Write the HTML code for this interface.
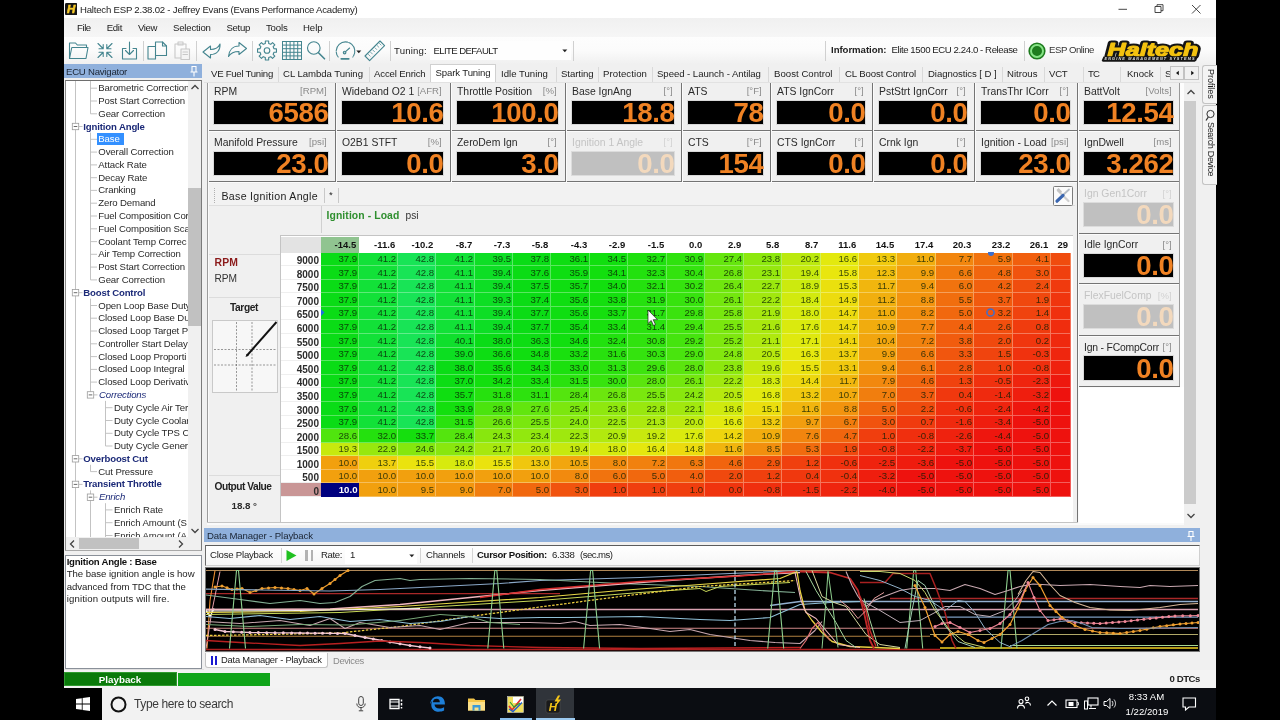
<!DOCTYPE html>
<html><head><meta charset="utf-8"><title>Haltech ESP 2.38.02 - Jeffrey Evans (Evans Performance Academy)</title>
<style>
html,body{margin:0;padding:0;background:#000;}
body{width:1280px;height:720px;overflow:hidden;position:relative;font-family:"Liberation Sans",sans-serif;}
#root{position:absolute;left:0;top:0;width:1280px;height:720px;overflow:hidden;will-change:transform;}
#win{position:absolute;left:64px;top:0;width:1152px;height:688px;background:#f0f0f0;}
.t{position:absolute;white-space:nowrap;overflow:visible;}
.r{position:absolute;box-sizing:border-box;}
.c{position:absolute;box-sizing:border-box;text-align:right;padding-right:2.5px;line-height:14.1px;white-space:nowrap;overflow:hidden;}
</style></head>
<body>
<div id="root">
<div id="win"></div>
<div class="r" style="left:64.0px;top:0.0px;width:1152.0px;height:18.0px;background:#ffffff;"></div>
<svg class="r" style="left:65.0px;top:3.0px;" width="12.4" height="12.2" viewBox="0 0 12.4 12.2"><rect x="0" y="0" width="12.400" height="12.200" rx="1.5" fill="#161616"/><text x="6.100" y="10.300" font-family="Liberation Sans, sans-serif" font-weight="bold" font-style="italic" font-size="11.500" text-anchor="middle" fill="#f5c92a" stroke="#f5c92a" stroke-width="0.600">H</text></svg>
<div class="t " style="top:2.5px;height:14px;line-height:14px;font-size:9.60px;color:#222;left:80.0px;letter-spacing:-0.21px;">Haltech ESP 2.38.02 - Jeffrey Evans (Evans Performance Academy)</div>
<svg class="r" style="left:1110.0px;top:0.0px;" width="100" height="19" viewBox="0 0 100 19"><path d="M8.5 9.3h8.5" stroke="#333" stroke-width="0.9" fill="none"/><path d="M45 6.5h6v6h-6z M47 6.5v-1.8h6v6h-2" stroke="#333" stroke-width="0.9" fill="none"/><path d="M82 5l8.5 8.5M90.5 5l-8.5 8.5" stroke="#333" stroke-width="0.9" fill="none"/></svg>
<div class="r" style="left:64.0px;top:18.0px;width:1152.0px;height:19.0px;background:linear-gradient(#f0f0f0,#f6f6f6);"></div>
<div class="t " style="top:20.8px;height:14px;line-height:14px;font-size:9.60px;color:#1a1a1a;left:77.0px;letter-spacing:-0.42px;">File</div>
<div class="t " style="top:20.8px;height:14px;line-height:14px;font-size:9.60px;color:#1a1a1a;left:106.8px;letter-spacing:-0.34px;">Edit</div>
<div class="t " style="top:20.8px;height:14px;line-height:14px;font-size:9.60px;color:#1a1a1a;left:138.0px;letter-spacing:-0.41px;">View</div>
<div class="t " style="top:20.8px;height:14px;line-height:14px;font-size:9.60px;color:#1a1a1a;left:173.0px;letter-spacing:-0.19px;">Selection</div>
<div class="t " style="top:20.8px;height:14px;line-height:14px;font-size:9.60px;color:#1a1a1a;left:226.5px;letter-spacing:-0.32px;">Setup</div>
<div class="t " style="top:20.8px;height:14px;line-height:14px;font-size:9.60px;color:#1a1a1a;left:266.0px;letter-spacing:-0.18px;">Tools</div>
<div class="t " style="top:20.8px;height:14px;line-height:14px;font-size:9.60px;color:#1a1a1a;left:303.0px;letter-spacing:-0.06px;">Help</div>
<div class="r" style="left:64.0px;top:37.0px;width:1152.0px;height:27.0px;background:linear-gradient(#fdfdfd 0%,#fbfbfb 50%,#f0f0f0 100%);"></div>
<svg class="r" style="left:66.0px;top:38.0px;" width="26" height="24" viewBox="0 0 26 24"><g fill="none" stroke="#44858f" stroke-width="1.1" stroke-linejoin="round" stroke-linecap="round"><path d="M3.5 20.5v-15.5h6l1.8 2h9.2v2.5"/><path d="M3.5 20.5l2.3-11h16.2l-2 11z"/></g></svg>
<svg class="r" style="left:95.0px;top:38.0px;" width="20" height="24" viewBox="0 0 20 24"><g fill="none" stroke="#44858f" stroke-width="1.1" stroke-linejoin="round" stroke-linecap="round"><path d="M3 5.5l5 5M8.2 6.5v4.2h-4.2M17 5.5l-5 5M11.8 6.5v4.2h4.2M3 19.5l5-5M8.2 18.5v-4.2h-4.2M17 19.5l-5-5M11.8 18.5v-4.2h4.2"/></g></svg>
<svg class="r" style="left:119.0px;top:38.0px;" width="22" height="24" viewBox="0 0 22 24"><g fill="none" stroke="#44858f" stroke-width="1.1" stroke-linejoin="round" stroke-linecap="round"><path d="M7 10.5h-3.5v10.5h14v-10.5h-3.5"/><path d="M10.5 4v12M6.5 12.5l4 4 4-4"/></g></svg>
<div class="r" style="left:143.0px;top:41.0px;width:1.0px;height:20.0px;background:#d0d0d0;"></div>
<svg class="r" style="left:146.0px;top:38.0px;" width="24" height="24" viewBox="0 0 24 24"><g fill="none" stroke="#44858f" stroke-width="1.1" stroke-linejoin="round" stroke-linecap="round"><path d="M2 8.5h7.5v12.5h-7.5z"/><path d="M9.5 8.5v-4.5h7l4 4v9.5h-11"/><path d="M16.5 4v4h4"/></g></svg>
<svg class="r" style="left:172.0px;top:38.0px;" width="22" height="24" viewBox="0 0 22 24"><g fill="none" stroke="#c8c8c8" stroke-width="1.1" stroke-linejoin="round" stroke-linecap="round"><path d="M3 6h11v14h-11z"/><path d="M6 4h5v3h-5z"/><path d="M9 11h8.5v10.5h-8.5z" fill="#f4f4f4"/><path d="M11 14h4.5M11 16.5h4.5"/></g></svg>
<div class="r" style="left:196.0px;top:41.0px;width:1.0px;height:20.0px;background:#d0d0d0;"></div>
<svg class="r" style="left:200.0px;top:38.0px;" width="24" height="24" viewBox="0 0 24 24"><g fill="none" stroke="#44858f" stroke-width="1.1" stroke-linejoin="round" stroke-linecap="round"><path d="M3 14l7.5-6v3.5c5 0 8-2 9.5-5.5c0.5 6-3 10.5-9.5 10.5v3.5z"/></g></svg>
<svg class="r" style="left:225.0px;top:38.0px;" width="24" height="24" viewBox="0 0 24 24"><g fill="none" stroke="#44858f" stroke-width="1.1" stroke-linejoin="round" stroke-linecap="round"><path d="M21.5 10.5l-7.5-6v3.5c-6 0-10 4-10.5 10.5c2.5-4 5.5-5 10.5-5v3z"/></g></svg>
<div class="r" style="left:252.0px;top:41.0px;width:1.0px;height:20.0px;background:#d0d0d0;"></div>
<svg class="r" style="left:256.0px;top:38.0px;" width="22" height="24" viewBox="0 0 22 24"><g fill="none" stroke="#44858f" stroke-width="1.1" stroke-linejoin="round" stroke-linecap="round"><path d="M20.46 10.85L20.46 14.15L18.00 14.18L17.14 16.26L18.85 18.02L16.52 20.35L14.76 18.64L12.68 19.50L12.65 21.96L9.35 21.96L9.32 19.50L7.24 18.64L5.48 20.35L3.15 18.02L4.86 16.26L4.00 14.18L1.54 14.15L1.54 10.85L4.00 10.82L4.86 8.74L3.15 6.98L5.48 4.65L7.24 6.36L9.32 5.50L9.35 3.04L12.65 3.04L12.68 5.50L14.76 6.36L16.52 4.65L18.85 6.98L17.14 8.74L18.00 10.82z"/><circle cx="11" cy="12.5" r="2.8"/></g></svg>
<svg class="r" style="left:281.0px;top:38.0px;" width="22" height="24" viewBox="0 0 22 24"><g fill="none" stroke="#44858f" stroke-width="1" stroke-linejoin="round" stroke-linecap="round"><path d="M1.5 3.5v18"/><path d="M5.3 3.5v18"/><path d="M9.1 3.5v18"/><path d="M12.9 3.5v18"/><path d="M16.7 3.5v18"/><path d="M20.5 3.5v18"/><path d="M1.5 3.5h19"/><path d="M1.5 7.1h19"/><path d="M1.5 10.7h19"/><path d="M1.5 14.3h19"/><path d="M1.5 17.9h19"/><path d="M1.5 21.5h19"/></g></svg>
<svg class="r" style="left:305.0px;top:38.0px;" width="22" height="24" viewBox="0 0 22 24"><g fill="none" stroke="#44858f" stroke-width="1.1" stroke-linejoin="round" stroke-linecap="round"><circle cx="8.8" cy="10" r="6.3"/><path d="M13.5 14.8l6 6" stroke-width="1.6"/></g></svg>
<div class="r" style="left:329.0px;top:41.0px;width:1.0px;height:20.0px;background:#d0d0d0;"></div>
<svg class="r" style="left:333.0px;top:38.0px;" width="24" height="24" viewBox="0 0 24 24"><g fill="none" stroke="#44858f" stroke-width="1.1" stroke-linejoin="round" stroke-linecap="round"><path d="M5.2 19a9.3 9.3 0 1 1 14.6 0" stroke-dasharray="5.5 1.2 16 1.2 16 1.2 20"/><path d="M12 14.2l4.6-4.2"/><circle cx="11.6" cy="14.6" r="1.3"/><path d="M8.3 20.8h7.4" stroke-width="1.8"/></g></svg>
<svg class="r" style="left:356.0px;top:50.0px;" width="6" height="4" viewBox="0 0 6 4"><path d="M0.3 0.5h5l-2.5 2.8z" fill="#222"/></svg>
<svg class="r" style="left:363.0px;top:38.0px;" width="24" height="24" viewBox="0 0 24 24"><g fill="none" stroke="#44858f" stroke-width="1.1" stroke-linejoin="round" stroke-linecap="round"><path d="M2 18l15-15 4.6 4.6-15 15z"/><path d="M5.5 16.5l1.6 1.6M7.7 14.3l1.6 1.6M9.9 12.100l1.600 1.600M12.1 9.900l1.600 1.600M14.300 7.700l1.600 1.600M16.500 5.500l1.600 1.600" stroke-width="0.7"/></g></svg>
<div class="r" style="left:390.0px;top:41.0px;width:1.0px;height:20.0px;background:#d0d0d0;"></div>
<div class="t " style="top:43.8px;height:14px;line-height:14px;font-size:9.60px;color:#222;left:394.0px;letter-spacing:0.19px;">Tuning:</div>
<div class="r" style="left:430.0px;top:41.0px;width:141.0px;height:19.0px;background:#fefefe;"></div>
<div class="t " style="top:43.8px;height:14px;line-height:14px;font-size:9.60px;color:#222;left:433.5px;letter-spacing:-0.60px;">ELITE DEFAULT</div>
<svg class="r" style="left:561.5px;top:49.0px;" width="6" height="4" viewBox="0 0 6 4"><path d="M0.3 0.5h5l-2.5 2.8z" fill="#222"/></svg>
<div class="r" style="left:573.0px;top:41.0px;width:1.0px;height:20.0px;background:#d0d0d0;"></div>
<div class="r" style="left:825.0px;top:41.0px;width:1.0px;height:20.0px;background:#d0d0d0;"></div>
<div class="t " style="top:43.3px;height:14px;line-height:14px;font-size:9.60px;color:#222;left:831.0px;font-weight:bold;letter-spacing:-0.04px;">Information:</div>
<div class="t " style="top:43.3px;height:14px;line-height:14px;font-size:9.60px;color:#222;left:891.5px;letter-spacing:-0.41px;">Elite 1500 ECU 2.24.0 - Release</div>
<div class="r" style="left:1023.5px;top:41.0px;width:1.0px;height:20.0px;background:#d0d0d0;"></div>
<svg class="r" style="left:1027.0px;top:40.5px;" width="20" height="20" viewBox="0 0 20 20"><circle cx="10" cy="10" r="8.6" fill="#1d7a1d"/><circle cx="10" cy="10" r="6" fill="none" stroke="#86e486" stroke-width="2"/><circle cx="10" cy="10" r="4" fill="#1e7d1e"/></svg>
<div class="t " style="top:43.3px;height:14px;line-height:14px;font-size:9.60px;color:#333;left:1049.0px;letter-spacing:-0.45px;">ESP Online</div>
<svg class="r" style="left:1100.0px;top:39.0px;" width="106" height="24" viewBox="0 0 106 24"><g transform="translate(7.5,17.4) scale(1.34,1)" font-family="Liberation Sans, sans-serif" font-weight="bold" font-style="italic" font-size="18.800"><text x="0" y="0" fill="#141414" stroke="#141414" stroke-width="5.2" stroke-linejoin="round">Haltech</text><text x="0" y="0" fill="#f4c20f" stroke="#f4c20f" stroke-width="1.1" stroke-linejoin="round">Haltech</text></g><path d="M3.5 17.5h94.500l-1.800 4.200-1.500 1h-92l-1-1.200z" fill="#141414"/><text x="4.500" y="21.400" font-family="Liberation Sans, sans-serif" font-weight="bold" font-style="italic" font-size="3.800" fill="#e4e4e4" textLength="90" lengthAdjust="spacing">ENGINE MANAGEMENT SYSTEMS</text></svg>
<div class="r" style="left:64.0px;top:64.0px;width:138.0px;height:14.0px;background:#8fb0dc;"></div>
<div class="t " style="top:64.8px;height:14px;line-height:14px;font-size:9.60px;color:#1a2433;left:66.0px;letter-spacing:-0.23px;">ECU Navigator</div>
<svg class="r" style="left:189.0px;top:65.0px;" width="10" height="13" viewBox="0 0 10 13"><path d="M3 1.500h4v5.500h-4z M1.500 7h7 M5 7v4.500" fill="none" stroke="#fff" stroke-width="1.1"/></svg>
<div class="r" style="left:65.0px;top:79.5px;width:137.0px;height:471.0px;background:#ffffff;border:1px solid #a8a8a8;border-top-color:#6e6e6e;border-right-color:#7a7a7a;border-left-color:#8a8a8a;"></div>
<div class="r" style="left:187.5px;top:80.5px;width:13.5px;height:456.0px;background:#f0f0f0;"></div>
<div class="r" style="left:187.5px;top:188.0px;width:13.5px;height:138.0px;background:#c1c1c1;"></div>
<svg class="r" style="left:189.5px;top:83.0px;" width="10" height="8" viewBox="0 0 10 8"><path d="M1.500 6l3.500-3.500 3.500 3.500" fill="none" stroke="#444" stroke-width="1.3"/></svg>
<svg class="r" style="left:189.5px;top:526.5px;" width="10" height="8" viewBox="0 0 10 8"><path d="M1.500 2l3.500 3.500 3.500-3.500" fill="none" stroke="#444" stroke-width="1.3"/></svg>
<div class="r" style="left:66.0px;top:536.5px;width:121.5px;height:13.0px;background:#f0f0f0;"></div>
<div class="r" style="left:187.5px;top:536.5px;width:13.5px;height:13.0px;background:#f0f0f0;"></div>
<div class="r" style="left:79.4px;top:538.0px;width:59.4px;height:10.8px;background:#c1c1c1;"></div>
<svg class="r" style="left:68.0px;top:538.5px;" width="8" height="10" viewBox="0 0 8 10"><path d="M6 1.500l-3.500 3.500 3.500 3.500" fill="none" stroke="#444" stroke-width="1.300"/></svg>
<svg class="r" style="left:177.0px;top:538.5px;" width="8" height="10" viewBox="0 0 8 10"><path d="M2 1.500l3.500 3.500-3.500 3.500" fill="none" stroke="#444" stroke-width="1.300"/></svg>
<div class="r" style="left:66px;top:80.5px;width:121.5px;height:456px;overflow:hidden;">
<div class="t " style="top:0.7px;height:14px;line-height:14px;font-size:9.60px;color:#2a2a2a;left:32.3px;letter-spacing:-0.11px;">Barometric Correction</div>
<div class="t " style="top:13.5px;height:14px;line-height:14px;font-size:9.60px;color:#2a2a2a;left:32.3px;letter-spacing:-0.11px;">Post Start Correction</div>
<div class="t " style="top:26.3px;height:14px;line-height:14px;font-size:9.60px;color:#2a2a2a;left:32.3px;letter-spacing:-0.11px;">Gear Correction</div>
<div class="t " style="top:39.0px;height:14px;line-height:14px;font-size:9.60px;color:#1c2a78;left:17.3px;font-weight:bold;letter-spacing:-0.15px;">Ignition Angle</div>
<div class="r" style="left:30.7px;top:52.0px;width:27.0px;height:12.5px;background:#3390ff;"></div>
<div class="t " style="top:51.8px;height:14px;line-height:14px;font-size:9.60px;color:#ffffff;left:32.3px;letter-spacing:-0.14px;">Base</div>
<div class="t " style="top:64.6px;height:14px;line-height:14px;font-size:9.60px;color:#2a2a2a;left:32.3px;letter-spacing:-0.11px;">Overall Correction</div>
<div class="t " style="top:77.4px;height:14px;line-height:14px;font-size:9.60px;color:#2a2a2a;left:32.3px;letter-spacing:-0.11px;">Attack Rate</div>
<div class="t " style="top:90.2px;height:14px;line-height:14px;font-size:9.60px;color:#2a2a2a;left:32.3px;letter-spacing:-0.13px;">Decay Rate</div>
<div class="t " style="top:102.9px;height:14px;line-height:14px;font-size:9.60px;color:#2a2a2a;left:32.3px;letter-spacing:-0.12px;">Cranking</div>
<div class="t " style="top:115.7px;height:14px;line-height:14px;font-size:9.60px;color:#2a2a2a;left:32.3px;letter-spacing:-0.13px;">Zero Demand</div>
<div class="t " style="top:128.5px;height:14px;line-height:14px;font-size:9.60px;color:#2a2a2a;left:32.3px;letter-spacing:-0.12px;">Fuel Composition Cor</div>
<div class="t " style="top:141.3px;height:14px;line-height:14px;font-size:9.60px;color:#2a2a2a;left:32.3px;letter-spacing:-0.12px;">Fuel Composition Sca</div>
<div class="t " style="top:154.1px;height:14px;line-height:14px;font-size:9.60px;color:#2a2a2a;left:32.3px;letter-spacing:-0.12px;">Coolant Temp Correc</div>
<div class="t " style="top:166.8px;height:14px;line-height:14px;font-size:9.60px;color:#2a2a2a;left:32.3px;letter-spacing:-0.11px;">Air Temp Correction</div>
<div class="t " style="top:179.6px;height:14px;line-height:14px;font-size:9.60px;color:#2a2a2a;left:32.3px;letter-spacing:-0.11px;">Post Start Correction</div>
<div class="t " style="top:192.4px;height:14px;line-height:14px;font-size:9.60px;color:#2a2a2a;left:32.3px;letter-spacing:-0.11px;">Gear Correction</div>
<div class="t " style="top:205.2px;height:14px;line-height:14px;font-size:9.60px;color:#1c2a78;left:17.3px;font-weight:bold;letter-spacing:-0.16px;">Boost Control</div>
<div class="t " style="top:218.0px;height:14px;line-height:14px;font-size:9.60px;color:#2a2a2a;left:32.3px;letter-spacing:-0.12px;">Open Loop Base Duty</div>
<div class="t " style="top:230.7px;height:14px;line-height:14px;font-size:9.60px;color:#2a2a2a;left:32.3px;letter-spacing:-0.12px;">Closed Loop Base Du</div>
<div class="t " style="top:243.5px;height:14px;line-height:14px;font-size:9.60px;color:#2a2a2a;left:32.3px;letter-spacing:-0.12px;">Closed Loop Target P</div>
<div class="t " style="top:256.3px;height:14px;line-height:14px;font-size:9.60px;color:#2a2a2a;left:32.3px;letter-spacing:-0.10px;">Controller Start Delay</div>
<div class="t " style="top:269.1px;height:14px;line-height:14px;font-size:9.60px;color:#2a2a2a;left:32.3px;letter-spacing:-0.11px;">Closed Loop Proporti</div>
<div class="t " style="top:281.9px;height:14px;line-height:14px;font-size:9.60px;color:#2a2a2a;left:32.3px;letter-spacing:-0.11px;">Closed Loop Integral</div>
<div class="t " style="top:294.6px;height:14px;line-height:14px;font-size:9.60px;color:#2a2a2a;left:32.3px;letter-spacing:-0.11px;">Closed Loop Derivativ</div>
<div class="t " style="top:307.4px;height:14px;line-height:14px;font-size:9.60px;color:#1c2a78;left:33.0px;font-style:italic;letter-spacing:-0.18px;">Corrections</div>
<div class="t " style="top:320.2px;height:14px;line-height:14px;font-size:9.60px;color:#2a2a2a;left:48.0px;letter-spacing:-0.11px;">Duty Cycle Air Ter</div>
<div class="t " style="top:333.0px;height:14px;line-height:14px;font-size:9.60px;color:#2a2a2a;left:48.0px;letter-spacing:-0.11px;">Duty Cycle Coolar</div>
<div class="t " style="top:345.8px;height:14px;line-height:14px;font-size:9.60px;color:#2a2a2a;left:48.0px;letter-spacing:-0.12px;">Duty Cycle TPS Co</div>
<div class="t " style="top:358.5px;height:14px;line-height:14px;font-size:9.60px;color:#2a2a2a;left:48.0px;letter-spacing:-0.11px;">Duty Cycle Generi</div>
<div class="t " style="top:371.3px;height:14px;line-height:14px;font-size:9.60px;color:#1c2a78;left:17.3px;font-weight:bold;letter-spacing:-0.16px;">Overboost Cut</div>
<div class="t " style="top:384.1px;height:14px;line-height:14px;font-size:9.60px;color:#2a2a2a;left:32.3px;letter-spacing:-0.12px;">Cut Pressure</div>
<div class="t " style="top:396.9px;height:14px;line-height:14px;font-size:9.60px;color:#1c2a78;left:17.3px;font-weight:bold;letter-spacing:-0.14px;">Transient Throttle</div>
<div class="t " style="top:409.7px;height:14px;line-height:14px;font-size:9.60px;color:#1c2a78;left:33.0px;font-style:italic;letter-spacing:-0.18px;">Enrich</div>
<div class="t " style="top:422.4px;height:14px;line-height:14px;font-size:9.60px;color:#2a2a2a;left:48.0px;letter-spacing:-0.11px;">Enrich Rate</div>
<div class="t " style="top:435.2px;height:14px;line-height:14px;font-size:9.60px;color:#2a2a2a;left:48.0px;letter-spacing:-0.12px;">Enrich Amount (S</div>
<div class="t " style="top:448.0px;height:14px;line-height:14px;font-size:9.60px;color:#2a2a2a;left:48.0px;letter-spacing:-0.12px;">Enrich Amount (A</div>
<svg class="r" style="left:-66px;top:-80.5px" width="260" height="640" viewBox="0 0 260 640"><g stroke="#bcbcbc" stroke-width="0.9" fill="none"><path d="M90.5 88.2L97.0 88.2"/><path d="M90.5 101.0L97.0 101.0"/><path d="M90.5 113.8L97.0 113.8"/><path d="M79.0 126.5L82.5 126.5"/><path d="M90.5 139.3L97.0 139.3"/><path d="M90.5 152.1L97.0 152.1"/><path d="M90.5 164.9L97.0 164.9"/><path d="M90.5 177.7L97.0 177.7"/><path d="M90.5 190.4L97.0 190.4"/><path d="M90.5 203.2L97.0 203.2"/><path d="M90.5 216.0L97.0 216.0"/><path d="M90.5 228.8L97.0 228.8"/><path d="M90.5 241.6L97.0 241.6"/><path d="M90.5 254.3L97.0 254.3"/><path d="M90.5 267.1L97.0 267.1"/><path d="M90.5 279.9L97.0 279.9"/><path d="M79.0 292.7L82.5 292.7"/><path d="M90.5 305.5L97.0 305.5"/><path d="M90.5 318.2L97.0 318.2"/><path d="M90.5 331.0L97.0 331.0"/><path d="M90.5 343.8L97.0 343.8"/><path d="M90.5 356.6L97.0 356.6"/><path d="M90.5 369.4L97.0 369.4"/><path d="M90.5 382.1L97.0 382.1"/><path d="M94.0 394.9L97.5 394.9"/><path d="M105.5 407.7L112.5 407.7"/><path d="M105.5 420.5L112.5 420.5"/><path d="M105.5 433.3L112.5 433.3"/><path d="M105.5 446.0L112.5 446.0"/><path d="M79.0 458.8L82.5 458.8"/><path d="M90.5 471.6L97.0 471.6"/><path d="M79.0 484.4L82.5 484.4"/><path d="M94.0 497.2L97.5 497.2"/><path d="M105.5 509.9L112.5 509.9"/><path d="M105.5 522.7L112.5 522.7"/><path d="M105.5 535.5L112.5 535.5"/><path d="M75.5 80.0L75.5 545.0"/><path d="M90.5 80.0L90.5 113.8"/><path d="M90.5 132.5L90.5 279.9"/><path d="M90.5 298.7L90.5 394.9"/><path d="M105.5 400.9L105.5 446.0"/><path d="M90.5 464.8L90.5 471.6"/><path d="M90.5 490.4L90.5 545.0"/><path d="M105.5 503.2L105.5 545.0"/></g><rect x="72.3" y="123.3" width="6.400" height="6.400" fill="#fff" stroke="#9c9c9c" stroke-width="0.8"/><path d="M73.7 126.5h3.600" stroke="#444" stroke-width="0.8"/><rect x="72.3" y="289.5" width="6.400" height="6.400" fill="#fff" stroke="#9c9c9c" stroke-width="0.8"/><path d="M73.7 292.7h3.600" stroke="#444" stroke-width="0.8"/><rect x="87.3" y="391.7" width="6.400" height="6.400" fill="#fff" stroke="#9c9c9c" stroke-width="0.8"/><path d="M88.7 394.9h3.600" stroke="#444" stroke-width="0.8"/><rect x="72.3" y="455.6" width="6.400" height="6.400" fill="#fff" stroke="#9c9c9c" stroke-width="0.8"/><path d="M73.7 458.8h3.600" stroke="#444" stroke-width="0.8"/><rect x="72.3" y="481.2" width="6.400" height="6.400" fill="#fff" stroke="#9c9c9c" stroke-width="0.8"/><path d="M73.7 484.4h3.600" stroke="#444" stroke-width="0.8"/><rect x="87.3" y="494.0" width="6.400" height="6.400" fill="#fff" stroke="#9c9c9c" stroke-width="0.8"/><path d="M88.7 497.2h3.600" stroke="#444" stroke-width="0.8"/></svg>
</div>
<div class="r" style="left:65.0px;top:555.0px;width:137.0px;height:113.5px;background:#ffffff;border:1px solid #8a9099;"></div>
<div class="t " style="top:555.3px;height:14px;line-height:14px;font-size:9.60px;color:#111;left:66.7px;font-weight:bold;letter-spacing:-0.24px;">Ignition Angle : Base</div>
<div class="t " style="top:567.3px;height:14px;line-height:14px;font-size:9.60px;color:#222;left:66.7px;letter-spacing:-0.04px;">The base ignition angle is how</div>
<div class="t " style="top:579.7px;height:14px;line-height:14px;font-size:9.60px;color:#222;left:66.7px;letter-spacing:-0.05px;">advanced from TDC that the</div>
<div class="t " style="top:591.5px;height:14px;line-height:14px;font-size:9.60px;color:#222;left:66.7px;letter-spacing:0.14px;">ignition outputs will fire.</div>
<div class="r" style="left:64.0px;top:669.0px;width:1152.0px;height:19.0px;background:#f3f3f3;border-top:1px solid #e0e0e0;"></div>
<div class="r" style="left:64.0px;top:672.0px;width:112.5px;height:14.0px;background:#0a7a0a;border:1px solid #2f9a2f;"></div>
<div class="t " style="top:671.8px;height:15px;line-height:15px;font-size:9.80px;color:#ffffff;left:20.0px;width:200px;text-align:center;font-weight:bold;">Playback</div>
<div class="r" style="left:178.0px;top:672.5px;width:92.0px;height:13.5px;background:#10a51a;"></div>
<div class="t " style="top:672.1px;height:14px;line-height:14px;font-size:9.60px;color:#222;right:80.0px;font-weight:bold;letter-spacing:-0.43px;">0 DTCs</div>
<div class="r" style="left:204.0px;top:64.0px;width:996.0px;height:18.0px;background:#f0f0f0;"></div>
<div class="r" style="left:278.0px;top:66.5px;width:1.0px;height:15.5px;background:#d9d9d9;"></div>
<div class="r" style="left:368.5px;top:66.5px;width:1.0px;height:15.5px;background:#d9d9d9;"></div>
<div class="r" style="left:430.0px;top:66.5px;width:1.0px;height:15.5px;background:#d9d9d9;"></div>
<div class="r" style="left:495.0px;top:66.5px;width:1.0px;height:15.5px;background:#d9d9d9;"></div>
<div class="r" style="left:555.5px;top:66.5px;width:1.0px;height:15.5px;background:#d9d9d9;"></div>
<div class="r" style="left:598.0px;top:66.5px;width:1.0px;height:15.5px;background:#d9d9d9;"></div>
<div class="r" style="left:652.0px;top:66.5px;width:1.0px;height:15.5px;background:#d9d9d9;"></div>
<div class="r" style="left:767.5px;top:66.5px;width:1.0px;height:15.5px;background:#d9d9d9;"></div>
<div class="r" style="left:838.5px;top:66.5px;width:1.0px;height:15.5px;background:#d9d9d9;"></div>
<div class="r" style="left:922.0px;top:66.5px;width:1.0px;height:15.5px;background:#d9d9d9;"></div>
<div class="r" style="left:1001.5px;top:66.5px;width:1.0px;height:15.5px;background:#d9d9d9;"></div>
<div class="r" style="left:1043.5px;top:66.5px;width:1.0px;height:15.5px;background:#d9d9d9;"></div>
<div class="r" style="left:1082.5px;top:66.5px;width:1.0px;height:15.5px;background:#d9d9d9;"></div>
<div class="r" style="left:1120.0px;top:66.5px;width:1.0px;height:15.5px;background:#d9d9d9;"></div>
<div class="r" style="left:1159.5px;top:66.5px;width:1.0px;height:15.5px;background:#d9d9d9;"></div>
<div class="r" style="left:430.0px;top:64.0px;width:65.5px;height:19.0px;background:#ffffff;border:1px solid #d0d0d0;border-bottom:none;"></div>
<div class="t " style="top:67.2px;height:14px;line-height:14px;font-size:9.60px;color:#222;left:211.0px;letter-spacing:-0.26px;">VE Fuel Tuning</div>
<div class="t " style="top:67.2px;height:14px;line-height:14px;font-size:9.60px;color:#222;left:283.0px;letter-spacing:-0.05px;">CL Lambda Tuning</div>
<div class="t " style="top:67.2px;height:14px;line-height:14px;font-size:9.60px;color:#222;left:374.0px;letter-spacing:-0.15px;">Accel Enrich</div>
<div class="t " style="top:65.7px;height:14px;line-height:14px;font-size:9.60px;color:#222;left:435.5px;letter-spacing:-0.13px;">Spark Tuning</div>
<div class="t " style="top:67.2px;height:14px;line-height:14px;font-size:9.60px;color:#222;left:501.0px;">Idle Tuning</div>
<div class="t " style="top:67.2px;height:14px;line-height:14px;font-size:9.60px;color:#222;left:561.0px;letter-spacing:-0.07px;">Starting</div>
<div class="t " style="top:67.2px;height:14px;line-height:14px;font-size:9.60px;color:#222;left:603.0px;letter-spacing:0.08px;">Protection</div>
<div class="t " style="top:67.2px;height:14px;line-height:14px;font-size:9.60px;color:#222;left:657.0px;letter-spacing:-0.05px;">Speed - Launch - Antilag</div>
<div class="t " style="top:67.2px;height:14px;line-height:14px;font-size:9.60px;color:#222;left:774.0px;letter-spacing:0.03px;">Boost Control</div>
<div class="t " style="top:67.2px;height:14px;line-height:14px;font-size:9.60px;color:#222;left:845.0px;letter-spacing:-0.11px;">CL Boost Control</div>
<div class="t " style="top:67.2px;height:14px;line-height:14px;font-size:9.60px;color:#222;left:928.0px;letter-spacing:-0.08px;">Diagnostics [ D ]</div>
<div class="t " style="top:67.2px;height:14px;line-height:14px;font-size:9.60px;color:#222;left:1007.0px;letter-spacing:0.01px;">Nitrous</div>
<div class="t " style="top:67.2px;height:14px;line-height:14px;font-size:9.60px;color:#222;left:1049.0px;letter-spacing:-0.23px;">VCT</div>
<div class="t " style="top:67.2px;height:14px;line-height:14px;font-size:9.60px;color:#222;left:1088.0px;letter-spacing:-0.90px;">TC</div>
<div class="t " style="top:67.2px;height:14px;line-height:14px;font-size:9.60px;color:#222;left:1127.0px;letter-spacing:-0.04px;">Knock</div>
<div class="t " style="top:67.2px;height:14px;line-height:14px;font-size:9.60px;color:#222;left:1165.0px;">S</div>
<div class="r" style="left:1170.0px;top:65.8px;width:14.4px;height:13.8px;background:#f0f0f0;border:1px solid #c2c2c2;"></div>
<div class="r" style="left:1184.4px;top:65.8px;width:14.4px;height:13.8px;background:#f0f0f0;border:1px solid #c2c2c2;"></div>
<svg class="r" style="left:1175.0px;top:70.0px;" width="5" height="6" viewBox="0 0 5 6"><path d="M3.800 0.800v4.400l-2.800-2.200z" fill="#111"/></svg>
<svg class="r" style="left:1189.5px;top:70.0px;" width="5" height="6" viewBox="0 0 5 6"><path d="M1.200 0.800v4.400l2.800-2.200z" fill="#111"/></svg>
<div class="r" style="left:204.0px;top:82.0px;width:996.0px;height:444.0px;background:#f0f0f0;border-top:1px solid #e2e2e2;"></div>
<div class="r" style="left:1184.0px;top:83.0px;width:13.5px;height:441.0px;background:#f0f0f0;"></div>
<div class="r" style="left:1184.3px;top:101.2px;width:11.6px;height:403.0px;background:#cbcbcb;"></div>
<svg class="r" style="left:1185.5px;top:88.0px;" width="10" height="8" viewBox="0 0 10 8"><path d="M1.500 6l3.500-3.500 3.500 3.500" fill="none" stroke="#444" stroke-width="1.3"/></svg>
<svg class="r" style="left:1185.5px;top:512.0px;" width="10" height="8" viewBox="0 0 10 8"><path d="M1.500 2l3.500 3.500 3.500-3.500" fill="none" stroke="#444" stroke-width="1.3"/></svg>
<div class="r" style="left:1200.0px;top:64.0px;width:16.0px;height:606.0px;background:#f0f0f0;"></div>
<div class="r" style="left:1201.5px;top:64.5px;width:15.0px;height:39.5px;background:#f4f4f4;border:1px solid #c4c4c4;border-right:none;border-radius:3px 0 0 3px;"></div>
<div class="r" style="left:1201.5px;top:105.2px;width:15.0px;height:79.5px;background:#f4f4f4;border:1px solid #c4c4c4;border-right:none;border-radius:3px 0 0 3px;"></div>
<div class="t" style="left:1204.500px;top:69.2px;font-size:9px;color:#222;writing-mode:vertical-rl;line-height:12px;letter-spacing:-0.03px;">Profiles</div>
<div class="t" style="left:1204.500px;top:122px;font-size:9px;color:#222;writing-mode:vertical-rl;line-height:12px;letter-spacing:-0.33px;">Search Device</div>
<svg class="r" style="left:1204.0px;top:108.5px;" width="12" height="13" viewBox="0 0 12 13"><circle cx="6.500" cy="5" r="3.600" fill="none" stroke="#333" stroke-width="1"/><path d="M4.300 8l-2.300 3.500" stroke="#333" stroke-width="1.300"/></svg>
<div class="r" style="left:208.0px;top:83.4px;width:126.0px;height:46.8px;background:#f0f0f0;"></div>
<div class="t " style="top:83.7px;height:16px;line-height:16px;font-size:10.40px;color:#2a2a2a;left:214.0px;">RPM</div>
<div class="t " style="top:84.4px;height:14px;line-height:14px;font-size:9.60px;color:#8a8a8a;right:953.3px;">[RPM]</div>
<div class="r" style="left:214.0px;top:100.6px;width:114.0px;height:23.5px;background:#000000;box-shadow:0 0 0 1px #d8d8d8;"></div>
<div class="t " style="top:93.9px;height:38px;line-height:38px;font-size:27.60px;color:#f08223;right:951.5px;font-weight:bold;letter-spacing:-0.35px;">6586</div>
<div class="r" style="left:336.0px;top:83.4px;width:113.0px;height:46.8px;background:#f0f0f0;"></div>
<div class="t " style="top:83.7px;height:16px;line-height:16px;font-size:10.40px;color:#2a2a2a;left:342.0px;">Wideband O2 1</div>
<div class="t " style="top:84.4px;height:14px;line-height:14px;font-size:9.60px;color:#8a8a8a;right:838.3px;">[AFR]</div>
<div class="r" style="left:342.0px;top:100.6px;width:101.0px;height:23.5px;background:#000000;box-shadow:0 0 0 1px #d8d8d8;"></div>
<div class="t " style="top:93.9px;height:38px;line-height:38px;font-size:27.60px;color:#f08223;right:836.5px;font-weight:bold;letter-spacing:-0.35px;">10.6</div>
<div class="r" style="left:451.0px;top:83.4px;width:113.0px;height:46.8px;background:#f0f0f0;"></div>
<div class="t " style="top:83.7px;height:16px;line-height:16px;font-size:10.40px;color:#2a2a2a;left:457.0px;">Throttle Position</div>
<div class="t " style="top:84.4px;height:14px;line-height:14px;font-size:9.60px;color:#8a8a8a;right:723.3px;">[%]</div>
<div class="r" style="left:457.0px;top:100.6px;width:101.0px;height:23.5px;background:#000000;box-shadow:0 0 0 1px #d8d8d8;"></div>
<div class="t " style="top:93.9px;height:38px;line-height:38px;font-size:27.60px;color:#f08223;right:721.5px;font-weight:bold;letter-spacing:-0.35px;">100.0</div>
<div class="r" style="left:566.0px;top:83.4px;width:114.0px;height:46.8px;background:#f0f0f0;"></div>
<div class="t " style="top:83.7px;height:16px;line-height:16px;font-size:10.40px;color:#2a2a2a;left:572.0px;">Base IgnAng</div>
<div class="t " style="top:84.4px;height:14px;line-height:14px;font-size:9.60px;color:#8a8a8a;right:607.3px;">[°]</div>
<div class="r" style="left:572.0px;top:100.6px;width:102.0px;height:23.5px;background:#000000;box-shadow:0 0 0 1px #d8d8d8;"></div>
<div class="t " style="top:93.9px;height:38px;line-height:38px;font-size:27.60px;color:#f08223;right:605.5px;font-weight:bold;letter-spacing:-0.35px;">18.8</div>
<div class="r" style="left:682.0px;top:83.4px;width:87.0px;height:46.8px;background:#f0f0f0;"></div>
<div class="t " style="top:83.7px;height:16px;line-height:16px;font-size:10.40px;color:#2a2a2a;left:688.0px;">ATS</div>
<div class="t " style="top:84.4px;height:14px;line-height:14px;font-size:9.60px;color:#8a8a8a;right:518.3px;">[°F]</div>
<div class="r" style="left:688.0px;top:100.6px;width:75.0px;height:23.5px;background:#000000;box-shadow:0 0 0 1px #d8d8d8;"></div>
<div class="t " style="top:93.9px;height:38px;line-height:38px;font-size:27.60px;color:#f08223;right:516.5px;font-weight:bold;letter-spacing:-0.35px;">78</div>
<div class="r" style="left:771.0px;top:83.4px;width:100.0px;height:46.8px;background:#f0f0f0;"></div>
<div class="t " style="top:83.7px;height:16px;line-height:16px;font-size:10.40px;color:#2a2a2a;left:777.0px;">ATS IgnCorr</div>
<div class="t " style="top:84.4px;height:14px;line-height:14px;font-size:9.60px;color:#8a8a8a;right:416.3px;">[°]</div>
<div class="r" style="left:777.0px;top:100.6px;width:88.0px;height:23.5px;background:#000000;box-shadow:0 0 0 1px #d8d8d8;"></div>
<div class="t " style="top:93.9px;height:38px;line-height:38px;font-size:27.60px;color:#f08223;right:414.5px;font-weight:bold;letter-spacing:-0.35px;">0.0</div>
<div class="r" style="left:873.0px;top:83.4px;width:100.0px;height:46.8px;background:#f0f0f0;"></div>
<div class="t " style="top:83.7px;height:16px;line-height:16px;font-size:10.40px;color:#2a2a2a;left:879.0px;">PstStrt IgnCorr</div>
<div class="t " style="top:84.4px;height:14px;line-height:14px;font-size:9.60px;color:#8a8a8a;right:314.3px;">[°]</div>
<div class="r" style="left:879.0px;top:100.6px;width:88.0px;height:23.5px;background:#000000;box-shadow:0 0 0 1px #d8d8d8;"></div>
<div class="t " style="top:93.9px;height:38px;line-height:38px;font-size:27.60px;color:#f08223;right:312.5px;font-weight:bold;letter-spacing:-0.35px;">0.0</div>
<div class="r" style="left:975.0px;top:83.4px;width:101.0px;height:46.8px;background:#f0f0f0;"></div>
<div class="t " style="top:83.7px;height:16px;line-height:16px;font-size:10.40px;color:#2a2a2a;left:981.0px;">TransThr ICorr</div>
<div class="t " style="top:84.4px;height:14px;line-height:14px;font-size:9.60px;color:#8a8a8a;right:211.3px;">[°]</div>
<div class="r" style="left:981.0px;top:100.6px;width:89.0px;height:23.5px;background:#000000;box-shadow:0 0 0 1px #d8d8d8;"></div>
<div class="t " style="top:93.9px;height:38px;line-height:38px;font-size:27.60px;color:#f08223;right:209.5px;font-weight:bold;letter-spacing:-0.35px;">0.0</div>
<div class="r" style="left:1078.0px;top:83.4px;width:101.0px;height:46.8px;background:#f0f0f0;"></div>
<div class="t " style="top:83.7px;height:16px;line-height:16px;font-size:10.40px;color:#2a2a2a;left:1084.0px;">BattVolt</div>
<div class="t " style="top:84.4px;height:14px;line-height:14px;font-size:9.60px;color:#8a8a8a;right:108.3px;">[Volts]</div>
<div class="r" style="left:1084.0px;top:100.6px;width:89.0px;height:23.5px;background:#000000;box-shadow:0 0 0 1px #d8d8d8;"></div>
<div class="t " style="top:93.9px;height:38px;line-height:38px;font-size:27.60px;color:#f08223;right:106.5px;font-weight:bold;letter-spacing:-0.35px;">12.54</div>
<div class="r" style="left:208.0px;top:131.2px;width:126.0px;height:49.8px;background:#f0f0f0;"></div>
<div class="t " style="top:134.7px;height:16px;line-height:16px;font-size:10.40px;color:#2a2a2a;left:214.0px;">Manifold Pressure</div>
<div class="t " style="top:135.4px;height:14px;line-height:14px;font-size:9.60px;color:#8a8a8a;right:953.3px;">[psi]</div>
<div class="r" style="left:214.0px;top:151.6px;width:114.0px;height:23.3px;background:#000000;box-shadow:0 0 0 1px #d8d8d8;"></div>
<div class="t " style="top:144.7px;height:38px;line-height:38px;font-size:27.60px;color:#f08223;right:951.5px;font-weight:bold;letter-spacing:-0.35px;">23.0</div>
<div class="r" style="left:336.0px;top:131.2px;width:113.0px;height:49.8px;background:#f0f0f0;"></div>
<div class="t " style="top:134.7px;height:16px;line-height:16px;font-size:10.40px;color:#2a2a2a;left:342.0px;">O2B1 STFT</div>
<div class="t " style="top:135.4px;height:14px;line-height:14px;font-size:9.60px;color:#8a8a8a;right:838.3px;">[%]</div>
<div class="r" style="left:342.0px;top:151.6px;width:101.0px;height:23.3px;background:#000000;box-shadow:0 0 0 1px #d8d8d8;"></div>
<div class="t " style="top:144.7px;height:38px;line-height:38px;font-size:27.60px;color:#f08223;right:836.5px;font-weight:bold;letter-spacing:-0.35px;">0.0</div>
<div class="r" style="left:451.0px;top:131.2px;width:113.0px;height:49.8px;background:#f0f0f0;"></div>
<div class="t " style="top:134.7px;height:16px;line-height:16px;font-size:10.40px;color:#2a2a2a;left:457.0px;">ZeroDem Ign</div>
<div class="t " style="top:135.4px;height:14px;line-height:14px;font-size:9.60px;color:#8a8a8a;right:723.3px;">[°]</div>
<div class="r" style="left:457.0px;top:151.6px;width:101.0px;height:23.3px;background:#000000;box-shadow:0 0 0 1px #d8d8d8;"></div>
<div class="t " style="top:144.7px;height:38px;line-height:38px;font-size:27.60px;color:#f08223;right:721.5px;font-weight:bold;letter-spacing:-0.35px;">3.0</div>
<div class="r" style="left:566.0px;top:131.2px;width:114.0px;height:49.8px;background:#f0f0f0;"></div>
<div class="t " style="top:134.7px;height:16px;line-height:16px;font-size:10.40px;color:#c4c4c4;left:572.0px;">Ignition 1 Angle</div>
<div class="t " style="top:135.4px;height:14px;line-height:14px;font-size:9.60px;color:#d2d2d2;right:607.3px;">[°]</div>
<div class="r" style="left:572.0px;top:151.6px;width:102.0px;height:23.3px;background:#c0c0c0;box-shadow:0 0 0 1px #dcdcdc;"></div>
<div class="t " style="top:144.7px;height:38px;line-height:38px;font-size:27.60px;color:#f3d9bd;right:605.5px;font-weight:bold;letter-spacing:-0.35px;">0.0</div>
<div class="r" style="left:682.0px;top:131.2px;width:87.0px;height:49.8px;background:#f0f0f0;"></div>
<div class="t " style="top:134.7px;height:16px;line-height:16px;font-size:10.40px;color:#2a2a2a;left:688.0px;">CTS</div>
<div class="t " style="top:135.4px;height:14px;line-height:14px;font-size:9.60px;color:#8a8a8a;right:518.3px;">[°F]</div>
<div class="r" style="left:688.0px;top:151.6px;width:75.0px;height:23.3px;background:#000000;box-shadow:0 0 0 1px #d8d8d8;"></div>
<div class="t " style="top:144.7px;height:38px;line-height:38px;font-size:27.60px;color:#f08223;right:516.5px;font-weight:bold;letter-spacing:-0.35px;">154</div>
<div class="r" style="left:771.0px;top:131.2px;width:100.0px;height:49.8px;background:#f0f0f0;"></div>
<div class="t " style="top:134.7px;height:16px;line-height:16px;font-size:10.40px;color:#2a2a2a;left:777.0px;">CTS IgnCorr</div>
<div class="t " style="top:135.4px;height:14px;line-height:14px;font-size:9.60px;color:#8a8a8a;right:416.3px;">[°]</div>
<div class="r" style="left:777.0px;top:151.6px;width:88.0px;height:23.3px;background:#000000;box-shadow:0 0 0 1px #d8d8d8;"></div>
<div class="t " style="top:144.7px;height:38px;line-height:38px;font-size:27.60px;color:#f08223;right:414.5px;font-weight:bold;letter-spacing:-0.35px;">0.0</div>
<div class="r" style="left:873.0px;top:131.2px;width:100.0px;height:49.8px;background:#f0f0f0;"></div>
<div class="t " style="top:134.7px;height:16px;line-height:16px;font-size:10.40px;color:#2a2a2a;left:879.0px;">Crnk Ign</div>
<div class="t " style="top:135.4px;height:14px;line-height:14px;font-size:9.60px;color:#8a8a8a;right:314.3px;">[°]</div>
<div class="r" style="left:879.0px;top:151.6px;width:88.0px;height:23.3px;background:#000000;box-shadow:0 0 0 1px #d8d8d8;"></div>
<div class="t " style="top:144.7px;height:38px;line-height:38px;font-size:27.60px;color:#f08223;right:312.5px;font-weight:bold;letter-spacing:-0.35px;">0.0</div>
<div class="r" style="left:975.0px;top:131.2px;width:101.0px;height:49.8px;background:#f0f0f0;"></div>
<div class="t " style="top:134.7px;height:16px;line-height:16px;font-size:10.40px;color:#2a2a2a;left:981.0px;">Ignition - Load</div>
<div class="t " style="top:135.4px;height:14px;line-height:14px;font-size:9.60px;color:#8a8a8a;right:211.3px;">[psi]</div>
<div class="r" style="left:981.0px;top:151.6px;width:89.0px;height:23.3px;background:#000000;box-shadow:0 0 0 1px #d8d8d8;"></div>
<div class="t " style="top:144.7px;height:38px;line-height:38px;font-size:27.60px;color:#f08223;right:209.5px;font-weight:bold;letter-spacing:-0.35px;">23.0</div>
<div class="r" style="left:1078.0px;top:131.2px;width:101.0px;height:49.8px;background:#f0f0f0;"></div>
<div class="t " style="top:134.7px;height:16px;line-height:16px;font-size:10.40px;color:#2a2a2a;left:1084.0px;">IgnDwell</div>
<div class="t " style="top:135.4px;height:14px;line-height:14px;font-size:9.60px;color:#8a8a8a;right:108.3px;">[ms]</div>
<div class="r" style="left:1084.0px;top:151.6px;width:89.0px;height:23.3px;background:#000000;box-shadow:0 0 0 1px #d8d8d8;"></div>
<div class="t " style="top:144.7px;height:38px;line-height:38px;font-size:27.60px;color:#f08223;right:106.5px;font-weight:bold;letter-spacing:-0.35px;">3.262</div>
<div class="r" style="left:1078.0px;top:182.8px;width:101.0px;height:49.4px;background:#f0f0f0;"></div>
<div class="t " style="top:186.3px;height:16px;line-height:16px;font-size:10.40px;color:#c4c4c4;left:1084.0px;">Ign Gen1Corr</div>
<div class="t " style="top:187.0px;height:14px;line-height:14px;font-size:9.60px;color:#d2d2d2;right:108.3px;">[°]</div>
<div class="r" style="left:1084.0px;top:203.2px;width:89.0px;height:22.9px;background:#c0c0c0;box-shadow:0 0 0 1px #dcdcdc;"></div>
<div class="t " style="top:196.1px;height:38px;line-height:38px;font-size:27.60px;color:#f3d9bd;right:106.5px;font-weight:bold;letter-spacing:-0.35px;">0.0</div>
<div class="r" style="left:1078.0px;top:233.8px;width:101.0px;height:49.0px;background:#f0f0f0;"></div>
<div class="t " style="top:237.3px;height:16px;line-height:16px;font-size:10.40px;color:#2a2a2a;left:1084.0px;">Idle IgnCorr</div>
<div class="t " style="top:238.0px;height:14px;line-height:14px;font-size:9.60px;color:#8a8a8a;right:108.3px;">[°]</div>
<div class="r" style="left:1084.0px;top:254.2px;width:89.0px;height:22.5px;background:#000000;box-shadow:0 0 0 1px #d8d8d8;"></div>
<div class="t " style="top:246.9px;height:38px;line-height:38px;font-size:27.60px;color:#f08223;right:106.5px;font-weight:bold;letter-spacing:-0.35px;">0.0</div>
<div class="r" style="left:1078.0px;top:284.4px;width:101.0px;height:50.0px;background:#f0f0f0;"></div>
<div class="t " style="top:287.9px;height:16px;line-height:16px;font-size:10.40px;color:#c4c4c4;left:1084.0px;">FlexFuelComp</div>
<div class="t " style="top:288.6px;height:14px;line-height:14px;font-size:9.60px;color:#d2d2d2;right:108.3px;">[%]</div>
<div class="r" style="left:1084.0px;top:304.8px;width:89.0px;height:23.5px;background:#c0c0c0;box-shadow:0 0 0 1px #dcdcdc;"></div>
<div class="t " style="top:298.0px;height:38px;line-height:38px;font-size:27.60px;color:#f3d9bd;right:106.5px;font-weight:bold;letter-spacing:-0.35px;">0.0</div>
<div class="r" style="left:1078.0px;top:336.0px;width:101.0px;height:50.0px;background:#f0f0f0;"></div>
<div class="t " style="top:339.5px;height:16px;line-height:16px;font-size:10.40px;color:#2a2a2a;left:1084.0px;letter-spacing:-0.20px;">Ign - FCompCorr</div>
<div class="t " style="top:340.2px;height:14px;line-height:14px;font-size:9.60px;color:#8a8a8a;right:108.3px;">[°]</div>
<div class="r" style="left:1084.0px;top:356.4px;width:89.0px;height:23.5px;background:#000000;box-shadow:0 0 0 1px #d8d8d8;"></div>
<div class="t " style="top:349.6px;height:38px;line-height:38px;font-size:27.60px;color:#f08223;right:106.5px;font-weight:bold;letter-spacing:-0.35px;">0.0</div>
<div class="r" style="left:1078.0px;top:387.0px;width:106.0px;height:137.0px;background:#ffffff;"></div>
<div class="r" style="left:208.0px;top:129.8px;width:972.0px;height:1.0px;background:#747474;"></div>
<div class="r" style="left:208.0px;top:130.8px;width:972.0px;height:1.0px;background:#fbfbfb;"></div>
<div class="r" style="left:208.0px;top:181.0px;width:972.0px;height:1.0px;background:#747474;"></div>
<div class="r" style="left:208.0px;top:182.0px;width:972.0px;height:1.0px;background:#fbfbfb;"></div>
<div class="r" style="left:1077.5px;top:232.5px;width:102.5px;height:1.0px;background:#747474;"></div>
<div class="r" style="left:1077.5px;top:233.5px;width:102.5px;height:1.0px;background:#fbfbfb;"></div>
<div class="r" style="left:1077.5px;top:283.2px;width:102.5px;height:1.0px;background:#747474;"></div>
<div class="r" style="left:1077.5px;top:284.2px;width:102.5px;height:1.0px;background:#fbfbfb;"></div>
<div class="r" style="left:1077.5px;top:334.7px;width:102.5px;height:1.0px;background:#747474;"></div>
<div class="r" style="left:1077.5px;top:335.7px;width:102.5px;height:1.0px;background:#fbfbfb;"></div>
<div class="r" style="left:1077.5px;top:385.7px;width:102.5px;height:1.0px;background:#747474;"></div>
<div class="r" style="left:1077.5px;top:386.7px;width:102.5px;height:1.0px;background:#fbfbfb;"></div>
<div class="r" style="left:334.5px;top:83.0px;width:1.0px;height:98.5px;background:#747474;"></div>
<div class="r" style="left:335.5px;top:83.0px;width:1.0px;height:98.5px;background:#fbfbfb;"></div>
<div class="r" style="left:449.5px;top:83.0px;width:1.0px;height:98.5px;background:#747474;"></div>
<div class="r" style="left:450.5px;top:83.0px;width:1.0px;height:98.5px;background:#fbfbfb;"></div>
<div class="r" style="left:564.5px;top:83.0px;width:1.0px;height:98.5px;background:#747474;"></div>
<div class="r" style="left:565.5px;top:83.0px;width:1.0px;height:98.5px;background:#fbfbfb;"></div>
<div class="r" style="left:680.5px;top:83.0px;width:1.0px;height:98.5px;background:#747474;"></div>
<div class="r" style="left:681.5px;top:83.0px;width:1.0px;height:98.5px;background:#fbfbfb;"></div>
<div class="r" style="left:769.5px;top:83.0px;width:1.0px;height:98.5px;background:#747474;"></div>
<div class="r" style="left:770.5px;top:83.0px;width:1.0px;height:98.5px;background:#fbfbfb;"></div>
<div class="r" style="left:871.5px;top:83.0px;width:1.0px;height:98.5px;background:#747474;"></div>
<div class="r" style="left:872.5px;top:83.0px;width:1.0px;height:98.5px;background:#fbfbfb;"></div>
<div class="r" style="left:973.5px;top:83.0px;width:1.0px;height:98.5px;background:#747474;"></div>
<div class="r" style="left:974.5px;top:83.0px;width:1.0px;height:98.5px;background:#fbfbfb;"></div>
<div class="r" style="left:1077.0px;top:83.0px;width:1.0px;height:439.5px;background:#747474;"></div>
<div class="r" style="left:1078.0px;top:83.0px;width:1.0px;height:439.5px;background:#fbfbfb;"></div>
<div class="r" style="left:1179.2px;top:83.0px;width:1.0px;height:303.2px;background:#9a9a9a;"></div>
<div class="r" style="left:1180.2px;top:83.0px;width:1.0px;height:303.2px;background:#fbfbfb;"></div>
<div class="r" style="left:1180.3px;top:83.0px;width:4.0px;height:304.0px;background:#fdfdfd;"></div>
<div class="r" style="left:207.2px;top:82.5px;width:1.0px;height:440.0px;background:#9c9c9c;"></div>
<div class="r" style="left:208.2px;top:82.5px;width:1.0px;height:440.0px;background:#fafafa;"></div>
<div class="r" style="left:207.2px;top:522.0px;width:871.0px;height:1.0px;background:#c4c4c4;"></div>
<div class="r" style="left:207.2px;top:523.0px;width:977.0px;height:2.0px;background:#fafafa;"></div>
<div class="r" style="left:209.0px;top:183.0px;width:868.0px;height:339.0px;background:#f0f0f0;"></div>
<div class="r" style="left:209.0px;top:184.0px;width:866.0px;height:21.5px;background:#f2f2f2;border-bottom:1px solid #dedede;"></div>
<svg class="r" style="left:213.0px;top:187.0px;" width="4" height="17" viewBox="0 0 4 17"><rect x="1" y="1" width="1" height="1" fill="#b0b0b0"/><rect x="1" y="3" width="1" height="1" fill="#b0b0b0"/><rect x="1" y="5" width="1" height="1" fill="#b0b0b0"/><rect x="1" y="7" width="1" height="1" fill="#b0b0b0"/><rect x="1" y="9" width="1" height="1" fill="#b0b0b0"/><rect x="1" y="11" width="1" height="1" fill="#b0b0b0"/><rect x="1" y="13" width="1" height="1" fill="#b0b0b0"/><rect x="1" y="15" width="1" height="1" fill="#b0b0b0"/></svg>
<div class="t " style="top:188.0px;height:16px;line-height:16px;font-size:10.60px;color:#222;left:221.5px;letter-spacing:0.30px;">Base Ignition Angle</div>
<div class="r" style="left:324.0px;top:188.0px;width:1.0px;height:15.0px;background:#c8c8c8;"></div>
<div class="r" style="left:338.0px;top:188.0px;width:1.0px;height:15.0px;background:#c8c8c8;"></div>
<div class="t " style="top:188.0px;height:14px;line-height:14px;font-size:9.60px;color:#222;left:329.0px;">*</div>
<div class="r" style="left:1053.2px;top:186.2px;width:19.7px;height:19.6px;background:#fbfbfb;border:1px solid #7c7c7c;border-radius:1.5px;"></div>
<svg class="r" style="left:1053.2px;top:186.2px;" width="20" height="20" viewBox="0 0 20 20"><path d="M5 4.500l10.500 10.500" stroke="#cfcfcf" stroke-width="2.200" stroke-linecap="round"/><path d="M4.500 3l3.500 3.500" stroke="#c4c4c4" stroke-width="3" stroke-linecap="butt"/><path d="M10 9l6-5.500" stroke="#b4bcc4" stroke-width="1.800" stroke-linecap="round"/><path d="M4 15.200l6-5.800" stroke="#3a66b0" stroke-width="3.200" stroke-linecap="round"/></svg>
<div class="r" style="left:321.0px;top:206.0px;width:1.0px;height:27.0px;background:#d0d0d0;"></div>
<div class="t " style="top:207.8px;height:16px;line-height:16px;font-size:10.40px;color:#2f8f2f;left:326.5px;font-weight:bold;letter-spacing:0.09px;">Ignition - Load</div>
<div class="t " style="top:208.3px;height:15px;line-height:15px;font-size:10.20px;color:#333;left:405.5px;letter-spacing:-0.01px;">psi</div>
<div class="r" style="left:209.0px;top:253.5px;width:71.0px;height:1.0px;background:#dcdcdc;"></div>
<div class="r" style="left:209.0px;top:297.0px;width:71.0px;height:1.0px;background:#dcdcdc;"></div>
<div class="r" style="left:209.0px;top:474.5px;width:71.0px;height:1.0px;background:#dcdcdc;"></div>
<div class="t " style="top:254.5px;height:16px;line-height:16px;font-size:10.40px;color:#8b1a1a;left:214.5px;font-weight:bold;letter-spacing:0.13px;">RPM</div>
<div class="t " style="top:270.5px;height:15px;line-height:15px;font-size:10.20px;color:#333;left:214.5px;letter-spacing:-0.06px;">RPM</div>
<div class="t " style="top:300.0px;height:15px;line-height:15px;font-size:10.20px;color:#222;left:144.0px;width:200px;text-align:center;font-weight:bold;letter-spacing:-0.40px;">Target</div>
<div class="r" style="left:212.0px;top:320.0px;width:65.5px;height:72.5px;background:#f7f7f7;border:1px solid #c9c9c9;"></div>
<svg class="r" style="left:212.0px;top:320.0px;" width="66" height="73" viewBox="0 0 66 73"><g stroke="#555" stroke-width="0.6" stroke-dasharray="2 1.5" fill="none"><path d="M24.500 2v69M40 2v69M2 29.500h62M2 45h62"/></g><path d="M35 35.500l29.500-33.500" stroke="#111" stroke-width="1.900"/><path d="M33.500 37l3.200-1.200-2-2z" fill="#111"/></svg>
<div class="t " style="top:479.3px;height:15px;line-height:15px;font-size:10.20px;color:#222;left:214.5px;font-weight:bold;letter-spacing:-0.49px;">Output Value</div>
<div class="t " style="top:498.0px;height:15px;line-height:15px;font-size:9.80px;color:#2a2a2a;left:231.5px;font-weight:bold;letter-spacing:-0.04px;">18.8 °</div>
<div class="r" style="left:280.4px;top:235.4px;width:792.5px;height:286.3px;background:#ffffff;border-left:1px solid #c4c4c4;border-top:1px solid #c4c4c4;"></div>
<div class="r" style="left:281px;top:237px;width:790px;height:260px;overflow:hidden;font-size:10.5px;"><div class="c" style="left:0px;top:0px;width:40px;height:16px;background:#e3e3e3;color:#222;"></div><div class="c" style="left:40px;top:0px;width:38px;height:16px;background:#90c490;color:#111;font-weight:bold;font-size:9.5px;padding-right:2.8px;line-height:15.6px;">-14.5</div><div class="c" style="left:78px;top:0px;width:39px;height:16px;background:#ffffff;color:#111;font-weight:bold;font-size:9.5px;padding-right:2.8px;line-height:15.6px;">-11.6</div><div class="c" style="left:117px;top:0px;width:38px;height:16px;background:#ffffff;color:#111;font-weight:bold;font-size:9.5px;padding-right:2.8px;line-height:15.6px;">-10.2</div><div class="c" style="left:155px;top:0px;width:39px;height:16px;background:#ffffff;color:#111;font-weight:bold;font-size:9.5px;padding-right:2.8px;line-height:15.6px;">-8.7</div><div class="c" style="left:194px;top:0px;width:38px;height:16px;background:#ffffff;color:#111;font-weight:bold;font-size:9.5px;padding-right:2.8px;line-height:15.6px;">-7.3</div><div class="c" style="left:232px;top:0px;width:38px;height:16px;background:#ffffff;color:#111;font-weight:bold;font-size:9.5px;padding-right:2.8px;line-height:15.6px;">-5.8</div><div class="c" style="left:270px;top:0px;width:39px;height:16px;background:#ffffff;color:#111;font-weight:bold;font-size:9.5px;padding-right:2.8px;line-height:15.6px;">-4.3</div><div class="c" style="left:309px;top:0px;width:38px;height:16px;background:#ffffff;color:#111;font-weight:bold;font-size:9.5px;padding-right:2.8px;line-height:15.6px;">-2.9</div><div class="c" style="left:347px;top:0px;width:39px;height:16px;background:#ffffff;color:#111;font-weight:bold;font-size:9.5px;padding-right:2.8px;line-height:15.6px;">-1.5</div><div class="c" style="left:386px;top:0px;width:38px;height:16px;background:#ffffff;color:#111;font-weight:bold;font-size:9.5px;padding-right:2.8px;line-height:15.6px;">0.0</div><div class="c" style="left:424px;top:0px;width:39px;height:16px;background:#ffffff;color:#111;font-weight:bold;font-size:9.5px;padding-right:2.8px;line-height:15.6px;">2.9</div><div class="c" style="left:463px;top:0px;width:38px;height:16px;background:#ffffff;color:#111;font-weight:bold;font-size:9.5px;padding-right:2.8px;line-height:15.6px;">5.8</div><div class="c" style="left:501px;top:0px;width:39px;height:16px;background:#ffffff;color:#111;font-weight:bold;font-size:9.5px;padding-right:2.8px;line-height:15.6px;">8.7</div><div class="c" style="left:540px;top:0px;width:38px;height:16px;background:#ffffff;color:#111;font-weight:bold;font-size:9.5px;padding-right:2.8px;line-height:15.6px;">11.6</div><div class="c" style="left:578px;top:0px;width:38px;height:16px;background:#ffffff;color:#111;font-weight:bold;font-size:9.5px;padding-right:2.8px;line-height:15.6px;">14.5</div><div class="c" style="left:616px;top:0px;width:39px;height:16px;background:#ffffff;color:#111;font-weight:bold;font-size:9.5px;padding-right:2.8px;line-height:15.6px;">17.4</div><div class="c" style="left:655px;top:0px;width:38px;height:16px;background:#ffffff;color:#111;font-weight:bold;font-size:9.5px;padding-right:2.8px;line-height:15.6px;">20.3</div><div class="c" style="left:693px;top:0px;width:39px;height:16px;background:#ffffff;color:#111;font-weight:bold;font-size:9.5px;padding-right:2.8px;line-height:15.6px;">23.2</div><div class="c" style="left:732px;top:0px;width:38px;height:16px;background:#ffffff;color:#111;font-weight:bold;font-size:9.5px;padding-right:2.8px;line-height:15.6px;">26.1</div><div class="c" style="left:770px;top:0px;width:20px;height:16px;background:#ffffff;color:#111;font-weight:bold;font-size:9.5px;padding-right:2.8px;line-height:15.6px;padding-right:3px;">29</div><div class="c" style="left:0px;top:16px;width:40px;height:13px;background:#ffffff;color:#2c2c2c;font-weight:bold;font-size:10px;padding-right:2px;line-height:16.0px;box-shadow:inset 0 -1px 0 #efefef;">9000</div><div class="c" style="left:40px;top:16px;width:38px;height:13px;background:rgb(10,220,22);color:rgba(10,30,5,0.8);font-size:9.65px;padding-right:1.8px;box-shadow:inset -1px -1px 0 rgba(255,255,255,0.32);line-height:12.5px;">37.9</div><div class="c" style="left:78px;top:16px;width:39px;height:13px;background:rgb(18,225,56);color:rgba(10,30,5,0.8);font-size:9.65px;padding-right:1.8px;box-shadow:inset -1px -1px 0 rgba(255,255,255,0.32);line-height:12.5px;">41.2</div><div class="c" style="left:117px;top:16px;width:38px;height:13px;background:rgb(24,228,86);color:rgba(10,30,5,0.8);font-size:9.65px;padding-right:1.8px;box-shadow:inset -1px -1px 0 rgba(255,255,255,0.32);line-height:12.5px;">42.8</div><div class="c" style="left:155px;top:16px;width:39px;height:13px;background:rgb(18,225,56);color:rgba(10,30,5,0.8);font-size:9.65px;padding-right:1.8px;box-shadow:inset -1px -1px 0 rgba(255,255,255,0.32);line-height:12.5px;">41.2</div><div class="c" style="left:194px;top:16px;width:38px;height:13px;background:rgb(14,222,38);color:rgba(10,30,5,0.8);font-size:9.65px;padding-right:1.8px;box-shadow:inset -1px -1px 0 rgba(255,255,255,0.32);line-height:12.5px;">39.5</div><div class="c" style="left:232px;top:16px;width:38px;height:13px;background:rgb(10,220,22);color:rgba(10,30,5,0.8);font-size:9.65px;padding-right:1.8px;box-shadow:inset -1px -1px 0 rgba(255,255,255,0.32);line-height:12.5px;">37.8</div><div class="c" style="left:270px;top:16px;width:39px;height:13px;background:rgb(14,221,18);color:rgba(10,30,5,0.8);font-size:9.65px;padding-right:1.8px;box-shadow:inset -1px -1px 0 rgba(255,255,255,0.32);line-height:12.5px;">36.1</div><div class="c" style="left:309px;top:16px;width:38px;height:13px;background:rgb(17,223,15);color:rgba(10,30,5,0.8);font-size:9.65px;padding-right:1.8px;box-shadow:inset -1px -1px 0 rgba(255,255,255,0.32);line-height:12.5px;">34.5</div><div class="c" style="left:347px;top:16px;width:39px;height:13px;background:rgb(30,224,14);color:rgba(10,30,5,0.8);font-size:9.65px;padding-right:1.8px;box-shadow:inset -1px -1px 0 rgba(255,255,255,0.32);line-height:12.5px;">32.7</div><div class="c" style="left:386px;top:16px;width:38px;height:13px;background:rgb(47,226,14);color:rgba(10,30,5,0.8);font-size:9.65px;padding-right:1.8px;box-shadow:inset -1px -1px 0 rgba(255,255,255,0.32);line-height:12.5px;">30.9</div><div class="c" style="left:424px;top:16px;width:39px;height:13px;background:rgb(101,230,14);color:rgba(10,30,5,0.8);font-size:9.65px;padding-right:1.8px;box-shadow:inset -1px -1px 0 rgba(255,255,255,0.32);line-height:12.5px;">27.4</div><div class="c" style="left:463px;top:16px;width:38px;height:13px;background:rgb(141,232,14);color:rgba(10,30,5,0.8);font-size:9.65px;padding-right:1.8px;box-shadow:inset -1px -1px 0 rgba(255,255,255,0.32);line-height:12.5px;">23.8</div><div class="c" style="left:501px;top:16px;width:39px;height:13px;background:rgb(187,233,14);color:rgba(10,30,5,0.8);font-size:9.65px;padding-right:1.8px;box-shadow:inset -1px -1px 0 rgba(255,255,255,0.32);line-height:12.5px;">20.2</div><div class="c" style="left:540px;top:16px;width:38px;height:13px;background:rgb(227,233,14);color:rgba(10,30,5,0.8);font-size:9.65px;padding-right:1.8px;box-shadow:inset -1px -1px 0 rgba(255,255,255,0.32);line-height:12.5px;">16.6</div><div class="c" style="left:578px;top:16px;width:38px;height:13px;background:rgb(240,202,14);color:rgba(10,30,5,0.8);font-size:9.65px;padding-right:1.8px;box-shadow:inset -1px -1px 0 rgba(255,255,255,0.32);line-height:12.5px;">13.3</div><div class="c" style="left:616px;top:16px;width:39px;height:13px;background:rgb(241,173,14);color:rgba(10,30,5,0.8);font-size:9.65px;padding-right:1.8px;box-shadow:inset -1px -1px 0 rgba(255,255,255,0.32);line-height:12.5px;">11.0</div><div class="c" style="left:655px;top:16px;width:38px;height:13px;background:rgb(242,134,14);color:rgba(10,30,5,0.8);font-size:9.65px;padding-right:1.8px;box-shadow:inset -1px -1px 0 rgba(255,255,255,0.32);line-height:12.5px;">7.7</div><div class="c" style="left:693px;top:16px;width:39px;height:13px;background:rgb(241,114,14);color:rgba(10,30,5,0.8);font-size:9.65px;padding-right:1.8px;box-shadow:inset -1px -1px 0 rgba(255,255,255,0.32);line-height:12.5px;">5.9</div><div class="c" style="left:732px;top:16px;width:38px;height:13px;background:rgb(241,95,14);color:rgba(10,30,5,0.8);font-size:9.65px;padding-right:1.8px;box-shadow:inset -1px -1px 0 rgba(255,255,255,0.32);line-height:12.5px;">4.1</div><div class="c" style="left:770px;top:16px;width:20px;height:13px;background:rgb(240,76,14);color:rgba(10,30,5,0.8);font-size:9.65px;padding-right:1.8px;box-shadow:inset -1px -1px 0 rgba(255,255,255,0.32);line-height:12.5px;"></div><div class="c" style="left:0px;top:29px;width:40px;height:14px;background:#ffffff;color:#2c2c2c;font-weight:bold;font-size:10px;padding-right:2px;line-height:17.0px;box-shadow:inset 0 -1px 0 #efefef;">8000</div><div class="c" style="left:40px;top:29px;width:38px;height:14px;background:rgb(10,220,22);color:rgba(10,30,5,0.8);font-size:9.65px;padding-right:1.8px;box-shadow:inset -1px -1px 0 rgba(255,255,255,0.32);line-height:13.5px;">37.9</div><div class="c" style="left:78px;top:29px;width:39px;height:14px;background:rgb(18,225,56);color:rgba(10,30,5,0.8);font-size:9.65px;padding-right:1.8px;box-shadow:inset -1px -1px 0 rgba(255,255,255,0.32);line-height:13.5px;">41.2</div><div class="c" style="left:117px;top:29px;width:38px;height:14px;background:rgb(24,228,86);color:rgba(10,30,5,0.8);font-size:9.65px;padding-right:1.8px;box-shadow:inset -1px -1px 0 rgba(255,255,255,0.32);line-height:13.5px;">42.8</div><div class="c" style="left:155px;top:29px;width:39px;height:14px;background:rgb(18,225,55);color:rgba(10,30,5,0.8);font-size:9.65px;padding-right:1.8px;box-shadow:inset -1px -1px 0 rgba(255,255,255,0.32);line-height:13.5px;">41.1</div><div class="c" style="left:194px;top:29px;width:38px;height:14px;background:rgb(13,222,37);color:rgba(10,30,5,0.8);font-size:9.65px;padding-right:1.8px;box-shadow:inset -1px -1px 0 rgba(255,255,255,0.32);line-height:13.5px;">39.4</div><div class="c" style="left:232px;top:29px;width:38px;height:14px;background:rgb(11,220,21);color:rgba(10,30,5,0.8);font-size:9.65px;padding-right:1.8px;box-shadow:inset -1px -1px 0 rgba(255,255,255,0.32);line-height:13.5px;">37.6</div><div class="c" style="left:270px;top:29px;width:39px;height:14px;background:rgb(14,222,18);color:rgba(10,30,5,0.8);font-size:9.65px;padding-right:1.8px;box-shadow:inset -1px -1px 0 rgba(255,255,255,0.32);line-height:13.5px;">35.9</div><div class="c" style="left:309px;top:29px;width:38px;height:14px;background:rgb(18,223,14);color:rgba(10,30,5,0.8);font-size:9.65px;padding-right:1.8px;box-shadow:inset -1px -1px 0 rgba(255,255,255,0.32);line-height:13.5px;">34.1</div><div class="c" style="left:347px;top:29px;width:39px;height:14px;background:rgb(34,225,14);color:rgba(10,30,5,0.8);font-size:9.65px;padding-right:1.8px;box-shadow:inset -1px -1px 0 rgba(255,255,255,0.32);line-height:13.5px;">32.3</div><div class="c" style="left:386px;top:29px;width:38px;height:14px;background:rgb(51,227,14);color:rgba(10,30,5,0.8);font-size:9.65px;padding-right:1.8px;box-shadow:inset -1px -1px 0 rgba(255,255,255,0.32);line-height:13.5px;">30.4</div><div class="c" style="left:424px;top:29px;width:39px;height:14px;background:rgb(108,230,14);color:rgba(10,30,5,0.8);font-size:9.65px;padding-right:1.8px;box-shadow:inset -1px -1px 0 rgba(255,255,255,0.32);line-height:13.5px;">26.8</div><div class="c" style="left:463px;top:29px;width:38px;height:14px;background:rgb(149,232,14);color:rgba(10,30,5,0.8);font-size:9.65px;padding-right:1.8px;box-shadow:inset -1px -1px 0 rgba(255,255,255,0.32);line-height:13.5px;">23.1</div><div class="c" style="left:501px;top:29px;width:39px;height:14px;background:rgb(198,233,14);color:rgba(10,30,5,0.8);font-size:9.65px;padding-right:1.8px;box-shadow:inset -1px -1px 0 rgba(255,255,255,0.32);line-height:13.5px;">19.4</div><div class="c" style="left:540px;top:29px;width:38px;height:14px;background:rgb(233,230,14);color:rgba(10,30,5,0.8);font-size:9.65px;padding-right:1.8px;box-shadow:inset -1px -1px 0 rgba(255,255,255,0.32);line-height:13.5px;">15.8</div><div class="c" style="left:578px;top:29px;width:38px;height:14px;background:rgb(241,190,14);color:rgba(10,30,5,0.8);font-size:9.65px;padding-right:1.8px;box-shadow:inset -1px -1px 0 rgba(255,255,255,0.32);line-height:13.5px;">12.3</div><div class="c" style="left:616px;top:29px;width:39px;height:14px;background:rgb(242,159,14);color:rgba(10,30,5,0.8);font-size:9.65px;padding-right:1.8px;box-shadow:inset -1px -1px 0 rgba(255,255,255,0.32);line-height:13.5px;">9.9</div><div class="c" style="left:655px;top:29px;width:38px;height:14px;background:rgb(241,122,14);color:rgba(10,30,5,0.8);font-size:9.65px;padding-right:1.8px;box-shadow:inset -1px -1px 0 rgba(255,255,255,0.32);line-height:13.5px;">6.6</div><div class="c" style="left:693px;top:29px;width:39px;height:14px;background:rgb(241,102,14);color:rgba(10,30,5,0.8);font-size:9.65px;padding-right:1.8px;box-shadow:inset -1px -1px 0 rgba(255,255,255,0.32);line-height:13.5px;">4.8</div><div class="c" style="left:732px;top:29px;width:38px;height:14px;background:rgb(241,83,14);color:rgba(10,30,5,0.8);font-size:9.65px;padding-right:1.8px;box-shadow:inset -1px -1px 0 rgba(255,255,255,0.32);line-height:13.5px;">3.0</div><div class="c" style="left:770px;top:29px;width:20px;height:14px;background:rgb(240,64,14);color:rgba(10,30,5,0.8);font-size:9.65px;padding-right:1.8px;box-shadow:inset -1px -1px 0 rgba(255,255,255,0.32);line-height:13.5px;"></div><div class="c" style="left:0px;top:43px;width:40px;height:13px;background:#ffffff;color:#2c2c2c;font-weight:bold;font-size:10px;padding-right:2px;line-height:16.0px;box-shadow:inset 0 -1px 0 #efefef;">7500</div><div class="c" style="left:40px;top:43px;width:38px;height:13px;background:rgb(10,220,22);color:rgba(10,30,5,0.8);font-size:9.65px;padding-right:1.8px;box-shadow:inset -1px -1px 0 rgba(255,255,255,0.32);line-height:12.5px;">37.9</div><div class="c" style="left:78px;top:43px;width:39px;height:13px;background:rgb(18,225,56);color:rgba(10,30,5,0.8);font-size:9.65px;padding-right:1.8px;box-shadow:inset -1px -1px 0 rgba(255,255,255,0.32);line-height:12.5px;">41.2</div><div class="c" style="left:117px;top:43px;width:38px;height:13px;background:rgb(24,228,86);color:rgba(10,30,5,0.8);font-size:9.65px;padding-right:1.8px;box-shadow:inset -1px -1px 0 rgba(255,255,255,0.32);line-height:12.5px;">42.8</div><div class="c" style="left:155px;top:43px;width:39px;height:13px;background:rgb(18,225,55);color:rgba(10,30,5,0.8);font-size:9.65px;padding-right:1.8px;box-shadow:inset -1px -1px 0 rgba(255,255,255,0.32);line-height:12.5px;">41.1</div><div class="c" style="left:194px;top:43px;width:38px;height:13px;background:rgb(13,222,37);color:rgba(10,30,5,0.8);font-size:9.65px;padding-right:1.8px;box-shadow:inset -1px -1px 0 rgba(255,255,255,0.32);line-height:12.5px;">39.4</div><div class="c" style="left:232px;top:43px;width:38px;height:13px;background:rgb(11,220,21);color:rgba(10,30,5,0.8);font-size:9.65px;padding-right:1.8px;box-shadow:inset -1px -1px 0 rgba(255,255,255,0.32);line-height:12.5px;">37.5</div><div class="c" style="left:270px;top:43px;width:39px;height:13px;background:rgb(15,222,17);color:rgba(10,30,5,0.8);font-size:9.65px;padding-right:1.8px;box-shadow:inset -1px -1px 0 rgba(255,255,255,0.32);line-height:12.5px;">35.7</div><div class="c" style="left:309px;top:43px;width:38px;height:13px;background:rgb(18,223,14);color:rgba(10,30,5,0.8);font-size:9.65px;padding-right:1.8px;box-shadow:inset -1px -1px 0 rgba(255,255,255,0.32);line-height:12.5px;">34.0</div><div class="c" style="left:347px;top:43px;width:39px;height:13px;background:rgb(36,225,14);color:rgba(10,30,5,0.8);font-size:9.65px;padding-right:1.8px;box-shadow:inset -1px -1px 0 rgba(255,255,255,0.32);line-height:12.5px;">32.1</div><div class="c" style="left:386px;top:43px;width:38px;height:13px;background:rgb(53,227,14);color:rgba(10,30,5,0.8);font-size:9.65px;padding-right:1.8px;box-shadow:inset -1px -1px 0 rgba(255,255,255,0.32);line-height:12.5px;">30.2</div><div class="c" style="left:424px;top:43px;width:39px;height:13px;background:rgb(112,230,14);color:rgba(10,30,5,0.8);font-size:9.65px;padding-right:1.8px;box-shadow:inset -1px -1px 0 rgba(255,255,255,0.32);line-height:12.5px;">26.4</div><div class="c" style="left:463px;top:43px;width:38px;height:13px;background:rgb(154,232,14);color:rgba(10,30,5,0.8);font-size:9.65px;padding-right:1.8px;box-shadow:inset -1px -1px 0 rgba(255,255,255,0.32);line-height:12.5px;">22.7</div><div class="c" style="left:501px;top:43px;width:39px;height:13px;background:rgb(204,234,14);color:rgba(10,30,5,0.8);font-size:9.65px;padding-right:1.8px;box-shadow:inset -1px -1px 0 rgba(255,255,255,0.32);line-height:12.5px;">18.9</div><div class="c" style="left:540px;top:43px;width:38px;height:13px;background:rgb(234,224,14);color:rgba(10,30,5,0.8);font-size:9.65px;padding-right:1.8px;box-shadow:inset -1px -1px 0 rgba(255,255,255,0.32);line-height:12.5px;">15.3</div><div class="c" style="left:578px;top:43px;width:38px;height:13px;background:rgb(241,182,14);color:rgba(10,30,5,0.8);font-size:9.65px;padding-right:1.8px;box-shadow:inset -1px -1px 0 rgba(255,255,255,0.32);line-height:12.5px;">11.7</div><div class="c" style="left:616px;top:43px;width:39px;height:13px;background:rgb(242,153,14);color:rgba(10,30,5,0.8);font-size:9.65px;padding-right:1.8px;box-shadow:inset -1px -1px 0 rgba(255,255,255,0.32);line-height:12.5px;">9.4</div><div class="c" style="left:655px;top:43px;width:38px;height:13px;background:rgb(241,115,14);color:rgba(10,30,5,0.8);font-size:9.65px;padding-right:1.8px;box-shadow:inset -1px -1px 0 rgba(255,255,255,0.32);line-height:12.5px;">6.0</div><div class="c" style="left:693px;top:43px;width:39px;height:13px;background:rgb(241,96,14);color:rgba(10,30,5,0.8);font-size:9.65px;padding-right:1.8px;box-shadow:inset -1px -1px 0 rgba(255,255,255,0.32);line-height:12.5px;">4.2</div><div class="c" style="left:732px;top:43px;width:38px;height:13px;background:rgb(240,77,14);color:rgba(10,30,5,0.8);font-size:9.65px;padding-right:1.8px;box-shadow:inset -1px -1px 0 rgba(255,255,255,0.32);line-height:12.5px;">2.4</div><div class="c" style="left:770px;top:43px;width:20px;height:13px;background:rgb(240,58,14);color:rgba(10,30,5,0.8);font-size:9.65px;padding-right:1.8px;box-shadow:inset -1px -1px 0 rgba(255,255,255,0.32);line-height:12.5px;"></div><div class="c" style="left:0px;top:56px;width:40px;height:14px;background:#ffffff;color:#2c2c2c;font-weight:bold;font-size:10px;padding-right:2px;line-height:17.0px;box-shadow:inset 0 -1px 0 #efefef;">7000</div><div class="c" style="left:40px;top:56px;width:38px;height:14px;background:rgb(10,220,22);color:rgba(10,30,5,0.8);font-size:9.65px;padding-right:1.8px;box-shadow:inset -1px -1px 0 rgba(255,255,255,0.32);line-height:13.5px;">37.9</div><div class="c" style="left:78px;top:56px;width:39px;height:14px;background:rgb(18,225,56);color:rgba(10,30,5,0.8);font-size:9.65px;padding-right:1.8px;box-shadow:inset -1px -1px 0 rgba(255,255,255,0.32);line-height:13.5px;">41.2</div><div class="c" style="left:117px;top:56px;width:38px;height:14px;background:rgb(24,228,86);color:rgba(10,30,5,0.8);font-size:9.65px;padding-right:1.8px;box-shadow:inset -1px -1px 0 rgba(255,255,255,0.32);line-height:13.5px;">42.8</div><div class="c" style="left:155px;top:56px;width:39px;height:14px;background:rgb(18,225,55);color:rgba(10,30,5,0.8);font-size:9.65px;padding-right:1.8px;box-shadow:inset -1px -1px 0 rgba(255,255,255,0.32);line-height:13.5px;">41.1</div><div class="c" style="left:194px;top:56px;width:38px;height:14px;background:rgb(13,222,36);color:rgba(10,30,5,0.8);font-size:9.65px;padding-right:1.8px;box-shadow:inset -1px -1px 0 rgba(255,255,255,0.32);line-height:13.5px;">39.3</div><div class="c" style="left:232px;top:56px;width:38px;height:14px;background:rgb(11,220,21);color:rgba(10,30,5,0.8);font-size:9.65px;padding-right:1.8px;box-shadow:inset -1px -1px 0 rgba(255,255,255,0.32);line-height:13.5px;">37.4</div><div class="c" style="left:270px;top:56px;width:39px;height:14px;background:rgb(15,222,17);color:rgba(10,30,5,0.8);font-size:9.65px;padding-right:1.8px;box-shadow:inset -1px -1px 0 rgba(255,255,255,0.32);line-height:13.5px;">35.6</div><div class="c" style="left:309px;top:56px;width:38px;height:14px;background:rgb(20,223,14);color:rgba(10,30,5,0.8);font-size:9.65px;padding-right:1.8px;box-shadow:inset -1px -1px 0 rgba(255,255,255,0.32);line-height:13.5px;">33.8</div><div class="c" style="left:347px;top:56px;width:39px;height:14px;background:rgb(37,225,14);color:rgba(10,30,5,0.8);font-size:9.65px;padding-right:1.8px;box-shadow:inset -1px -1px 0 rgba(255,255,255,0.32);line-height:13.5px;">31.9</div><div class="c" style="left:386px;top:56px;width:38px;height:14px;background:rgb(55,227,14);color:rgba(10,30,5,0.8);font-size:9.65px;padding-right:1.8px;box-shadow:inset -1px -1px 0 rgba(255,255,255,0.32);line-height:13.5px;">30.0</div><div class="c" style="left:424px;top:56px;width:39px;height:14px;background:rgb(116,231,14);color:rgba(10,30,5,0.8);font-size:9.65px;padding-right:1.8px;box-shadow:inset -1px -1px 0 rgba(255,255,255,0.32);line-height:13.5px;">26.1</div><div class="c" style="left:463px;top:56px;width:38px;height:14px;background:rgb(161,232,14);color:rgba(10,30,5,0.8);font-size:9.65px;padding-right:1.8px;box-shadow:inset -1px -1px 0 rgba(255,255,255,0.32);line-height:13.5px;">22.2</div><div class="c" style="left:501px;top:56px;width:39px;height:14px;background:rgb(210,234,14);color:rgba(10,30,5,0.8);font-size:9.65px;padding-right:1.8px;box-shadow:inset -1px -1px 0 rgba(255,255,255,0.32);line-height:13.5px;">18.4</div><div class="c" style="left:540px;top:56px;width:38px;height:14px;background:rgb(236,220,14);color:rgba(10,30,5,0.8);font-size:9.65px;padding-right:1.8px;box-shadow:inset -1px -1px 0 rgba(255,255,255,0.32);line-height:13.5px;">14.9</div><div class="c" style="left:578px;top:56px;width:38px;height:14px;background:rgb(241,175,14);color:rgba(10,30,5,0.8);font-size:9.65px;padding-right:1.8px;box-shadow:inset -1px -1px 0 rgba(255,255,255,0.32);line-height:13.5px;">11.2</div><div class="c" style="left:616px;top:56px;width:39px;height:14px;background:rgb(242,147,14);color:rgba(10,30,5,0.8);font-size:9.65px;padding-right:1.8px;box-shadow:inset -1px -1px 0 rgba(255,255,255,0.32);line-height:13.5px;">8.8</div><div class="c" style="left:655px;top:56px;width:38px;height:14px;background:rgb(241,110,14);color:rgba(10,30,5,0.8);font-size:9.65px;padding-right:1.8px;box-shadow:inset -1px -1px 0 rgba(255,255,255,0.32);line-height:13.5px;">5.5</div><div class="c" style="left:693px;top:56px;width:39px;height:14px;background:rgb(241,90,14);color:rgba(10,30,5,0.8);font-size:9.65px;padding-right:1.8px;box-shadow:inset -1px -1px 0 rgba(255,255,255,0.32);line-height:13.5px;">3.7</div><div class="c" style="left:732px;top:56px;width:38px;height:14px;background:rgb(240,72,14);color:rgba(10,30,5,0.8);font-size:9.65px;padding-right:1.8px;box-shadow:inset -1px -1px 0 rgba(255,255,255,0.32);line-height:13.5px;">1.9</div><div class="c" style="left:770px;top:56px;width:20px;height:14px;background:rgb(240,53,14);color:rgba(10,30,5,0.8);font-size:9.65px;padding-right:1.8px;box-shadow:inset -1px -1px 0 rgba(255,255,255,0.32);line-height:13.5px;"></div><div class="c" style="left:0px;top:70px;width:40px;height:13px;background:#ffffff;color:#2c2c2c;font-weight:bold;font-size:10px;padding-right:2px;line-height:16.0px;box-shadow:inset 0 -1px 0 #efefef;">6500</div><div class="c" style="left:40px;top:70px;width:38px;height:13px;background:rgb(10,220,22);color:rgba(10,30,5,0.8);font-size:9.65px;padding-right:1.8px;box-shadow:inset -1px -1px 0 rgba(255,255,255,0.32);line-height:12.5px;">37.9</div><div class="c" style="left:78px;top:70px;width:39px;height:13px;background:rgb(18,225,56);color:rgba(10,30,5,0.8);font-size:9.65px;padding-right:1.8px;box-shadow:inset -1px -1px 0 rgba(255,255,255,0.32);line-height:12.5px;">41.2</div><div class="c" style="left:117px;top:70px;width:38px;height:13px;background:rgb(24,228,86);color:rgba(10,30,5,0.8);font-size:9.65px;padding-right:1.8px;box-shadow:inset -1px -1px 0 rgba(255,255,255,0.32);line-height:12.5px;">42.8</div><div class="c" style="left:155px;top:70px;width:39px;height:13px;background:rgb(18,225,55);color:rgba(10,30,5,0.8);font-size:9.65px;padding-right:1.8px;box-shadow:inset -1px -1px 0 rgba(255,255,255,0.32);line-height:12.5px;">41.1</div><div class="c" style="left:194px;top:70px;width:38px;height:13px;background:rgb(13,222,37);color:rgba(10,30,5,0.8);font-size:9.65px;padding-right:1.8px;box-shadow:inset -1px -1px 0 rgba(255,255,255,0.32);line-height:12.5px;">39.4</div><div class="c" style="left:232px;top:70px;width:38px;height:13px;background:rgb(11,220,21);color:rgba(10,30,5,0.8);font-size:9.65px;padding-right:1.8px;box-shadow:inset -1px -1px 0 rgba(255,255,255,0.32);line-height:12.5px;">37.7</div><div class="c" style="left:270px;top:70px;width:39px;height:13px;background:rgb(15,222,17);color:rgba(10,30,5,0.8);font-size:9.65px;padding-right:1.8px;box-shadow:inset -1px -1px 0 rgba(255,255,255,0.32);line-height:12.5px;">35.6</div><div class="c" style="left:309px;top:70px;width:38px;height:13px;background:rgb(21,223,14);color:rgba(10,30,5,0.8);font-size:9.65px;padding-right:1.8px;box-shadow:inset -1px -1px 0 rgba(255,255,255,0.32);line-height:12.5px;">33.7</div><div class="c" style="left:347px;top:70px;width:39px;height:13px;background:rgb(39,225,14);color:rgba(10,30,5,0.8);font-size:9.65px;padding-right:1.8px;box-shadow:inset -1px -1px 0 rgba(255,255,255,0.32);line-height:12.5px;">31.7</div><div class="c" style="left:386px;top:70px;width:38px;height:13px;background:rgb(59,227,14);color:rgba(10,30,5,0.8);font-size:9.65px;padding-right:1.8px;box-shadow:inset -1px -1px 0 rgba(255,255,255,0.32);line-height:12.5px;">29.8</div><div class="c" style="left:424px;top:70px;width:39px;height:13px;background:rgb(119,231,14);color:rgba(10,30,5,0.8);font-size:9.65px;padding-right:1.8px;box-shadow:inset -1px -1px 0 rgba(255,255,255,0.32);line-height:12.5px;">25.8</div><div class="c" style="left:463px;top:70px;width:38px;height:13px;background:rgb(165,232,14);color:rgba(10,30,5,0.8);font-size:9.65px;padding-right:1.8px;box-shadow:inset -1px -1px 0 rgba(255,255,255,0.32);line-height:12.5px;">21.9</div><div class="c" style="left:501px;top:70px;width:39px;height:13px;background:rgb(215,234,14);color:rgba(10,30,5,0.8);font-size:9.65px;padding-right:1.8px;box-shadow:inset -1px -1px 0 rgba(255,255,255,0.32);line-height:12.5px;">18.0</div><div class="c" style="left:540px;top:70px;width:38px;height:13px;background:rgb(236,218,14);color:rgba(10,30,5,0.8);font-size:9.65px;padding-right:1.8px;box-shadow:inset -1px -1px 0 rgba(255,255,255,0.32);line-height:12.5px;">14.7</div><div class="c" style="left:578px;top:70px;width:38px;height:13px;background:rgb(241,173,14);color:rgba(10,30,5,0.8);font-size:9.65px;padding-right:1.8px;box-shadow:inset -1px -1px 0 rgba(255,255,255,0.32);line-height:12.5px;">11.0</div><div class="c" style="left:616px;top:70px;width:39px;height:13px;background:rgb(242,140,14);color:rgba(10,30,5,0.8);font-size:9.65px;padding-right:1.8px;box-shadow:inset -1px -1px 0 rgba(255,255,255,0.32);line-height:12.5px;">8.2</div><div class="c" style="left:655px;top:70px;width:38px;height:13px;background:rgb(241,104,14);color:rgba(10,30,5,0.8);font-size:9.65px;padding-right:1.8px;box-shadow:inset -1px -1px 0 rgba(255,255,255,0.32);line-height:12.5px;">5.0</div><div class="c" style="left:693px;top:70px;width:39px;height:13px;background:rgb(241,85,14);color:rgba(10,30,5,0.8);font-size:9.65px;padding-right:1.8px;box-shadow:inset -1px -1px 0 rgba(255,255,255,0.32);line-height:12.5px;">3.2</div><div class="c" style="left:732px;top:70px;width:38px;height:13px;background:rgb(240,67,14);color:rgba(10,30,5,0.8);font-size:9.65px;padding-right:1.8px;box-shadow:inset -1px -1px 0 rgba(255,255,255,0.32);line-height:12.5px;">1.4</div><div class="c" style="left:770px;top:70px;width:20px;height:13px;background:rgb(240,49,14);color:rgba(10,30,5,0.8);font-size:9.65px;padding-right:1.8px;box-shadow:inset -1px -1px 0 rgba(255,255,255,0.32);line-height:12.5px;"></div><div class="c" style="left:0px;top:83px;width:40px;height:14px;background:#ffffff;color:#2c2c2c;font-weight:bold;font-size:10px;padding-right:2px;line-height:17.0px;box-shadow:inset 0 -1px 0 #efefef;">6000</div><div class="c" style="left:40px;top:83px;width:38px;height:14px;background:rgb(10,220,22);color:rgba(10,30,5,0.8);font-size:9.65px;padding-right:1.8px;box-shadow:inset -1px -1px 0 rgba(255,255,255,0.32);line-height:13.5px;">37.9</div><div class="c" style="left:78px;top:83px;width:39px;height:14px;background:rgb(18,225,56);color:rgba(10,30,5,0.8);font-size:9.65px;padding-right:1.8px;box-shadow:inset -1px -1px 0 rgba(255,255,255,0.32);line-height:13.5px;">41.2</div><div class="c" style="left:117px;top:83px;width:38px;height:14px;background:rgb(24,228,86);color:rgba(10,30,5,0.8);font-size:9.65px;padding-right:1.8px;box-shadow:inset -1px -1px 0 rgba(255,255,255,0.32);line-height:13.5px;">42.8</div><div class="c" style="left:155px;top:83px;width:39px;height:14px;background:rgb(18,225,55);color:rgba(10,30,5,0.8);font-size:9.65px;padding-right:1.8px;box-shadow:inset -1px -1px 0 rgba(255,255,255,0.32);line-height:13.5px;">41.1</div><div class="c" style="left:194px;top:83px;width:38px;height:14px;background:rgb(13,222,37);color:rgba(10,30,5,0.8);font-size:9.65px;padding-right:1.8px;box-shadow:inset -1px -1px 0 rgba(255,255,255,0.32);line-height:13.5px;">39.4</div><div class="c" style="left:232px;top:83px;width:38px;height:14px;background:rgb(11,220,21);color:rgba(10,30,5,0.8);font-size:9.65px;padding-right:1.8px;box-shadow:inset -1px -1px 0 rgba(255,255,255,0.32);line-height:13.5px;">37.7</div><div class="c" style="left:270px;top:83px;width:39px;height:14px;background:rgb(15,222,17);color:rgba(10,30,5,0.8);font-size:9.65px;padding-right:1.8px;box-shadow:inset -1px -1px 0 rgba(255,255,255,0.32);line-height:13.5px;">35.4</div><div class="c" style="left:309px;top:83px;width:38px;height:14px;background:rgb(24,224,14);color:rgba(10,30,5,0.8);font-size:9.65px;padding-right:1.8px;box-shadow:inset -1px -1px 0 rgba(255,255,255,0.32);line-height:13.5px;">33.4</div><div class="c" style="left:347px;top:83px;width:39px;height:14px;background:rgb(42,226,14);color:rgba(10,30,5,0.8);font-size:9.65px;padding-right:1.8px;box-shadow:inset -1px -1px 0 rgba(255,255,255,0.32);line-height:13.5px;">31.4</div><div class="c" style="left:386px;top:83px;width:38px;height:14px;background:rgb(66,228,14);color:rgba(10,30,5,0.8);font-size:9.65px;padding-right:1.8px;box-shadow:inset -1px -1px 0 rgba(255,255,255,0.32);line-height:13.5px;">29.4</div><div class="c" style="left:424px;top:83px;width:39px;height:14px;background:rgb(122,231,14);color:rgba(10,30,5,0.8);font-size:9.65px;padding-right:1.8px;box-shadow:inset -1px -1px 0 rgba(255,255,255,0.32);line-height:13.5px;">25.5</div><div class="c" style="left:463px;top:83px;width:38px;height:14px;background:rgb(169,232,14);color:rgba(10,30,5,0.8);font-size:9.65px;padding-right:1.8px;box-shadow:inset -1px -1px 0 rgba(255,255,255,0.32);line-height:13.5px;">21.6</div><div class="c" style="left:501px;top:83px;width:39px;height:14px;background:rgb(218,234,14);color:rgba(10,30,5,0.8);font-size:9.65px;padding-right:1.8px;box-shadow:inset -1px -1px 0 rgba(255,255,255,0.32);line-height:13.5px;">17.6</div><div class="c" style="left:540px;top:83px;width:38px;height:14px;background:rgb(236,218,14);color:rgba(10,30,5,0.8);font-size:9.65px;padding-right:1.8px;box-shadow:inset -1px -1px 0 rgba(255,255,255,0.32);line-height:13.5px;">14.7</div><div class="c" style="left:578px;top:83px;width:38px;height:14px;background:rgb(241,172,14);color:rgba(10,30,5,0.8);font-size:9.65px;padding-right:1.8px;box-shadow:inset -1px -1px 0 rgba(255,255,255,0.32);line-height:13.5px;">10.9</div><div class="c" style="left:616px;top:83px;width:39px;height:14px;background:rgb(242,134,14);color:rgba(10,30,5,0.8);font-size:9.65px;padding-right:1.8px;box-shadow:inset -1px -1px 0 rgba(255,255,255,0.32);line-height:13.5px;">7.7</div><div class="c" style="left:655px;top:83px;width:38px;height:14px;background:rgb(241,98,14);color:rgba(10,30,5,0.8);font-size:9.65px;padding-right:1.8px;box-shadow:inset -1px -1px 0 rgba(255,255,255,0.32);line-height:13.5px;">4.4</div><div class="c" style="left:693px;top:83px;width:39px;height:14px;background:rgb(241,79,14);color:rgba(10,30,5,0.8);font-size:9.65px;padding-right:1.8px;box-shadow:inset -1px -1px 0 rgba(255,255,255,0.32);line-height:13.5px;">2.6</div><div class="c" style="left:732px;top:83px;width:38px;height:14px;background:rgb(240,60,14);color:rgba(10,30,5,0.8);font-size:9.65px;padding-right:1.8px;box-shadow:inset -1px -1px 0 rgba(255,255,255,0.32);line-height:13.5px;">0.8</div><div class="c" style="left:770px;top:83px;width:20px;height:14px;background:rgb(240,45,14);color:rgba(10,30,5,0.8);font-size:9.65px;padding-right:1.8px;box-shadow:inset -1px -1px 0 rgba(255,255,255,0.32);line-height:13.5px;"></div><div class="c" style="left:0px;top:97px;width:40px;height:14px;background:#ffffff;color:#2c2c2c;font-weight:bold;font-size:10px;padding-right:2px;line-height:17.0px;box-shadow:inset 0 -1px 0 #efefef;">5500</div><div class="c" style="left:40px;top:97px;width:38px;height:14px;background:rgb(10,220,22);color:rgba(10,30,5,0.8);font-size:9.65px;padding-right:1.8px;box-shadow:inset -1px -1px 0 rgba(255,255,255,0.32);line-height:13.5px;">37.9</div><div class="c" style="left:78px;top:97px;width:39px;height:14px;background:rgb(18,225,56);color:rgba(10,30,5,0.8);font-size:9.65px;padding-right:1.8px;box-shadow:inset -1px -1px 0 rgba(255,255,255,0.32);line-height:13.5px;">41.2</div><div class="c" style="left:117px;top:97px;width:38px;height:14px;background:rgb(24,228,86);color:rgba(10,30,5,0.8);font-size:9.65px;padding-right:1.8px;box-shadow:inset -1px -1px 0 rgba(255,255,255,0.32);line-height:13.5px;">42.8</div><div class="c" style="left:155px;top:97px;width:39px;height:14px;background:rgb(15,223,44);color:rgba(10,30,5,0.8);font-size:9.65px;padding-right:1.8px;box-shadow:inset -1px -1px 0 rgba(255,255,255,0.32);line-height:13.5px;">40.1</div><div class="c" style="left:194px;top:97px;width:38px;height:14px;background:rgb(10,220,22);color:rgba(10,30,5,0.8);font-size:9.65px;padding-right:1.8px;box-shadow:inset -1px -1px 0 rgba(255,255,255,0.32);line-height:13.5px;">38.0</div><div class="c" style="left:232px;top:97px;width:38px;height:14px;background:rgb(13,221,19);color:rgba(10,30,5,0.8);font-size:9.65px;padding-right:1.8px;box-shadow:inset -1px -1px 0 rgba(255,255,255,0.32);line-height:13.5px;">36.3</div><div class="c" style="left:270px;top:97px;width:39px;height:14px;background:rgb(17,223,15);color:rgba(10,30,5,0.8);font-size:9.65px;padding-right:1.8px;box-shadow:inset -1px -1px 0 rgba(255,255,255,0.32);line-height:13.5px;">34.6</div><div class="c" style="left:309px;top:97px;width:38px;height:14px;background:rgb(33,225,14);color:rgba(10,30,5,0.8);font-size:9.65px;padding-right:1.8px;box-shadow:inset -1px -1px 0 rgba(255,255,255,0.32);line-height:13.5px;">32.4</div><div class="c" style="left:347px;top:97px;width:39px;height:14px;background:rgb(48,226,14);color:rgba(10,30,5,0.8);font-size:9.65px;padding-right:1.8px;box-shadow:inset -1px -1px 0 rgba(255,255,255,0.32);line-height:13.5px;">30.8</div><div class="c" style="left:386px;top:97px;width:38px;height:14px;background:rgb(69,228,14);color:rgba(10,30,5,0.8);font-size:9.65px;padding-right:1.8px;box-shadow:inset -1px -1px 0 rgba(255,255,255,0.32);line-height:13.5px;">29.2</div><div class="c" style="left:424px;top:97px;width:39px;height:14px;background:rgb(126,231,14);color:rgba(10,30,5,0.8);font-size:9.65px;padding-right:1.8px;box-shadow:inset -1px -1px 0 rgba(255,255,255,0.32);line-height:13.5px;">25.2</div><div class="c" style="left:463px;top:97px;width:38px;height:14px;background:rgb(175,233,14);color:rgba(10,30,5,0.8);font-size:9.65px;padding-right:1.8px;box-shadow:inset -1px -1px 0 rgba(255,255,255,0.32);line-height:13.5px;">21.1</div><div class="c" style="left:501px;top:97px;width:39px;height:14px;background:rgb(223,233,14);color:rgba(10,30,5,0.8);font-size:9.65px;padding-right:1.8px;box-shadow:inset -1px -1px 0 rgba(255,255,255,0.32);line-height:13.5px;">17.1</div><div class="c" style="left:540px;top:97px;width:38px;height:14px;background:rgb(238,211,14);color:rgba(10,30,5,0.8);font-size:9.65px;padding-right:1.8px;box-shadow:inset -1px -1px 0 rgba(255,255,255,0.32);line-height:13.5px;">14.1</div><div class="c" style="left:578px;top:97px;width:38px;height:14px;background:rgb(242,165,14);color:rgba(10,30,5,0.8);font-size:9.65px;padding-right:1.8px;box-shadow:inset -1px -1px 0 rgba(255,255,255,0.32);line-height:13.5px;">10.4</div><div class="c" style="left:616px;top:97px;width:39px;height:14px;background:rgb(241,129,14);color:rgba(10,30,5,0.8);font-size:9.65px;padding-right:1.8px;box-shadow:inset -1px -1px 0 rgba(255,255,255,0.32);line-height:13.5px;">7.2</div><div class="c" style="left:655px;top:97px;width:38px;height:14px;background:rgb(241,92,14);color:rgba(10,30,5,0.8);font-size:9.65px;padding-right:1.8px;box-shadow:inset -1px -1px 0 rgba(255,255,255,0.32);line-height:13.5px;">3.8</div><div class="c" style="left:693px;top:97px;width:39px;height:14px;background:rgb(240,73,14);color:rgba(10,30,5,0.8);font-size:9.65px;padding-right:1.8px;box-shadow:inset -1px -1px 0 rgba(255,255,255,0.32);line-height:13.5px;">2.0</div><div class="c" style="left:732px;top:97px;width:38px;height:14px;background:rgb(240,54,14);color:rgba(10,30,5,0.8);font-size:9.65px;padding-right:1.8px;box-shadow:inset -1px -1px 0 rgba(255,255,255,0.32);line-height:13.5px;">0.2</div><div class="c" style="left:770px;top:97px;width:20px;height:14px;background:rgb(239,41,14);color:rgba(10,30,5,0.8);font-size:9.65px;padding-right:1.8px;box-shadow:inset -1px -1px 0 rgba(255,255,255,0.32);line-height:13.5px;"></div><div class="c" style="left:0px;top:111px;width:40px;height:13px;background:#ffffff;color:#2c2c2c;font-weight:bold;font-size:10px;padding-right:2px;line-height:16.0px;box-shadow:inset 0 -1px 0 #efefef;">5000</div><div class="c" style="left:40px;top:111px;width:38px;height:13px;background:rgb(10,220,22);color:rgba(10,30,5,0.8);font-size:9.65px;padding-right:1.8px;box-shadow:inset -1px -1px 0 rgba(255,255,255,0.32);line-height:12.5px;">37.9</div><div class="c" style="left:78px;top:111px;width:39px;height:13px;background:rgb(18,225,56);color:rgba(10,30,5,0.8);font-size:9.65px;padding-right:1.8px;box-shadow:inset -1px -1px 0 rgba(255,255,255,0.32);line-height:12.5px;">41.2</div><div class="c" style="left:117px;top:111px;width:38px;height:13px;background:rgb(24,228,86);color:rgba(10,30,5,0.8);font-size:9.65px;padding-right:1.8px;box-shadow:inset -1px -1px 0 rgba(255,255,255,0.32);line-height:12.5px;">42.8</div><div class="c" style="left:155px;top:111px;width:39px;height:13px;background:rgb(12,222,33);color:rgba(10,30,5,0.8);font-size:9.65px;padding-right:1.8px;box-shadow:inset -1px -1px 0 rgba(255,255,255,0.32);line-height:12.5px;">39.0</div><div class="c" style="left:194px;top:111px;width:38px;height:13px;background:rgb(13,221,19);color:rgba(10,30,5,0.8);font-size:9.65px;padding-right:1.8px;box-shadow:inset -1px -1px 0 rgba(255,255,255,0.32);line-height:12.5px;">36.6</div><div class="c" style="left:232px;top:111px;width:38px;height:13px;background:rgb(16,222,16);color:rgba(10,30,5,0.8);font-size:9.65px;padding-right:1.8px;box-shadow:inset -1px -1px 0 rgba(255,255,255,0.32);line-height:12.5px;">34.8</div><div class="c" style="left:270px;top:111px;width:39px;height:13px;background:rgb(25,224,14);color:rgba(10,30,5,0.8);font-size:9.65px;padding-right:1.8px;box-shadow:inset -1px -1px 0 rgba(255,255,255,0.32);line-height:12.5px;">33.2</div><div class="c" style="left:309px;top:111px;width:38px;height:13px;background:rgb(40,225,14);color:rgba(10,30,5,0.8);font-size:9.65px;padding-right:1.8px;box-shadow:inset -1px -1px 0 rgba(255,255,255,0.32);line-height:12.5px;">31.6</div><div class="c" style="left:347px;top:111px;width:39px;height:13px;background:rgb(52,227,14);color:rgba(10,30,5,0.8);font-size:9.65px;padding-right:1.8px;box-shadow:inset -1px -1px 0 rgba(255,255,255,0.32);line-height:12.5px;">30.3</div><div class="c" style="left:386px;top:111px;width:38px;height:13px;background:rgb(73,228,14);color:rgba(10,30,5,0.8);font-size:9.65px;padding-right:1.8px;box-shadow:inset -1px -1px 0 rgba(255,255,255,0.32);line-height:12.5px;">29.0</div><div class="c" style="left:424px;top:111px;width:39px;height:13px;background:rgb(130,231,14);color:rgba(10,30,5,0.8);font-size:9.65px;padding-right:1.8px;box-shadow:inset -1px -1px 0 rgba(255,255,255,0.32);line-height:12.5px;">24.8</div><div class="c" style="left:463px;top:111px;width:38px;height:13px;background:rgb(183,233,14);color:rgba(10,30,5,0.8);font-size:9.65px;padding-right:1.8px;box-shadow:inset -1px -1px 0 rgba(255,255,255,0.32);line-height:12.5px;">20.5</div><div class="c" style="left:501px;top:111px;width:39px;height:13px;background:rgb(229,232,14);color:rgba(10,30,5,0.8);font-size:9.65px;padding-right:1.8px;box-shadow:inset -1px -1px 0 rgba(255,255,255,0.32);line-height:12.5px;">16.3</div><div class="c" style="left:540px;top:111px;width:38px;height:13px;background:rgb(239,207,14);color:rgba(10,30,5,0.8);font-size:9.65px;padding-right:1.8px;box-shadow:inset -1px -1px 0 rgba(255,255,255,0.32);line-height:12.5px;">13.7</div><div class="c" style="left:578px;top:111px;width:38px;height:13px;background:rgb(242,159,14);color:rgba(10,30,5,0.8);font-size:9.65px;padding-right:1.8px;box-shadow:inset -1px -1px 0 rgba(255,255,255,0.32);line-height:12.5px;">9.9</div><div class="c" style="left:616px;top:111px;width:39px;height:13px;background:rgb(241,122,14);color:rgba(10,30,5,0.8);font-size:9.65px;padding-right:1.8px;box-shadow:inset -1px -1px 0 rgba(255,255,255,0.32);line-height:12.5px;">6.6</div><div class="c" style="left:655px;top:111px;width:38px;height:13px;background:rgb(241,86,14);color:rgba(10,30,5,0.8);font-size:9.65px;padding-right:1.8px;box-shadow:inset -1px -1px 0 rgba(255,255,255,0.32);line-height:12.5px;">3.3</div><div class="c" style="left:693px;top:111px;width:39px;height:13px;background:rgb(240,68,14);color:rgba(10,30,5,0.8);font-size:9.65px;padding-right:1.8px;box-shadow:inset -1px -1px 0 rgba(255,255,255,0.32);line-height:12.5px;">1.5</div><div class="c" style="left:732px;top:111px;width:38px;height:13px;background:rgb(240,50,14);color:rgba(10,30,5,0.8);font-size:9.65px;padding-right:1.8px;box-shadow:inset -1px -1px 0 rgba(255,255,255,0.32);line-height:12.5px;">-0.3</div><div class="c" style="left:770px;top:111px;width:20px;height:13px;background:rgb(239,38,14);color:rgba(10,30,5,0.8);font-size:9.65px;padding-right:1.8px;box-shadow:inset -1px -1px 0 rgba(255,255,255,0.32);line-height:12.5px;"></div><div class="c" style="left:0px;top:124px;width:40px;height:14px;background:#ffffff;color:#2c2c2c;font-weight:bold;font-size:10px;padding-right:2px;line-height:17.0px;box-shadow:inset 0 -1px 0 #efefef;">4500</div><div class="c" style="left:40px;top:124px;width:38px;height:14px;background:rgb(10,220,22);color:rgba(10,30,5,0.8);font-size:9.65px;padding-right:1.8px;box-shadow:inset -1px -1px 0 rgba(255,255,255,0.32);line-height:13.5px;">37.9</div><div class="c" style="left:78px;top:124px;width:39px;height:14px;background:rgb(18,225,56);color:rgba(10,30,5,0.8);font-size:9.65px;padding-right:1.8px;box-shadow:inset -1px -1px 0 rgba(255,255,255,0.32);line-height:13.5px;">41.2</div><div class="c" style="left:117px;top:124px;width:38px;height:14px;background:rgb(24,228,86);color:rgba(10,30,5,0.8);font-size:9.65px;padding-right:1.8px;box-shadow:inset -1px -1px 0 rgba(255,255,255,0.32);line-height:13.5px;">42.8</div><div class="c" style="left:155px;top:124px;width:39px;height:14px;background:rgb(10,220,22);color:rgba(10,30,5,0.8);font-size:9.65px;padding-right:1.8px;box-shadow:inset -1px -1px 0 rgba(255,255,255,0.32);line-height:13.5px;">38.0</div><div class="c" style="left:194px;top:124px;width:38px;height:14px;background:rgb(15,222,17);color:rgba(10,30,5,0.8);font-size:9.65px;padding-right:1.8px;box-shadow:inset -1px -1px 0 rgba(255,255,255,0.32);line-height:13.5px;">35.6</div><div class="c" style="left:232px;top:124px;width:38px;height:14px;background:rgb(17,223,15);color:rgba(10,30,5,0.8);font-size:9.65px;padding-right:1.8px;box-shadow:inset -1px -1px 0 rgba(255,255,255,0.32);line-height:13.5px;">34.3</div><div class="c" style="left:270px;top:124px;width:39px;height:14px;background:rgb(27,224,14);color:rgba(10,30,5,0.8);font-size:9.65px;padding-right:1.8px;box-shadow:inset -1px -1px 0 rgba(255,255,255,0.32);line-height:13.5px;">33.0</div><div class="c" style="left:309px;top:124px;width:38px;height:14px;background:rgb(43,226,14);color:rgba(10,30,5,0.8);font-size:9.65px;padding-right:1.8px;box-shadow:inset -1px -1px 0 rgba(255,255,255,0.32);line-height:13.5px;">31.3</div><div class="c" style="left:347px;top:124px;width:39px;height:14px;background:rgb(62,227,14);color:rgba(10,30,5,0.8);font-size:9.65px;padding-right:1.8px;box-shadow:inset -1px -1px 0 rgba(255,255,255,0.32);line-height:13.5px;">29.6</div><div class="c" style="left:386px;top:124px;width:38px;height:14px;background:rgb(91,229,14);color:rgba(10,30,5,0.8);font-size:9.65px;padding-right:1.8px;box-shadow:inset -1px -1px 0 rgba(255,255,255,0.32);line-height:13.5px;">28.0</div><div class="c" style="left:424px;top:124px;width:39px;height:14px;background:rgb(141,232,14);color:rgba(10,30,5,0.8);font-size:9.65px;padding-right:1.8px;box-shadow:inset -1px -1px 0 rgba(255,255,255,0.32);line-height:13.5px;">23.8</div><div class="c" style="left:463px;top:124px;width:38px;height:14px;background:rgb(195,233,14);color:rgba(10,30,5,0.8);font-size:9.65px;padding-right:1.8px;box-shadow:inset -1px -1px 0 rgba(255,255,255,0.32);line-height:13.5px;">19.6</div><div class="c" style="left:501px;top:124px;width:39px;height:14px;background:rgb(234,227,14);color:rgba(10,30,5,0.8);font-size:9.65px;padding-right:1.8px;box-shadow:inset -1px -1px 0 rgba(255,255,255,0.32);line-height:13.5px;">15.5</div><div class="c" style="left:540px;top:124px;width:38px;height:14px;background:rgb(240,200,14);color:rgba(10,30,5,0.8);font-size:9.65px;padding-right:1.8px;box-shadow:inset -1px -1px 0 rgba(255,255,255,0.32);line-height:13.5px;">13.1</div><div class="c" style="left:578px;top:124px;width:38px;height:14px;background:rgb(242,153,14);color:rgba(10,30,5,0.8);font-size:9.65px;padding-right:1.8px;box-shadow:inset -1px -1px 0 rgba(255,255,255,0.32);line-height:13.5px;">9.4</div><div class="c" style="left:616px;top:124px;width:39px;height:14px;background:rgb(241,116,14);color:rgba(10,30,5,0.8);font-size:9.65px;padding-right:1.8px;box-shadow:inset -1px -1px 0 rgba(255,255,255,0.32);line-height:13.5px;">6.1</div><div class="c" style="left:655px;top:124px;width:38px;height:14px;background:rgb(241,81,14);color:rgba(10,30,5,0.8);font-size:9.65px;padding-right:1.8px;box-shadow:inset -1px -1px 0 rgba(255,255,255,0.32);line-height:13.5px;">2.8</div><div class="c" style="left:693px;top:124px;width:39px;height:14px;background:rgb(240,62,14);color:rgba(10,30,5,0.8);font-size:9.65px;padding-right:1.8px;box-shadow:inset -1px -1px 0 rgba(255,255,255,0.32);line-height:13.5px;">1.0</div><div class="c" style="left:732px;top:124px;width:38px;height:14px;background:rgb(240,47,14);color:rgba(10,30,5,0.8);font-size:9.65px;padding-right:1.8px;box-shadow:inset -1px -1px 0 rgba(255,255,255,0.32);line-height:13.5px;">-0.8</div><div class="c" style="left:770px;top:124px;width:20px;height:14px;background:rgb(239,34,14);color:rgba(10,30,5,0.8);font-size:9.65px;padding-right:1.8px;box-shadow:inset -1px -1px 0 rgba(255,255,255,0.32);line-height:13.5px;"></div><div class="c" style="left:0px;top:138px;width:40px;height:13px;background:#ffffff;color:#2c2c2c;font-weight:bold;font-size:10px;padding-right:2px;line-height:16.0px;box-shadow:inset 0 -1px 0 #efefef;">4000</div><div class="c" style="left:40px;top:138px;width:38px;height:13px;background:rgb(10,220,22);color:rgba(10,30,5,0.8);font-size:9.65px;padding-right:1.8px;box-shadow:inset -1px -1px 0 rgba(255,255,255,0.32);line-height:12.5px;">37.9</div><div class="c" style="left:78px;top:138px;width:39px;height:13px;background:rgb(18,225,56);color:rgba(10,30,5,0.8);font-size:9.65px;padding-right:1.8px;box-shadow:inset -1px -1px 0 rgba(255,255,255,0.32);line-height:12.5px;">41.2</div><div class="c" style="left:117px;top:138px;width:38px;height:13px;background:rgb(24,228,86);color:rgba(10,30,5,0.8);font-size:9.65px;padding-right:1.8px;box-shadow:inset -1px -1px 0 rgba(255,255,255,0.32);line-height:12.5px;">42.8</div><div class="c" style="left:155px;top:138px;width:39px;height:13px;background:rgb(12,221,20);color:rgba(10,30,5,0.8);font-size:9.65px;padding-right:1.8px;box-shadow:inset -1px -1px 0 rgba(255,255,255,0.32);line-height:12.5px;">37.0</div><div class="c" style="left:194px;top:138px;width:38px;height:13px;background:rgb(18,223,14);color:rgba(10,30,5,0.8);font-size:9.65px;padding-right:1.8px;box-shadow:inset -1px -1px 0 rgba(255,255,255,0.32);line-height:12.5px;">34.2</div><div class="c" style="left:232px;top:138px;width:38px;height:13px;background:rgb(24,224,14);color:rgba(10,30,5,0.8);font-size:9.65px;padding-right:1.8px;box-shadow:inset -1px -1px 0 rgba(255,255,255,0.32);line-height:12.5px;">33.4</div><div class="c" style="left:270px;top:138px;width:39px;height:13px;background:rgb(41,226,14);color:rgba(10,30,5,0.8);font-size:9.65px;padding-right:1.8px;box-shadow:inset -1px -1px 0 rgba(255,255,255,0.32);line-height:12.5px;">31.5</div><div class="c" style="left:309px;top:138px;width:38px;height:13px;background:rgb(55,227,14);color:rgba(10,30,5,0.8);font-size:9.65px;padding-right:1.8px;box-shadow:inset -1px -1px 0 rgba(255,255,255,0.32);line-height:12.5px;">30.0</div><div class="c" style="left:347px;top:138px;width:39px;height:13px;background:rgb(91,229,14);color:rgba(10,30,5,0.8);font-size:9.65px;padding-right:1.8px;box-shadow:inset -1px -1px 0 rgba(255,255,255,0.32);line-height:12.5px;">28.0</div><div class="c" style="left:386px;top:138px;width:38px;height:13px;background:rgb(116,231,14);color:rgba(10,30,5,0.8);font-size:9.65px;padding-right:1.8px;box-shadow:inset -1px -1px 0 rgba(255,255,255,0.32);line-height:12.5px;">26.1</div><div class="c" style="left:424px;top:138px;width:39px;height:13px;background:rgb(161,232,14);color:rgba(10,30,5,0.8);font-size:9.65px;padding-right:1.8px;box-shadow:inset -1px -1px 0 rgba(255,255,255,0.32);line-height:12.5px;">22.2</div><div class="c" style="left:463px;top:138px;width:38px;height:13px;background:rgb(211,234,14);color:rgba(10,30,5,0.8);font-size:9.65px;padding-right:1.8px;box-shadow:inset -1px -1px 0 rgba(255,255,255,0.32);line-height:12.5px;">18.3</div><div class="c" style="left:501px;top:138px;width:39px;height:13px;background:rgb(237,215,14);color:rgba(10,30,5,0.8);font-size:9.65px;padding-right:1.8px;box-shadow:inset -1px -1px 0 rgba(255,255,255,0.32);line-height:12.5px;">14.4</div><div class="c" style="left:540px;top:138px;width:38px;height:13px;background:rgb(241,182,14);color:rgba(10,30,5,0.8);font-size:9.65px;padding-right:1.8px;box-shadow:inset -1px -1px 0 rgba(255,255,255,0.32);line-height:12.5px;">11.7</div><div class="c" style="left:578px;top:138px;width:38px;height:13px;background:rgb(242,136,14);color:rgba(10,30,5,0.8);font-size:9.65px;padding-right:1.8px;box-shadow:inset -1px -1px 0 rgba(255,255,255,0.32);line-height:12.5px;">7.9</div><div class="c" style="left:616px;top:138px;width:39px;height:13px;background:rgb(241,100,14);color:rgba(10,30,5,0.8);font-size:9.65px;padding-right:1.8px;box-shadow:inset -1px -1px 0 rgba(255,255,255,0.32);line-height:12.5px;">4.6</div><div class="c" style="left:655px;top:138px;width:38px;height:13px;background:rgb(240,66,14);color:rgba(10,30,5,0.8);font-size:9.65px;padding-right:1.8px;box-shadow:inset -1px -1px 0 rgba(255,255,255,0.32);line-height:12.5px;">1.3</div><div class="c" style="left:693px;top:138px;width:39px;height:13px;background:rgb(240,49,14);color:rgba(10,30,5,0.8);font-size:9.65px;padding-right:1.8px;box-shadow:inset -1px -1px 0 rgba(255,255,255,0.32);line-height:12.5px;">-0.5</div><div class="c" style="left:732px;top:138px;width:38px;height:13px;background:rgb(239,36,14);color:rgba(10,30,5,0.8);font-size:9.65px;padding-right:1.8px;box-shadow:inset -1px -1px 0 rgba(255,255,255,0.32);line-height:12.5px;">-2.3</div><div class="c" style="left:770px;top:138px;width:20px;height:13px;background:rgb(238,24,14);color:rgba(10,30,5,0.8);font-size:9.65px;padding-right:1.8px;box-shadow:inset -1px -1px 0 rgba(255,255,255,0.32);line-height:12.5px;"></div><div class="c" style="left:0px;top:151px;width:40px;height:14px;background:#ffffff;color:#2c2c2c;font-weight:bold;font-size:10px;padding-right:2px;line-height:17.0px;box-shadow:inset 0 -1px 0 #efefef;">3500</div><div class="c" style="left:40px;top:151px;width:38px;height:14px;background:rgb(10,220,22);color:rgba(10,30,5,0.8);font-size:9.65px;padding-right:1.8px;box-shadow:inset -1px -1px 0 rgba(255,255,255,0.32);line-height:13.5px;">37.9</div><div class="c" style="left:78px;top:151px;width:39px;height:14px;background:rgb(18,225,56);color:rgba(10,30,5,0.8);font-size:9.65px;padding-right:1.8px;box-shadow:inset -1px -1px 0 rgba(255,255,255,0.32);line-height:13.5px;">41.2</div><div class="c" style="left:117px;top:151px;width:38px;height:14px;background:rgb(24,228,86);color:rgba(10,30,5,0.8);font-size:9.65px;padding-right:1.8px;box-shadow:inset -1px -1px 0 rgba(255,255,255,0.32);line-height:13.5px;">42.8</div><div class="c" style="left:155px;top:151px;width:39px;height:14px;background:rgb(15,222,17);color:rgba(10,30,5,0.8);font-size:9.65px;padding-right:1.8px;box-shadow:inset -1px -1px 0 rgba(255,255,255,0.32);line-height:13.5px;">35.7</div><div class="c" style="left:194px;top:151px;width:38px;height:14px;background:rgb(38,225,14);color:rgba(10,30,5,0.8);font-size:9.65px;padding-right:1.8px;box-shadow:inset -1px -1px 0 rgba(255,255,255,0.32);line-height:13.5px;">31.8</div><div class="c" style="left:232px;top:151px;width:38px;height:14px;background:rgb(45,226,14);color:rgba(10,30,5,0.8);font-size:9.65px;padding-right:1.8px;box-shadow:inset -1px -1px 0 rgba(255,255,255,0.32);line-height:13.5px;">31.1</div><div class="c" style="left:270px;top:151px;width:39px;height:14px;background:rgb(84,229,14);color:rgba(10,30,5,0.8);font-size:9.65px;padding-right:1.8px;box-shadow:inset -1px -1px 0 rgba(255,255,255,0.32);line-height:13.5px;">28.4</div><div class="c" style="left:309px;top:151px;width:38px;height:14px;background:rgb(108,230,14);color:rgba(10,30,5,0.8);font-size:9.65px;padding-right:1.8px;box-shadow:inset -1px -1px 0 rgba(255,255,255,0.32);line-height:13.5px;">26.8</div><div class="c" style="left:347px;top:151px;width:39px;height:14px;background:rgb(122,231,14);color:rgba(10,30,5,0.8);font-size:9.65px;padding-right:1.8px;box-shadow:inset -1px -1px 0 rgba(255,255,255,0.32);line-height:13.5px;">25.5</div><div class="c" style="left:386px;top:151px;width:38px;height:14px;background:rgb(137,231,14);color:rgba(10,30,5,0.8);font-size:9.65px;padding-right:1.8px;box-shadow:inset -1px -1px 0 rgba(255,255,255,0.32);line-height:13.5px;">24.2</div><div class="c" style="left:424px;top:151px;width:39px;height:14px;background:rgb(183,233,14);color:rgba(10,30,5,0.8);font-size:9.65px;padding-right:1.8px;box-shadow:inset -1px -1px 0 rgba(255,255,255,0.32);line-height:13.5px;">20.5</div><div class="c" style="left:463px;top:151px;width:38px;height:14px;background:rgb(225,233,14);color:rgba(10,30,5,0.8);font-size:9.65px;padding-right:1.8px;box-shadow:inset -1px -1px 0 rgba(255,255,255,0.32);line-height:13.5px;">16.8</div><div class="c" style="left:501px;top:151px;width:39px;height:14px;background:rgb(240,201,14);color:rgba(10,30,5,0.8);font-size:9.65px;padding-right:1.8px;box-shadow:inset -1px -1px 0 rgba(255,255,255,0.32);line-height:13.5px;">13.2</div><div class="c" style="left:540px;top:151px;width:38px;height:14px;background:rgb(242,169,14);color:rgba(10,30,5,0.8);font-size:9.65px;padding-right:1.8px;box-shadow:inset -1px -1px 0 rgba(255,255,255,0.32);line-height:13.5px;">10.7</div><div class="c" style="left:578px;top:151px;width:38px;height:14px;background:rgb(241,126,14);color:rgba(10,30,5,0.8);font-size:9.65px;padding-right:1.8px;box-shadow:inset -1px -1px 0 rgba(255,255,255,0.32);line-height:13.5px;">7.0</div><div class="c" style="left:616px;top:151px;width:39px;height:14px;background:rgb(241,90,14);color:rgba(10,30,5,0.8);font-size:9.65px;padding-right:1.8px;box-shadow:inset -1px -1px 0 rgba(255,255,255,0.32);line-height:13.5px;">3.7</div><div class="c" style="left:655px;top:151px;width:38px;height:14px;background:rgb(240,56,14);color:rgba(10,30,5,0.8);font-size:9.65px;padding-right:1.8px;box-shadow:inset -1px -1px 0 rgba(255,255,255,0.32);line-height:13.5px;">0.4</div><div class="c" style="left:693px;top:151px;width:39px;height:14px;background:rgb(239,42,14);color:rgba(10,30,5,0.8);font-size:9.65px;padding-right:1.8px;box-shadow:inset -1px -1px 0 rgba(255,255,255,0.32);line-height:13.5px;">-1.4</div><div class="c" style="left:732px;top:151px;width:38px;height:14px;background:rgb(239,30,14);color:rgba(10,30,5,0.8);font-size:9.65px;padding-right:1.8px;box-shadow:inset -1px -1px 0 rgba(255,255,255,0.32);line-height:13.5px;">-3.2</div><div class="c" style="left:770px;top:151px;width:20px;height:14px;background:rgb(238,18,14);color:rgba(10,30,5,0.8);font-size:9.65px;padding-right:1.8px;box-shadow:inset -1px -1px 0 rgba(255,255,255,0.32);line-height:13.5px;"></div><div class="c" style="left:0px;top:165px;width:40px;height:14px;background:#ffffff;color:#2c2c2c;font-weight:bold;font-size:10px;padding-right:2px;line-height:17.0px;box-shadow:inset 0 -1px 0 #efefef;">3000</div><div class="c" style="left:40px;top:165px;width:38px;height:14px;background:rgb(10,220,22);color:rgba(10,30,5,0.8);font-size:9.65px;padding-right:1.8px;box-shadow:inset -1px -1px 0 rgba(255,255,255,0.32);line-height:13.5px;">37.9</div><div class="c" style="left:78px;top:165px;width:39px;height:14px;background:rgb(18,225,56);color:rgba(10,30,5,0.8);font-size:9.65px;padding-right:1.8px;box-shadow:inset -1px -1px 0 rgba(255,255,255,0.32);line-height:13.5px;">41.2</div><div class="c" style="left:117px;top:165px;width:38px;height:14px;background:rgb(24,228,86);color:rgba(10,30,5,0.8);font-size:9.65px;padding-right:1.8px;box-shadow:inset -1px -1px 0 rgba(255,255,255,0.32);line-height:13.5px;">42.8</div><div class="c" style="left:155px;top:165px;width:39px;height:14px;background:rgb(19,223,14);color:rgba(10,30,5,0.8);font-size:9.65px;padding-right:1.8px;box-shadow:inset -1px -1px 0 rgba(255,255,255,0.32);line-height:13.5px;">33.9</div><div class="c" style="left:194px;top:165px;width:38px;height:14px;background:rgb(75,228,14);color:rgba(10,30,5,0.8);font-size:9.65px;padding-right:1.8px;box-shadow:inset -1px -1px 0 rgba(255,255,255,0.32);line-height:13.5px;">28.9</div><div class="c" style="left:232px;top:165px;width:38px;height:14px;background:rgb(98,230,14);color:rgba(10,30,5,0.8);font-size:9.65px;padding-right:1.8px;box-shadow:inset -1px -1px 0 rgba(255,255,255,0.32);line-height:13.5px;">27.6</div><div class="c" style="left:270px;top:165px;width:39px;height:14px;background:rgb(124,231,14);color:rgba(10,30,5,0.8);font-size:9.65px;padding-right:1.8px;box-shadow:inset -1px -1px 0 rgba(255,255,255,0.32);line-height:13.5px;">25.4</div><div class="c" style="left:309px;top:165px;width:38px;height:14px;background:rgb(143,232,14);color:rgba(10,30,5,0.8);font-size:9.65px;padding-right:1.8px;box-shadow:inset -1px -1px 0 rgba(255,255,255,0.32);line-height:13.5px;">23.6</div><div class="c" style="left:347px;top:165px;width:39px;height:14px;background:rgb(153,232,14);color:rgba(10,30,5,0.8);font-size:9.65px;padding-right:1.8px;box-shadow:inset -1px -1px 0 rgba(255,255,255,0.32);line-height:13.5px;">22.8</div><div class="c" style="left:386px;top:165px;width:38px;height:14px;background:rgb(162,232,14);color:rgba(10,30,5,0.8);font-size:9.65px;padding-right:1.8px;box-shadow:inset -1px -1px 0 rgba(255,255,255,0.32);line-height:13.5px;">22.1</div><div class="c" style="left:424px;top:165px;width:39px;height:14px;background:rgb(207,234,14);color:rgba(10,30,5,0.8);font-size:9.65px;padding-right:1.8px;box-shadow:inset -1px -1px 0 rgba(255,255,255,0.32);line-height:13.5px;">18.6</div><div class="c" style="left:463px;top:165px;width:38px;height:14px;background:rgb(235,222,14);color:rgba(10,30,5,0.8);font-size:9.65px;padding-right:1.8px;box-shadow:inset -1px -1px 0 rgba(255,255,255,0.32);line-height:13.5px;">15.1</div><div class="c" style="left:501px;top:165px;width:39px;height:14px;background:rgb(241,181,14);color:rgba(10,30,5,0.8);font-size:9.65px;padding-right:1.8px;box-shadow:inset -1px -1px 0 rgba(255,255,255,0.32);line-height:13.5px;">11.6</div><div class="c" style="left:540px;top:165px;width:38px;height:14px;background:rgb(242,147,14);color:rgba(10,30,5,0.8);font-size:9.65px;padding-right:1.8px;box-shadow:inset -1px -1px 0 rgba(255,255,255,0.32);line-height:13.5px;">8.8</div><div class="c" style="left:578px;top:165px;width:38px;height:14px;background:rgb(241,104,14);color:rgba(10,30,5,0.8);font-size:9.65px;padding-right:1.8px;box-shadow:inset -1px -1px 0 rgba(255,255,255,0.32);line-height:13.5px;">5.0</div><div class="c" style="left:616px;top:165px;width:39px;height:14px;background:rgb(240,75,14);color:rgba(10,30,5,0.8);font-size:9.65px;padding-right:1.8px;box-shadow:inset -1px -1px 0 rgba(255,255,255,0.32);line-height:13.5px;">2.2</div><div class="c" style="left:655px;top:165px;width:38px;height:14px;background:rgb(240,48,14);color:rgba(10,30,5,0.8);font-size:9.65px;padding-right:1.8px;box-shadow:inset -1px -1px 0 rgba(255,255,255,0.32);line-height:13.5px;">-0.6</div><div class="c" style="left:693px;top:165px;width:39px;height:14px;background:rgb(239,36,14);color:rgba(10,30,5,0.8);font-size:9.65px;padding-right:1.8px;box-shadow:inset -1px -1px 0 rgba(255,255,255,0.32);line-height:13.5px;">-2.4</div><div class="c" style="left:732px;top:165px;width:38px;height:14px;background:rgb(238,23,14);color:rgba(10,30,5,0.8);font-size:9.65px;padding-right:1.8px;box-shadow:inset -1px -1px 0 rgba(255,255,255,0.32);line-height:13.5px;">-4.2</div><div class="c" style="left:770px;top:165px;width:20px;height:14px;background:rgb(238,18,14);color:rgba(10,30,5,0.8);font-size:9.65px;padding-right:1.8px;box-shadow:inset -1px -1px 0 rgba(255,255,255,0.32);line-height:13.5px;"></div><div class="c" style="left:0px;top:179px;width:40px;height:13px;background:#ffffff;color:#2c2c2c;font-weight:bold;font-size:10px;padding-right:2px;line-height:16.0px;box-shadow:inset 0 -1px 0 #efefef;">2500</div><div class="c" style="left:40px;top:179px;width:38px;height:13px;background:rgb(10,220,22);color:rgba(10,30,5,0.8);font-size:9.65px;padding-right:1.8px;box-shadow:inset -1px -1px 0 rgba(255,255,255,0.32);line-height:12.5px;">37.9</div><div class="c" style="left:78px;top:179px;width:39px;height:13px;background:rgb(18,225,56);color:rgba(10,30,5,0.8);font-size:9.65px;padding-right:1.8px;box-shadow:inset -1px -1px 0 rgba(255,255,255,0.32);line-height:12.5px;">41.2</div><div class="c" style="left:117px;top:179px;width:38px;height:13px;background:rgb(24,228,86);color:rgba(10,30,5,0.8);font-size:9.65px;padding-right:1.8px;box-shadow:inset -1px -1px 0 rgba(255,255,255,0.32);line-height:12.5px;">42.8</div><div class="c" style="left:155px;top:179px;width:39px;height:13px;background:rgb(41,226,14);color:rgba(10,30,5,0.8);font-size:9.65px;padding-right:1.8px;box-shadow:inset -1px -1px 0 rgba(255,255,255,0.32);line-height:12.5px;">31.5</div><div class="c" style="left:194px;top:179px;width:38px;height:13px;background:rgb(110,230,14);color:rgba(10,30,5,0.8);font-size:9.65px;padding-right:1.8px;box-shadow:inset -1px -1px 0 rgba(255,255,255,0.32);line-height:12.5px;">26.6</div><div class="c" style="left:232px;top:179px;width:38px;height:13px;background:rgb(122,231,14);color:rgba(10,30,5,0.8);font-size:9.65px;padding-right:1.8px;box-shadow:inset -1px -1px 0 rgba(255,255,255,0.32);line-height:12.5px;">25.5</div><div class="c" style="left:270px;top:179px;width:39px;height:13px;background:rgb(139,232,14);color:rgba(10,30,5,0.8);font-size:9.65px;padding-right:1.8px;box-shadow:inset -1px -1px 0 rgba(255,255,255,0.32);line-height:12.5px;">24.0</div><div class="c" style="left:309px;top:179px;width:38px;height:13px;background:rgb(157,232,14);color:rgba(10,30,5,0.8);font-size:9.65px;padding-right:1.8px;box-shadow:inset -1px -1px 0 rgba(255,255,255,0.32);line-height:12.5px;">22.5</div><div class="c" style="left:347px;top:179px;width:39px;height:13px;background:rgb(173,233,14);color:rgba(10,30,5,0.8);font-size:9.65px;padding-right:1.8px;box-shadow:inset -1px -1px 0 rgba(255,255,255,0.32);line-height:12.5px;">21.3</div><div class="c" style="left:386px;top:179px;width:38px;height:13px;background:rgb(190,233,14);color:rgba(10,30,5,0.8);font-size:9.65px;padding-right:1.8px;box-shadow:inset -1px -1px 0 rgba(255,255,255,0.32);line-height:12.5px;">20.0</div><div class="c" style="left:424px;top:179px;width:39px;height:13px;background:rgb(227,233,14);color:rgba(10,30,5,0.8);font-size:9.65px;padding-right:1.8px;box-shadow:inset -1px -1px 0 rgba(255,255,255,0.32);line-height:12.5px;">16.6</div><div class="c" style="left:463px;top:179px;width:38px;height:13px;background:rgb(240,201,14);color:rgba(10,30,5,0.8);font-size:9.65px;padding-right:1.8px;box-shadow:inset -1px -1px 0 rgba(255,255,255,0.32);line-height:12.5px;">13.2</div><div class="c" style="left:501px;top:179px;width:39px;height:13px;background:rgb(242,157,14);color:rgba(10,30,5,0.8);font-size:9.65px;padding-right:1.8px;box-shadow:inset -1px -1px 0 rgba(255,255,255,0.32);line-height:12.5px;">9.7</div><div class="c" style="left:540px;top:179px;width:38px;height:13px;background:rgb(241,123,14);color:rgba(10,30,5,0.8);font-size:9.65px;padding-right:1.8px;box-shadow:inset -1px -1px 0 rgba(255,255,255,0.32);line-height:12.5px;">6.7</div><div class="c" style="left:578px;top:179px;width:38px;height:13px;background:rgb(241,83,14);color:rgba(10,30,5,0.8);font-size:9.65px;padding-right:1.8px;box-shadow:inset -1px -1px 0 rgba(255,255,255,0.32);line-height:12.5px;">3.0</div><div class="c" style="left:616px;top:179px;width:39px;height:13px;background:rgb(240,59,14);color:rgba(10,30,5,0.8);font-size:9.65px;padding-right:1.8px;box-shadow:inset -1px -1px 0 rgba(255,255,255,0.32);line-height:12.5px;">0.7</div><div class="c" style="left:655px;top:179px;width:38px;height:13px;background:rgb(239,41,14);color:rgba(10,30,5,0.8);font-size:9.65px;padding-right:1.8px;box-shadow:inset -1px -1px 0 rgba(255,255,255,0.32);line-height:12.5px;">-1.6</div><div class="c" style="left:693px;top:179px;width:39px;height:13px;background:rgb(239,29,14);color:rgba(10,30,5,0.8);font-size:9.65px;padding-right:1.8px;box-shadow:inset -1px -1px 0 rgba(255,255,255,0.32);line-height:12.5px;">-3.4</div><div class="c" style="left:732px;top:179px;width:38px;height:13px;background:rgb(238,18,14);color:rgba(10,30,5,0.8);font-size:9.65px;padding-right:1.8px;box-shadow:inset -1px -1px 0 rgba(255,255,255,0.32);line-height:12.5px;">-5.0</div><div class="c" style="left:770px;top:179px;width:20px;height:13px;background:rgb(238,18,14);color:rgba(10,30,5,0.8);font-size:9.65px;padding-right:1.8px;box-shadow:inset -1px -1px 0 rgba(255,255,255,0.32);line-height:12.5px;"></div><div class="c" style="left:0px;top:192px;width:40px;height:14px;background:#ffffff;color:#2c2c2c;font-weight:bold;font-size:10px;padding-right:2px;line-height:17.0px;box-shadow:inset 0 -1px 0 #efefef;">2000</div><div class="c" style="left:40px;top:192px;width:38px;height:14px;background:rgb(80,229,14);color:rgba(10,30,5,0.8);font-size:9.65px;padding-right:1.8px;box-shadow:inset -1px -1px 0 rgba(255,255,255,0.32);line-height:13.5px;">28.6</div><div class="c" style="left:78px;top:192px;width:39px;height:14px;background:rgb(36,225,14);color:rgba(10,30,5,0.8);font-size:9.65px;padding-right:1.8px;box-shadow:inset -1px -1px 0 rgba(255,255,255,0.32);line-height:13.5px;">32.0</div><div class="c" style="left:117px;top:192px;width:38px;height:14px;background:rgb(21,223,14);color:rgba(10,30,5,0.8);font-size:9.65px;padding-right:1.8px;box-shadow:inset -1px -1px 0 rgba(255,255,255,0.32);line-height:13.5px;">33.7</div><div class="c" style="left:155px;top:192px;width:39px;height:14px;background:rgb(84,229,14);color:rgba(10,30,5,0.8);font-size:9.65px;padding-right:1.8px;box-shadow:inset -1px -1px 0 rgba(255,255,255,0.32);line-height:13.5px;">28.4</div><div class="c" style="left:194px;top:192px;width:38px;height:14px;background:rgb(136,231,14);color:rgba(10,30,5,0.8);font-size:9.65px;padding-right:1.8px;box-shadow:inset -1px -1px 0 rgba(255,255,255,0.32);line-height:13.5px;">24.3</div><div class="c" style="left:232px;top:192px;width:38px;height:14px;background:rgb(146,232,14);color:rgba(10,30,5,0.8);font-size:9.65px;padding-right:1.8px;box-shadow:inset -1px -1px 0 rgba(255,255,255,0.32);line-height:13.5px;">23.4</div><div class="c" style="left:270px;top:192px;width:39px;height:14px;background:rgb(159,232,14);color:rgba(10,30,5,0.8);font-size:9.65px;padding-right:1.8px;box-shadow:inset -1px -1px 0 rgba(255,255,255,0.32);line-height:13.5px;">22.3</div><div class="c" style="left:309px;top:192px;width:38px;height:14px;background:rgb(178,233,14);color:rgba(10,30,5,0.8);font-size:9.65px;padding-right:1.8px;box-shadow:inset -1px -1px 0 rgba(255,255,255,0.32);line-height:13.5px;">20.9</div><div class="c" style="left:347px;top:192px;width:39px;height:14px;background:rgb(200,233,14);color:rgba(10,30,5,0.8);font-size:9.65px;padding-right:1.8px;box-shadow:inset -1px -1px 0 rgba(255,255,255,0.32);line-height:13.5px;">19.2</div><div class="c" style="left:386px;top:192px;width:38px;height:14px;background:rgb(218,234,14);color:rgba(10,30,5,0.8);font-size:9.65px;padding-right:1.8px;box-shadow:inset -1px -1px 0 rgba(255,255,255,0.32);line-height:13.5px;">17.6</div><div class="c" style="left:424px;top:192px;width:39px;height:14px;background:rgb(238,213,14);color:rgba(10,30,5,0.8);font-size:9.65px;padding-right:1.8px;box-shadow:inset -1px -1px 0 rgba(255,255,255,0.32);line-height:13.5px;">14.2</div><div class="c" style="left:463px;top:192px;width:38px;height:14px;background:rgb(241,172,14);color:rgba(10,30,5,0.8);font-size:9.65px;padding-right:1.8px;box-shadow:inset -1px -1px 0 rgba(255,255,255,0.32);line-height:13.5px;">10.9</div><div class="c" style="left:501px;top:192px;width:39px;height:14px;background:rgb(242,133,14);color:rgba(10,30,5,0.8);font-size:9.65px;padding-right:1.8px;box-shadow:inset -1px -1px 0 rgba(255,255,255,0.32);line-height:13.5px;">7.6</div><div class="c" style="left:540px;top:192px;width:38px;height:14px;background:rgb(241,101,14);color:rgba(10,30,5,0.8);font-size:9.65px;padding-right:1.8px;box-shadow:inset -1px -1px 0 rgba(255,255,255,0.32);line-height:13.5px;">4.7</div><div class="c" style="left:578px;top:192px;width:38px;height:14px;background:rgb(240,62,14);color:rgba(10,30,5,0.8);font-size:9.65px;padding-right:1.8px;box-shadow:inset -1px -1px 0 rgba(255,255,255,0.32);line-height:13.5px;">1.0</div><div class="c" style="left:616px;top:192px;width:39px;height:14px;background:rgb(240,47,14);color:rgba(10,30,5,0.8);font-size:9.65px;padding-right:1.8px;box-shadow:inset -1px -1px 0 rgba(255,255,255,0.32);line-height:13.5px;">-0.8</div><div class="c" style="left:655px;top:192px;width:38px;height:14px;background:rgb(239,34,14);color:rgba(10,30,5,0.8);font-size:9.65px;padding-right:1.8px;box-shadow:inset -1px -1px 0 rgba(255,255,255,0.32);line-height:13.5px;">-2.6</div><div class="c" style="left:693px;top:192px;width:39px;height:14px;background:rgb(238,22,14);color:rgba(10,30,5,0.8);font-size:9.65px;padding-right:1.8px;box-shadow:inset -1px -1px 0 rgba(255,255,255,0.32);line-height:13.5px;">-4.4</div><div class="c" style="left:732px;top:192px;width:38px;height:14px;background:rgb(238,18,14);color:rgba(10,30,5,0.8);font-size:9.65px;padding-right:1.8px;box-shadow:inset -1px -1px 0 rgba(255,255,255,0.32);line-height:13.5px;">-5.0</div><div class="c" style="left:770px;top:192px;width:20px;height:14px;background:rgb(238,18,14);color:rgba(10,30,5,0.8);font-size:9.65px;padding-right:1.8px;box-shadow:inset -1px -1px 0 rgba(255,255,255,0.32);line-height:13.5px;"></div><div class="c" style="left:0px;top:206px;width:40px;height:13px;background:#ffffff;color:#2c2c2c;font-weight:bold;font-size:10px;padding-right:2px;line-height:16.0px;box-shadow:inset 0 -1px 0 #efefef;">1500</div><div class="c" style="left:40px;top:206px;width:38px;height:13px;background:rgb(199,233,14);color:rgba(10,30,5,0.8);font-size:9.65px;padding-right:1.8px;box-shadow:inset -1px -1px 0 rgba(255,255,255,0.32);line-height:12.5px;">19.3</div><div class="c" style="left:78px;top:206px;width:39px;height:13px;background:rgb(151,232,14);color:rgba(10,30,5,0.8);font-size:9.65px;padding-right:1.8px;box-shadow:inset -1px -1px 0 rgba(255,255,255,0.32);line-height:12.5px;">22.9</div><div class="c" style="left:117px;top:206px;width:38px;height:13px;background:rgb(132,231,14);color:rgba(10,30,5,0.8);font-size:9.65px;padding-right:1.8px;box-shadow:inset -1px -1px 0 rgba(255,255,255,0.32);line-height:12.5px;">24.6</div><div class="c" style="left:155px;top:206px;width:39px;height:13px;background:rgb(137,231,14);color:rgba(10,30,5,0.8);font-size:9.65px;padding-right:1.8px;box-shadow:inset -1px -1px 0 rgba(255,255,255,0.32);line-height:12.5px;">24.2</div><div class="c" style="left:194px;top:206px;width:38px;height:13px;background:rgb(167,232,14);color:rgba(10,30,5,0.8);font-size:9.65px;padding-right:1.8px;box-shadow:inset -1px -1px 0 rgba(255,255,255,0.32);line-height:12.5px;">21.7</div><div class="c" style="left:232px;top:206px;width:38px;height:13px;background:rgb(182,233,14);color:rgba(10,30,5,0.8);font-size:9.65px;padding-right:1.8px;box-shadow:inset -1px -1px 0 rgba(255,255,255,0.32);line-height:12.5px;">20.6</div><div class="c" style="left:270px;top:206px;width:39px;height:13px;background:rgb(198,233,14);color:rgba(10,30,5,0.8);font-size:9.65px;padding-right:1.8px;box-shadow:inset -1px -1px 0 rgba(255,255,255,0.32);line-height:12.5px;">19.4</div><div class="c" style="left:309px;top:206px;width:38px;height:13px;background:rgb(215,234,14);color:rgba(10,30,5,0.8);font-size:9.65px;padding-right:1.8px;box-shadow:inset -1px -1px 0 rgba(255,255,255,0.32);line-height:12.5px;">18.0</div><div class="c" style="left:347px;top:206px;width:39px;height:13px;background:rgb(229,232,14);color:rgba(10,30,5,0.8);font-size:9.65px;padding-right:1.8px;box-shadow:inset -1px -1px 0 rgba(255,255,255,0.32);line-height:12.5px;">16.4</div><div class="c" style="left:386px;top:206px;width:38px;height:13px;background:rgb(236,219,14);color:rgba(10,30,5,0.8);font-size:9.65px;padding-right:1.8px;box-shadow:inset -1px -1px 0 rgba(255,255,255,0.32);line-height:12.5px;">14.8</div><div class="c" style="left:424px;top:206px;width:39px;height:13px;background:rgb(241,181,14);color:rgba(10,30,5,0.8);font-size:9.65px;padding-right:1.8px;box-shadow:inset -1px -1px 0 rgba(255,255,255,0.32);line-height:12.5px;">11.6</div><div class="c" style="left:463px;top:206px;width:38px;height:13px;background:rgb(242,143,14);color:rgba(10,30,5,0.8);font-size:9.65px;padding-right:1.8px;box-shadow:inset -1px -1px 0 rgba(255,255,255,0.32);line-height:12.5px;">8.5</div><div class="c" style="left:501px;top:206px;width:39px;height:13px;background:rgb(241,107,14);color:rgba(10,30,5,0.8);font-size:9.65px;padding-right:1.8px;box-shadow:inset -1px -1px 0 rgba(255,255,255,0.32);line-height:12.5px;">5.3</div><div class="c" style="left:540px;top:206px;width:38px;height:13px;background:rgb(240,72,14);color:rgba(10,30,5,0.8);font-size:9.65px;padding-right:1.8px;box-shadow:inset -1px -1px 0 rgba(255,255,255,0.32);line-height:12.5px;">1.9</div><div class="c" style="left:578px;top:206px;width:38px;height:13px;background:rgb(240,47,14);color:rgba(10,30,5,0.8);font-size:9.65px;padding-right:1.8px;box-shadow:inset -1px -1px 0 rgba(255,255,255,0.32);line-height:12.5px;">-0.8</div><div class="c" style="left:616px;top:206px;width:39px;height:13px;background:rgb(239,37,14);color:rgba(10,30,5,0.8);font-size:9.65px;padding-right:1.8px;box-shadow:inset -1px -1px 0 rgba(255,255,255,0.32);line-height:12.5px;">-2.2</div><div class="c" style="left:655px;top:206px;width:38px;height:13px;background:rgb(239,27,14);color:rgba(10,30,5,0.8);font-size:9.65px;padding-right:1.8px;box-shadow:inset -1px -1px 0 rgba(255,255,255,0.32);line-height:12.5px;">-3.7</div><div class="c" style="left:693px;top:206px;width:39px;height:13px;background:rgb(238,18,14);color:rgba(10,30,5,0.8);font-size:9.65px;padding-right:1.8px;box-shadow:inset -1px -1px 0 rgba(255,255,255,0.32);line-height:12.5px;">-5.0</div><div class="c" style="left:732px;top:206px;width:38px;height:13px;background:rgb(238,18,14);color:rgba(10,30,5,0.8);font-size:9.65px;padding-right:1.8px;box-shadow:inset -1px -1px 0 rgba(255,255,255,0.32);line-height:12.5px;">-5.0</div><div class="c" style="left:770px;top:206px;width:20px;height:13px;background:rgb(238,18,14);color:rgba(10,30,5,0.8);font-size:9.65px;padding-right:1.8px;box-shadow:inset -1px -1px 0 rgba(255,255,255,0.32);line-height:12.5px;"></div><div class="c" style="left:0px;top:219px;width:40px;height:14px;background:#ffffff;color:#2c2c2c;font-weight:bold;font-size:10px;padding-right:2px;line-height:17.0px;box-shadow:inset 0 -1px 0 #efefef;">1000</div><div class="c" style="left:40px;top:219px;width:38px;height:14px;background:rgb(242,160,14);color:rgba(10,30,5,0.8);font-size:9.65px;padding-right:1.8px;box-shadow:inset -1px -1px 0 rgba(255,255,255,0.32);line-height:13.5px;">10.0</div><div class="c" style="left:78px;top:219px;width:39px;height:14px;background:rgb(239,207,14);color:rgba(10,30,5,0.8);font-size:9.65px;padding-right:1.8px;box-shadow:inset -1px -1px 0 rgba(255,255,255,0.32);line-height:13.5px;">13.7</div><div class="c" style="left:117px;top:219px;width:38px;height:14px;background:rgb(234,227,14);color:rgba(10,30,5,0.8);font-size:9.65px;padding-right:1.8px;box-shadow:inset -1px -1px 0 rgba(255,255,255,0.32);line-height:13.5px;">15.5</div><div class="c" style="left:155px;top:219px;width:39px;height:14px;background:rgb(215,234,14);color:rgba(10,30,5,0.8);font-size:9.65px;padding-right:1.8px;box-shadow:inset -1px -1px 0 rgba(255,255,255,0.32);line-height:13.5px;">18.0</div><div class="c" style="left:194px;top:219px;width:38px;height:14px;background:rgb(234,227,14);color:rgba(10,30,5,0.8);font-size:9.65px;padding-right:1.8px;box-shadow:inset -1px -1px 0 rgba(255,255,255,0.32);line-height:13.5px;">15.5</div><div class="c" style="left:232px;top:219px;width:38px;height:14px;background:rgb(240,199,14);color:rgba(10,30,5,0.8);font-size:9.65px;padding-right:1.8px;box-shadow:inset -1px -1px 0 rgba(255,255,255,0.32);line-height:13.5px;">13.0</div><div class="c" style="left:270px;top:219px;width:39px;height:14px;background:rgb(242,166,14);color:rgba(10,30,5,0.8);font-size:9.65px;padding-right:1.8px;box-shadow:inset -1px -1px 0 rgba(255,255,255,0.32);line-height:13.5px;">10.5</div><div class="c" style="left:309px;top:219px;width:38px;height:14px;background:rgb(242,138,14);color:rgba(10,30,5,0.8);font-size:9.65px;padding-right:1.8px;box-shadow:inset -1px -1px 0 rgba(255,255,255,0.32);line-height:13.5px;">8.0</div><div class="c" style="left:347px;top:219px;width:39px;height:14px;background:rgb(241,129,14);color:rgba(10,30,5,0.8);font-size:9.65px;padding-right:1.8px;box-shadow:inset -1px -1px 0 rgba(255,255,255,0.32);line-height:13.5px;">7.2</div><div class="c" style="left:386px;top:219px;width:38px;height:14px;background:rgb(241,119,14);color:rgba(10,30,5,0.8);font-size:9.65px;padding-right:1.8px;box-shadow:inset -1px -1px 0 rgba(255,255,255,0.32);line-height:13.5px;">6.3</div><div class="c" style="left:424px;top:219px;width:39px;height:14px;background:rgb(241,100,14);color:rgba(10,30,5,0.8);font-size:9.65px;padding-right:1.8px;box-shadow:inset -1px -1px 0 rgba(255,255,255,0.32);line-height:13.5px;">4.6</div><div class="c" style="left:463px;top:219px;width:38px;height:14px;background:rgb(241,82,14);color:rgba(10,30,5,0.8);font-size:9.65px;padding-right:1.8px;box-shadow:inset -1px -1px 0 rgba(255,255,255,0.32);line-height:13.5px;">2.9</div><div class="c" style="left:501px;top:219px;width:39px;height:14px;background:rgb(240,64,14);color:rgba(10,30,5,0.8);font-size:9.65px;padding-right:1.8px;box-shadow:inset -1px -1px 0 rgba(255,255,255,0.32);line-height:13.5px;">1.2</div><div class="c" style="left:540px;top:219px;width:38px;height:14px;background:rgb(240,48,14);color:rgba(10,30,5,0.8);font-size:9.65px;padding-right:1.8px;box-shadow:inset -1px -1px 0 rgba(255,255,255,0.32);line-height:13.5px;">-0.6</div><div class="c" style="left:578px;top:219px;width:38px;height:14px;background:rgb(239,35,14);color:rgba(10,30,5,0.8);font-size:9.65px;padding-right:1.8px;box-shadow:inset -1px -1px 0 rgba(255,255,255,0.32);line-height:13.5px;">-2.5</div><div class="c" style="left:616px;top:219px;width:39px;height:14px;background:rgb(239,28,14);color:rgba(10,30,5,0.8);font-size:9.65px;padding-right:1.8px;box-shadow:inset -1px -1px 0 rgba(255,255,255,0.32);line-height:13.5px;">-3.6</div><div class="c" style="left:655px;top:219px;width:38px;height:14px;background:rgb(238,18,14);color:rgba(10,30,5,0.8);font-size:9.65px;padding-right:1.8px;box-shadow:inset -1px -1px 0 rgba(255,255,255,0.32);line-height:13.5px;">-5.0</div><div class="c" style="left:693px;top:219px;width:39px;height:14px;background:rgb(238,18,14);color:rgba(10,30,5,0.8);font-size:9.65px;padding-right:1.8px;box-shadow:inset -1px -1px 0 rgba(255,255,255,0.32);line-height:13.5px;">-5.0</div><div class="c" style="left:732px;top:219px;width:38px;height:14px;background:rgb(238,18,14);color:rgba(10,30,5,0.8);font-size:9.65px;padding-right:1.8px;box-shadow:inset -1px -1px 0 rgba(255,255,255,0.32);line-height:13.5px;">-5.0</div><div class="c" style="left:770px;top:219px;width:20px;height:14px;background:rgb(238,18,14);color:rgba(10,30,5,0.8);font-size:9.65px;padding-right:1.8px;box-shadow:inset -1px -1px 0 rgba(255,255,255,0.32);line-height:13.5px;"></div><div class="c" style="left:0px;top:233px;width:40px;height:13px;background:#ffffff;color:#2c2c2c;font-weight:bold;font-size:10px;padding-right:2px;line-height:16.0px;box-shadow:inset 0 -1px 0 #efefef;">500</div><div class="c" style="left:40px;top:233px;width:38px;height:13px;background:rgb(242,160,14);color:rgba(10,30,5,0.8);font-size:9.65px;padding-right:1.8px;box-shadow:inset -1px -1px 0 rgba(255,255,255,0.32);line-height:12.5px;">10.0</div><div class="c" style="left:78px;top:233px;width:39px;height:13px;background:rgb(242,160,14);color:rgba(10,30,5,0.8);font-size:9.65px;padding-right:1.8px;box-shadow:inset -1px -1px 0 rgba(255,255,255,0.32);line-height:12.5px;">10.0</div><div class="c" style="left:117px;top:233px;width:38px;height:13px;background:rgb(242,160,14);color:rgba(10,30,5,0.8);font-size:9.65px;padding-right:1.8px;box-shadow:inset -1px -1px 0 rgba(255,255,255,0.32);line-height:12.5px;">10.0</div><div class="c" style="left:155px;top:233px;width:39px;height:13px;background:rgb(242,160,14);color:rgba(10,30,5,0.8);font-size:9.65px;padding-right:1.8px;box-shadow:inset -1px -1px 0 rgba(255,255,255,0.32);line-height:12.5px;">10.0</div><div class="c" style="left:194px;top:233px;width:38px;height:13px;background:rgb(242,160,14);color:rgba(10,30,5,0.8);font-size:9.65px;padding-right:1.8px;box-shadow:inset -1px -1px 0 rgba(255,255,255,0.32);line-height:12.5px;">10.0</div><div class="c" style="left:232px;top:233px;width:38px;height:13px;background:rgb(242,160,14);color:rgba(10,30,5,0.8);font-size:9.65px;padding-right:1.8px;box-shadow:inset -1px -1px 0 rgba(255,255,255,0.32);line-height:12.5px;">10.0</div><div class="c" style="left:270px;top:233px;width:39px;height:13px;background:rgb(242,138,14);color:rgba(10,30,5,0.8);font-size:9.65px;padding-right:1.8px;box-shadow:inset -1px -1px 0 rgba(255,255,255,0.32);line-height:12.5px;">8.0</div><div class="c" style="left:309px;top:233px;width:38px;height:13px;background:rgb(241,115,14);color:rgba(10,30,5,0.8);font-size:9.65px;padding-right:1.8px;box-shadow:inset -1px -1px 0 rgba(255,255,255,0.32);line-height:12.5px;">6.0</div><div class="c" style="left:347px;top:233px;width:39px;height:13px;background:rgb(241,104,14);color:rgba(10,30,5,0.8);font-size:9.65px;padding-right:1.8px;box-shadow:inset -1px -1px 0 rgba(255,255,255,0.32);line-height:12.5px;">5.0</div><div class="c" style="left:386px;top:233px;width:38px;height:13px;background:rgb(241,94,14);color:rgba(10,30,5,0.8);font-size:9.65px;padding-right:1.8px;box-shadow:inset -1px -1px 0 rgba(255,255,255,0.32);line-height:12.5px;">4.0</div><div class="c" style="left:424px;top:233px;width:39px;height:13px;background:rgb(240,73,14);color:rgba(10,30,5,0.8);font-size:9.65px;padding-right:1.8px;box-shadow:inset -1px -1px 0 rgba(255,255,255,0.32);line-height:12.5px;">2.0</div><div class="c" style="left:463px;top:233px;width:38px;height:13px;background:rgb(240,64,14);color:rgba(10,30,5,0.8);font-size:9.65px;padding-right:1.8px;box-shadow:inset -1px -1px 0 rgba(255,255,255,0.32);line-height:12.5px;">1.2</div><div class="c" style="left:501px;top:233px;width:39px;height:13px;background:rgb(240,56,14);color:rgba(10,30,5,0.8);font-size:9.65px;padding-right:1.8px;box-shadow:inset -1px -1px 0 rgba(255,255,255,0.32);line-height:12.5px;">0.4</div><div class="c" style="left:540px;top:233px;width:38px;height:13px;background:rgb(240,49,14);color:rgba(10,30,5,0.8);font-size:9.65px;padding-right:1.8px;box-shadow:inset -1px -1px 0 rgba(255,255,255,0.32);line-height:12.5px;">-0.4</div><div class="c" style="left:578px;top:233px;width:38px;height:13px;background:rgb(239,30,14);color:rgba(10,30,5,0.8);font-size:9.65px;padding-right:1.8px;box-shadow:inset -1px -1px 0 rgba(255,255,255,0.32);line-height:12.5px;">-3.2</div><div class="c" style="left:616px;top:233px;width:39px;height:13px;background:rgb(238,18,14);color:rgba(10,30,5,0.8);font-size:9.65px;padding-right:1.8px;box-shadow:inset -1px -1px 0 rgba(255,255,255,0.32);line-height:12.5px;">-5.0</div><div class="c" style="left:655px;top:233px;width:38px;height:13px;background:rgb(238,18,14);color:rgba(10,30,5,0.8);font-size:9.65px;padding-right:1.8px;box-shadow:inset -1px -1px 0 rgba(255,255,255,0.32);line-height:12.5px;">-5.0</div><div class="c" style="left:693px;top:233px;width:39px;height:13px;background:rgb(238,18,14);color:rgba(10,30,5,0.8);font-size:9.65px;padding-right:1.8px;box-shadow:inset -1px -1px 0 rgba(255,255,255,0.32);line-height:12.5px;">-5.0</div><div class="c" style="left:732px;top:233px;width:38px;height:13px;background:rgb(238,18,14);color:rgba(10,30,5,0.8);font-size:9.65px;padding-right:1.8px;box-shadow:inset -1px -1px 0 rgba(255,255,255,0.32);line-height:12.5px;">-5.0</div><div class="c" style="left:770px;top:233px;width:20px;height:13px;background:rgb(238,18,14);color:rgba(10,30,5,0.8);font-size:9.65px;padding-right:1.8px;box-shadow:inset -1px -1px 0 rgba(255,255,255,0.32);line-height:12.5px;"></div><div class="c" style="left:0px;top:246px;width:40px;height:14px;background:#c99696;color:#2c2c2c;font-weight:bold;font-size:10px;padding-right:2px;line-height:17.0px;box-shadow:inset 0 -1px 0 #efefef;">0</div><div class="c" style="left:40px;top:246px;width:38px;height:14px;background:#00007f;color:#ffffff;font-weight:bold;font-size:9.65px;padding-right:1.5px;line-height:13.5px;">10.0</div><div class="c" style="left:78px;top:246px;width:39px;height:14px;background:rgb(242,160,14);color:rgba(10,30,5,0.8);font-size:9.65px;padding-right:1.8px;box-shadow:inset -1px -1px 0 rgba(255,255,255,0.32);line-height:13.5px;">10.0</div><div class="c" style="left:117px;top:246px;width:38px;height:14px;background:rgb(242,154,14);color:rgba(10,30,5,0.8);font-size:9.65px;padding-right:1.8px;box-shadow:inset -1px -1px 0 rgba(255,255,255,0.32);line-height:13.5px;">9.5</div><div class="c" style="left:155px;top:246px;width:39px;height:14px;background:rgb(242,149,14);color:rgba(10,30,5,0.8);font-size:9.65px;padding-right:1.8px;box-shadow:inset -1px -1px 0 rgba(255,255,255,0.32);line-height:13.5px;">9.0</div><div class="c" style="left:194px;top:246px;width:38px;height:14px;background:rgb(241,126,14);color:rgba(10,30,5,0.8);font-size:9.65px;padding-right:1.8px;box-shadow:inset -1px -1px 0 rgba(255,255,255,0.32);line-height:13.5px;">7.0</div><div class="c" style="left:232px;top:246px;width:38px;height:14px;background:rgb(241,104,14);color:rgba(10,30,5,0.8);font-size:9.65px;padding-right:1.8px;box-shadow:inset -1px -1px 0 rgba(255,255,255,0.32);line-height:13.5px;">5.0</div><div class="c" style="left:270px;top:246px;width:39px;height:14px;background:rgb(241,83,14);color:rgba(10,30,5,0.8);font-size:9.65px;padding-right:1.8px;box-shadow:inset -1px -1px 0 rgba(255,255,255,0.32);line-height:13.5px;">3.0</div><div class="c" style="left:309px;top:246px;width:38px;height:14px;background:rgb(240,62,14);color:rgba(10,30,5,0.8);font-size:9.65px;padding-right:1.8px;box-shadow:inset -1px -1px 0 rgba(255,255,255,0.32);line-height:13.5px;">1.0</div><div class="c" style="left:347px;top:246px;width:39px;height:14px;background:rgb(240,62,14);color:rgba(10,30,5,0.8);font-size:9.65px;padding-right:1.8px;box-shadow:inset -1px -1px 0 rgba(255,255,255,0.32);line-height:13.5px;">1.0</div><div class="c" style="left:386px;top:246px;width:38px;height:14px;background:rgb(240,62,14);color:rgba(10,30,5,0.8);font-size:9.65px;padding-right:1.8px;box-shadow:inset -1px -1px 0 rgba(255,255,255,0.32);line-height:13.5px;">1.0</div><div class="c" style="left:424px;top:246px;width:39px;height:14px;background:rgb(240,52,14);color:rgba(10,30,5,0.8);font-size:9.65px;padding-right:1.8px;box-shadow:inset -1px -1px 0 rgba(255,255,255,0.32);line-height:13.5px;">0.0</div><div class="c" style="left:463px;top:246px;width:38px;height:14px;background:rgb(240,47,14);color:rgba(10,30,5,0.8);font-size:9.65px;padding-right:1.8px;box-shadow:inset -1px -1px 0 rgba(255,255,255,0.32);line-height:13.5px;">-0.8</div><div class="c" style="left:501px;top:246px;width:39px;height:14px;background:rgb(239,42,14);color:rgba(10,30,5,0.8);font-size:9.65px;padding-right:1.8px;box-shadow:inset -1px -1px 0 rgba(255,255,255,0.32);line-height:13.5px;">-1.5</div><div class="c" style="left:540px;top:246px;width:38px;height:14px;background:rgb(239,37,14);color:rgba(10,30,5,0.8);font-size:9.65px;padding-right:1.8px;box-shadow:inset -1px -1px 0 rgba(255,255,255,0.32);line-height:13.5px;">-2.2</div><div class="c" style="left:578px;top:246px;width:38px;height:14px;background:rgb(238,25,14);color:rgba(10,30,5,0.8);font-size:9.65px;padding-right:1.8px;box-shadow:inset -1px -1px 0 rgba(255,255,255,0.32);line-height:13.5px;">-4.0</div><div class="c" style="left:616px;top:246px;width:39px;height:14px;background:rgb(238,18,14);color:rgba(10,30,5,0.8);font-size:9.65px;padding-right:1.8px;box-shadow:inset -1px -1px 0 rgba(255,255,255,0.32);line-height:13.5px;">-5.0</div><div class="c" style="left:655px;top:246px;width:38px;height:14px;background:rgb(238,18,14);color:rgba(10,30,5,0.8);font-size:9.65px;padding-right:1.8px;box-shadow:inset -1px -1px 0 rgba(255,255,255,0.32);line-height:13.5px;">-5.0</div><div class="c" style="left:693px;top:246px;width:39px;height:14px;background:rgb(238,18,14);color:rgba(10,30,5,0.8);font-size:9.65px;padding-right:1.8px;box-shadow:inset -1px -1px 0 rgba(255,255,255,0.32);line-height:13.5px;">-5.0</div><div class="c" style="left:732px;top:246px;width:38px;height:14px;background:rgb(238,18,14);color:rgba(10,30,5,0.8);font-size:9.65px;padding-right:1.8px;box-shadow:inset -1px -1px 0 rgba(255,255,255,0.32);line-height:13.5px;">-5.0</div><div class="c" style="left:770px;top:246px;width:20px;height:14px;background:rgb(238,18,14);color:rgba(10,30,5,0.8);font-size:9.65px;padding-right:1.8px;box-shadow:inset -1px -1px 0 rgba(255,255,255,0.32);line-height:13.5px;"></div></div>
<svg class="r" style="left:321.0px;top:308.5px;" width="4" height="7" viewBox="0 0 4 7"><path d="M0 0l3.500 3.500-3.500 3.500z" fill="#1f6fe0"/></svg>
<svg class="r" style="left:985.0px;top:306.5px;" width="11" height="11" viewBox="0 0 11 11"><circle cx="5.500" cy="5.500" r="3.600" fill="none" stroke="#3b6fd0" stroke-width="1.500"/></svg>
<svg class="r" style="left:986.0px;top:252.0px;" width="10" height="6" viewBox="0 0 10 6"><circle cx="5" cy="1" r="3" fill="#3b6fd0"/></svg>
<svg class="r" style="left:647.0px;top:308.5px;" width="12" height="18" viewBox="0 0 12 18"><path d="M1 1v13.500l3.200-3 2.300 5 2-0.900-2.300-4.900h4.300z" fill="#fff" stroke="#222" stroke-width="0.700"/></svg>
<div class="r" style="left:204.0px;top:528.0px;width:996.0px;height:14.0px;background:#8fb0dc;"></div>
<div class="t " style="top:528.5px;height:14px;line-height:14px;font-size:9.60px;color:#1a2433;left:207.0px;letter-spacing:-0.10px;">Data Manager - Playback</div>
<svg class="r" style="left:1186.0px;top:530.0px;" width="10" height="12" viewBox="0 0 10 12"><path d="M3 1.500h4v5h-4z M1.500 6.500h7 M5 6.500v4.500" fill="none" stroke="#fff" stroke-width="1.100"/></svg>
<div class="r" style="left:204.0px;top:542.0px;width:996.0px;height:128.0px;background:#f0f0f0;"></div>
<div class="r" style="left:204.5px;top:544.5px;width:995.0px;height:21.5px;background:linear-gradient(#ffffff,#f6f6f6);border:1px solid #d0d0d0;border-top-color:#5c5c5c;border-left-color:#6a6a6a;"></div>
<div class="t " style="top:548.0px;height:14px;line-height:14px;font-size:9.60px;color:#222;left:210.0px;letter-spacing:-0.23px;">Close Playback</div>
<div class="r" style="left:281.0px;top:548.0px;width:1.0px;height:15.0px;background:#d4d4d4;"></div>
<svg class="r" style="left:285.0px;top:549.0px;" width="12" height="13" viewBox="0 0 12 13"><path d="M1.500 1l10 5.500-10 5.500z" fill="#1fc01f"/></svg>
<div class="r" style="left:305.3px;top:550.3px;width:2.8px;height:10.5px;background:#b2b2b2;"></div>
<div class="r" style="left:310.7px;top:550.3px;width:2.8px;height:10.5px;background:#b2b2b2;"></div>
<div class="t " style="top:548.0px;height:14px;line-height:14px;font-size:9.60px;color:#222;left:321.0px;letter-spacing:-0.39px;">Rate:</div>
<div class="r" style="left:345.0px;top:547.0px;width:72.0px;height:17.0px;background:#ffffff;"></div>
<div class="t " style="top:548.0px;height:14px;line-height:14px;font-size:9.60px;color:#222;left:350.0px;">1</div>
<svg class="r" style="left:408.5px;top:553.5px;" width="6" height="4" viewBox="0 0 6 4"><path d="M0.300 0.500h5l-2.500 2.800z" fill="#222"/></svg>
<div class="r" style="left:419.5px;top:548.0px;width:1.0px;height:15.0px;background:#d4d4d4;"></div>
<div class="t " style="top:548.0px;height:14px;line-height:14px;font-size:9.60px;color:#222;left:426.0px;letter-spacing:-0.20px;">Channels</div>
<div class="r" style="left:471.5px;top:548.0px;width:1.0px;height:15.0px;background:#d4d4d4;"></div>
<div class="t " style="top:548.0px;height:14px;line-height:14px;font-size:9.60px;color:#111;left:477.0px;font-weight:bold;letter-spacing:-0.33px;">Cursor Position:</div>
<div class="t " style="top:548.0px;height:14px;line-height:14px;font-size:9.60px;color:#222;left:552.0px;letter-spacing:-0.30px;">6.338</div>
<div class="t " style="top:548.0px;height:14px;line-height:14px;font-size:9.60px;color:#222;left:580.0px;letter-spacing:-0.54px;">(sec.ms)</div>
<div class="r" style="left:205.0px;top:566.5px;width:994.5px;height:85.5px;background:#000000;border:1px solid #777;"></div>
<svg class="r" style="left:206px;top:567.5px" width="992.5" height="83.5" viewBox="0 0 992.5 83.5"><path d="M0.0 2.5 L992.0 2.5" fill="none" stroke="#b08858" stroke-width="1.2" stroke-linejoin="round"/><path d="M0.0 25.7 L354.0 25.7" fill="none" stroke="#a82828" stroke-width="1.3" stroke-linejoin="round"/><path d="M684.0 30.5 L992.0 30.5" fill="none" stroke="#a82828" stroke-width="1.3" stroke-linejoin="round"/><path d="M0.0 60.2 L992.0 60.2" fill="none" stroke="#d08888" stroke-width="1.1" stroke-linejoin="round"/><path d="M0.0 68.2 L724.0 68.2" fill="none" stroke="#b08040" stroke-width="1.1" stroke-linejoin="round"/><path d="M724.0 66.5 L992.0 66.5" fill="none" stroke="#b0a868" stroke-width="1.1" stroke-linejoin="round"/><path d="M0.0 81.5 L734.0 81.5" fill="none" stroke="#b02020" stroke-width="1.6" stroke-linejoin="round"/><path d="M0.0 41.5 L992.0 41.5" fill="none" stroke="#d8a0b0" stroke-width="1.6" stroke-linejoin="round"/><path d="M564.0 37.5 L579.0 35.5 L594.0 33.5 L992.0 33.5" fill="none" stroke="#94b0d0" stroke-width="1.3" stroke-linejoin="round"/><path d="M734.0 49.1 L992.0 49.1" fill="none" stroke="#7c9cc0" stroke-width="1.1" stroke-linejoin="round"/><path d="M734.0 80.0 L992.0 80.0" fill="none" stroke="#f0d020" stroke-width="1.6" stroke-linejoin="round"/><path d="M804.0 77.5 L992.0 77.5" fill="none" stroke="#a8d890" stroke-width="1" stroke-linejoin="round"/><path d="M1.0 80.5 L4.0 32.5 L9.0 2.5" fill="none" stroke="#f09030" stroke-width="1.1" stroke-linejoin="round"/><path d="M0.0 80.5 L6.0 42.5 L14.0 3.5" fill="none" stroke="#e8a0a8" stroke-width="1" stroke-linejoin="round"/><path d="M0.0 42.5 L4.0 48.5 L8.0 40.5" fill="none" stroke="#ffffff" stroke-width="1.4" stroke-linejoin="round"/><path d="M9.0 19.0 L16.0 18.0 L21.0 19.8 L26.0 21.5 L31.0 21.0 L36.0 20.5 L44.0 24.5 L50.0 22.5 L56.0 20.5 L62.5 20.0 L69.0 19.5 L75.5 20.0 L82.0 20.5 L88.0 21.5 L94.0 22.5 L101.0 20.5 L108.0 26.0 L116.0 20.5 L124.0 15.5 L129.0 11.5 L134.0 7.5 L142.0 2.5" fill="none" stroke="#f0a030" stroke-width="1.2" stroke-linejoin="round"/><circle cx="9.0" cy="19.0" r="1.500" fill="#f0a030"/><circle cx="16.0" cy="18.0" r="1.500" fill="#f0a030"/><circle cx="21.0" cy="19.8" r="1.500" fill="#f0a030"/><circle cx="26.0" cy="21.5" r="1.500" fill="#f0a030"/><circle cx="31.0" cy="21.0" r="1.500" fill="#f0a030"/><circle cx="36.0" cy="20.5" r="1.500" fill="#f0a030"/><circle cx="44.0" cy="24.5" r="1.500" fill="#f0a030"/><circle cx="50.0" cy="22.5" r="1.500" fill="#f0a030"/><circle cx="56.0" cy="20.5" r="1.500" fill="#f0a030"/><circle cx="62.5" cy="20.0" r="1.500" fill="#f0a030"/><circle cx="69.0" cy="19.5" r="1.500" fill="#f0a030"/><circle cx="75.5" cy="20.0" r="1.500" fill="#f0a030"/><circle cx="82.0" cy="20.5" r="1.500" fill="#f0a030"/><circle cx="88.0" cy="21.5" r="1.500" fill="#f0a030"/><circle cx="94.0" cy="22.5" r="1.500" fill="#f0a030"/><circle cx="101.0" cy="20.5" r="1.500" fill="#f0a030"/><circle cx="108.0" cy="26.0" r="1.500" fill="#f0a030"/><circle cx="116.0" cy="20.5" r="1.500" fill="#f0a030"/><circle cx="124.0" cy="15.5" r="1.500" fill="#f0a030"/><circle cx="129.0" cy="11.5" r="1.500" fill="#f0a030"/><circle cx="134.0" cy="7.5" r="1.500" fill="#f0a030"/><circle cx="142.0" cy="2.5" r="1.500" fill="#f0a030"/><path d="M0.0 21.2 L54.0 22.0 L124.0 23.0 L174.0 21.5 L214.0 19.5 L294.0 15.5 L334.0 12.5 L434.0 9.5 L524.0 5.5 L594.0 2.5" fill="none" stroke="#8aa8c8" stroke-width="1.2" stroke-linejoin="round"/><path d="M0.0 27.0 L34.0 31.5 L64.0 35.5 L94.0 32.5 L114.0 35.5 L129.0 34.5 L144.0 28.5 L156.0 18.5 L169.0 12.5 L194.0 10.5 L204.0 12.5 L214.0 11.5 L264.0 10.5 L334.0 11.5 L414.0 15.5 L494.0 18.5 L554.0 22.5 L589.0 24.5" fill="none" stroke="#84b094" stroke-width="1.1" stroke-linejoin="round"/><path d="M0.0 41.5 L124.0 41.0 L194.0 36.5 L264.0 29.5 L334.0 22.5 L434.0 14.5 L534.0 7.5 L594.0 4.5" fill="none" stroke="#f0b8c0" stroke-width="1.3" stroke-linejoin="round"/><path d="M274.0 29.5 L334.0 21.5 L434.0 13.5 L534.0 8.0 L589.0 3.5" fill="none" stroke="#d83030" stroke-width="1.6" stroke-linejoin="round"/><path d="M0.0 44.3 L94.0 43.5 L194.0 38.5 L264.0 34.0 L334.0 29.5 L414.0 22.5 L494.0 16.5 L574.0 10.5 L591.0 3.5" fill="none" stroke="#e8d848" stroke-width="1.2" stroke-linejoin="round"/><path d="M0.0 46.5 L134.0 44.5 L234.0 38.5 L334.0 32.5 L434.0 24.5 L494.0 20.5 L500.0 23.5 L514.0 18.5 L584.0 14.5" fill="none" stroke="#c8d858" stroke-width="1" stroke-linejoin="round"/><path d="M0.0 67.5 L64.0 66.5 L134.0 65.0 L194.0 58.5 L264.0 48.5 L334.0 39.0 L414.0 28.5 L494.0 18.5 L589.0 12.5" fill="none" stroke="#f0d040" stroke-width="1.25" stroke-linejoin="round" stroke-dasharray="2.5 1.5"/><path d="M0.0 43.0 L94.0 42.5 L214.0 40.5" fill="none" stroke="#f4f0f0" stroke-width="1.2" stroke-linejoin="round"/><path d="M9.0 61.5 L19.0 63.5 L27.3 63.8 L35.7 64.2 L44.0 64.5 L52.3 64.6 L60.7 64.7 L69.0 64.8 L77.3 64.8 L85.7 64.9 L94.0 65.0 L101.5 65.1 L109.0 65.2 L116.5 65.2 L124.0 65.3 L131.5 65.4 L139.0 65.5 L149.0 67.5 L159.0 69.5 L167.3 71.0 L175.7 72.5 L184.0 74.0 L194.0 75.8 L204.0 77.5 L214.0 78.8 L224.0 80.0" fill="none" stroke="#f4c8d4" stroke-width="1.3" stroke-linejoin="round"/><circle cx="9.0" cy="61.5" r="1.500" fill="#f4c8d4"/><circle cx="19.0" cy="63.5" r="1.500" fill="#f4c8d4"/><circle cx="27.3" cy="63.8" r="1.500" fill="#f4c8d4"/><circle cx="35.7" cy="64.2" r="1.500" fill="#f4c8d4"/><circle cx="44.0" cy="64.5" r="1.500" fill="#f4c8d4"/><circle cx="52.3" cy="64.6" r="1.500" fill="#f4c8d4"/><circle cx="60.7" cy="64.7" r="1.500" fill="#f4c8d4"/><circle cx="69.0" cy="64.8" r="1.500" fill="#f4c8d4"/><circle cx="77.3" cy="64.8" r="1.500" fill="#f4c8d4"/><circle cx="85.7" cy="64.9" r="1.500" fill="#f4c8d4"/><circle cx="94.0" cy="65.0" r="1.500" fill="#f4c8d4"/><circle cx="101.5" cy="65.1" r="1.500" fill="#f4c8d4"/><circle cx="109.0" cy="65.2" r="1.500" fill="#f4c8d4"/><circle cx="116.5" cy="65.2" r="1.500" fill="#f4c8d4"/><circle cx="124.0" cy="65.3" r="1.500" fill="#f4c8d4"/><circle cx="131.5" cy="65.4" r="1.500" fill="#f4c8d4"/><circle cx="139.0" cy="65.5" r="1.500" fill="#f4c8d4"/><circle cx="149.0" cy="67.5" r="1.500" fill="#f4c8d4"/><circle cx="159.0" cy="69.5" r="1.500" fill="#f4c8d4"/><circle cx="167.3" cy="71.0" r="1.500" fill="#f4c8d4"/><circle cx="175.7" cy="72.5" r="1.500" fill="#f4c8d4"/><circle cx="184.0" cy="74.0" r="1.500" fill="#f4c8d4"/><circle cx="194.0" cy="75.8" r="1.500" fill="#f4c8d4"/><circle cx="204.0" cy="77.5" r="1.500" fill="#f4c8d4"/><circle cx="214.0" cy="78.8" r="1.500" fill="#f4c8d4"/><circle cx="224.0" cy="80.0" r="1.500" fill="#f4c8d4"/><path d="M0.0 48.5 L24.0 50.5 L54.0 47.5 L84.0 51.5 L114.0 48.5 L144.0 53.5 L174.0 51.5 L204.0 55.5 L234.0 53.5 L264.0 48.5 L294.0 50.5 L334.0 49.5 L364.0 49.5 L434.0 48.5 L494.0 51.5 L524.0 52.5 L564.0 49.5 L594.0 36.5 L624.0 34.5 L654.0 33.5" fill="none" stroke="#90c0d8" stroke-width="1.1" stroke-linejoin="round"/><path d="M0.0 53.5 L34.0 55.5 L74.0 52.5 L104.0 57.5 L124.0 50.5 L139.0 60.5 L154.0 54.5 L184.0 59.5 L214.0 57.5 L234.0 61.5 L264.0 54.5 L294.0 54.5 L324.0 54.5 L354.0 55.5 L369.0 53.5 L384.0 57.5 L414.0 56.5 L444.0 60.5 L464.0 63.5 L484.0 61.5 L504.0 66.5 L524.0 69.5 L544.0 72.5 L569.0 74.5 L594.0 75.5 L609.0 62.5 L616.0 53.5" fill="none" stroke="#c8a8b0" stroke-width="1.1" stroke-linejoin="round"/><path d="M0.0 56.5 L44.0 58.5 L94.0 56.5 L144.0 57.0 L194.0 52.5 L234.0 46.5 L264.0 48.5 L284.0 54.5 L314.0 56.5" fill="none" stroke="#78a878" stroke-width="1" stroke-linejoin="round"/><path d="M0.0 72.5 L34.0 74.5 L94.0 77.5 L134.0 75.5 L174.0 73.0 L214.0 74.5 L264.0 77.5 L334.0 79.5 L434.0 80.5 L594.0 79.5" fill="none" stroke="#b82020" stroke-width="1.3" stroke-linejoin="round"/><path d="M23.5 80.5 L30.5 2.5 L32.5 2.5 L39.5 80.5" fill="none" stroke="#8fd08f" stroke-width="1.1" stroke-linejoin="round"/><path d="M281.8 80.5 L288.8 2.5 L290.8 2.5 L297.8 80.5" fill="none" stroke="#8fd08f" stroke-width="1.1" stroke-linejoin="round"/><path d="M377.6 80.5 L384.6 2.5 L386.6 2.5 L393.6 80.5" fill="none" stroke="#8fd08f" stroke-width="1.1" stroke-linejoin="round"/><path d="M561.7 80.5 L568.7 2.5 L570.7 2.5 L577.7 80.5" fill="none" stroke="#8fd08f" stroke-width="1.1" stroke-linejoin="round"/><path d="M700.7 80.5 L707.7 2.5 L709.7 2.5 L716.7 80.5" fill="none" stroke="#8fd08f" stroke-width="1.1" stroke-linejoin="round"/><path d="M795.0 80.5 L802.0 2.5 L804.0 2.5 L811.0 80.5" fill="none" stroke="#8fd08f" stroke-width="1.1" stroke-linejoin="round"/><path d="M529.0 2.5 L529.0 80.5" fill="none" stroke="#b8d8e8" stroke-width="1.3" stroke-linejoin="round" stroke-dasharray="4 2.5"/><path d="M591.0 3.5 L594.0 22.5 L599.0 42.5 L606.0 52.5 L616.0 64.5 L626.0 73.5 L644.0 78.5 L694.0 80.5" fill="none" stroke="#e8d040" stroke-width="1.3" stroke-linejoin="round"/><path d="M589.0 4.5 L595.0 32.5 L600.0 44.5 L610.0 50.5 L620.0 62.5 L632.0 76.5 L654.0 79.5" fill="none" stroke="#f0b8c0" stroke-width="1.1" stroke-linejoin="round"/><path d="M594.0 3.5 L624.0 4.5 L644.0 10.5 L652.0 22.5 L658.0 44.5 L664.0 72.5 L668.0 80.5" fill="none" stroke="#c02828" stroke-width="1.8" stroke-linejoin="round"/><path d="M600.0 3.5 L610.0 22.5 L620.0 38.5 L630.0 54.5 L640.0 72.5 L650.0 79.5" fill="none" stroke="#a8d8a0" stroke-width="1" stroke-linejoin="round"/><path d="M616.0 80.5 L620.0 32.5 L622.0 3.5 L626.0 32.5 L632.0 79.5" fill="none" stroke="#8fd08f" stroke-width="1" stroke-linejoin="round"/><path d="M606.0 2.5 L616.0 28.5 L628.0 34.5 L640.0 38.5 L650.0 52.5 L660.0 66.5 L674.0 76.5 L694.0 79.5" fill="none" stroke="#d8d8a0" stroke-width="1" stroke-linejoin="round"/><path d="M594.0 80.5 L600.0 72.5 L606.0 60.5 L612.0 54.5 L618.0 64.5 L624.0 72.5" fill="none" stroke="#e07070" stroke-width="1.2" stroke-linejoin="round"/><path d="M634.0 32.5 L644.0 40.5 L652.0 50.5 L660.0 42.5 L668.0 30.5 L678.0 24.5" fill="none" stroke="#e8a0a0" stroke-width="1" stroke-linejoin="round"/><path d="M640.0 3.5 L646.0 17.5 L652.0 28.5 L660.0 38.5 L668.0 32.5 L678.0 28.5 L694.0 22.5 L706.0 20.5 L729.0 20.5 L744.0 22.5 L759.0 16.5 L774.0 20.5 L789.0 26.5 L802.0 22.5 L814.0 18.5 L827.0 16.0 L854.0 17.5 L884.0 16.5 L914.0 18.5 L934.0 19.5 L944.0 17.5 L964.0 18.5 L992.0 17.5" fill="none" stroke="#c8a8b0" stroke-width="1.1" stroke-linejoin="round"/><path d="M654.0 14.5 L679.0 14.5 L687.0 5.5 L724.0 5.5 L731.0 22.5 L739.0 44.5 L746.0 72.5 L750.0 80.5" fill="none" stroke="#a82020" stroke-width="1.5" stroke-linejoin="round"/><path d="M654.0 28.5 L660.0 42.5 L664.0 62.5 L670.0 78.5" fill="none" stroke="#c02828" stroke-width="1.5" stroke-linejoin="round"/><path d="M654.0 3.5 L674.0 3.5 L694.0 5.5 L709.0 12.5 L719.0 24.5 L729.0 42.5 L744.0 62.5 L759.0 74.5 L779.0 79.5" fill="none" stroke="#c8d870" stroke-width="1" stroke-linejoin="round"/><path d="M654.0 7.5 L674.0 12.5 L694.0 20.5 L709.0 28.5 L724.0 32.5 L739.0 42.5 L752.0 32.5 L759.0 33.5 L769.0 44.5 L779.0 60.5 L794.0 74.5 L806.0 79.5" fill="none" stroke="#90b0c8" stroke-width="1" stroke-linejoin="round"/><path d="M656.0 32.5 L674.0 42.5 L694.0 54.5 L714.0 52.5 L729.0 44.5 L739.0 38.5 L754.0 38.5 L769.0 46.5 L784.0 48.5 L799.0 42.5 L809.0 32.5 L816.0 22.5" fill="none" stroke="#c0b0b8" stroke-width="1" stroke-linejoin="round"/><path d="M658.0 30.5 L664.0 52.5 L672.0 78.5" fill="none" stroke="#a8d8a0" stroke-width="1" stroke-linejoin="round"/><path d="M699.0 80.5 L706.0 42.5 L712.0 12.5 L719.0 17.5 L726.0 32.5 L739.0 57.5 L752.0 73.5 L769.0 79.5" fill="none" stroke="#a0d0b0" stroke-width="1" stroke-linejoin="round"/><path d="M709.0 17.5 L719.0 39.5 L729.0 67.5 L736.0 74.0 L744.0 66.5 L752.0 63.5 L762.0 66.5 L772.0 72.5 L778.0 74.5 L786.0 70.5 L794.0 66.5 L804.0 56.5 L812.0 40.5 L819.0 22.5 L827.0 9.5 L834.0 17.5 L844.0 37.5 L850.0 43.5 L856.0 49.5 L862.5 53.5 L869.0 57.5 L879.0 61.5 L886.5 63.0 L894.0 64.5 L900.7 64.8 L907.3 65.2 L914.0 65.5 L920.7 64.5 L927.3 63.5 L934.0 62.5 L940.7 61.2 L947.3 59.8 L954.0 58.5 L960.7 57.7 L967.3 56.8 L974.0 56.0 L980.0 55.5 L986.0 55.0 L992.0 54.5" fill="none" stroke="#f0a030" stroke-width="1.2" stroke-linejoin="round"/><circle cx="709.0" cy="17.5" r="1.500" fill="#f0a030"/><circle cx="719.0" cy="39.5" r="1.500" fill="#f0a030"/><circle cx="729.0" cy="67.5" r="1.500" fill="#f0a030"/><circle cx="736.0" cy="74.0" r="1.500" fill="#f0a030"/><circle cx="744.0" cy="66.5" r="1.500" fill="#f0a030"/><circle cx="752.0" cy="63.5" r="1.500" fill="#f0a030"/><circle cx="762.0" cy="66.5" r="1.500" fill="#f0a030"/><circle cx="772.0" cy="72.5" r="1.500" fill="#f0a030"/><circle cx="778.0" cy="74.5" r="1.500" fill="#f0a030"/><circle cx="786.0" cy="70.5" r="1.500" fill="#f0a030"/><circle cx="794.0" cy="66.5" r="1.500" fill="#f0a030"/><circle cx="804.0" cy="56.5" r="1.500" fill="#f0a030"/><circle cx="812.0" cy="40.5" r="1.500" fill="#f0a030"/><circle cx="819.0" cy="22.5" r="1.500" fill="#f0a030"/><circle cx="827.0" cy="9.5" r="1.500" fill="#f0a030"/><circle cx="834.0" cy="17.5" r="1.500" fill="#f0a030"/><circle cx="844.0" cy="37.5" r="1.500" fill="#f0a030"/><circle cx="850.0" cy="43.5" r="1.500" fill="#f0a030"/><circle cx="856.0" cy="49.5" r="1.500" fill="#f0a030"/><circle cx="862.5" cy="53.5" r="1.500" fill="#f0a030"/><circle cx="869.0" cy="57.5" r="1.500" fill="#f0a030"/><circle cx="879.0" cy="61.5" r="1.500" fill="#f0a030"/><circle cx="886.5" cy="63.0" r="1.500" fill="#f0a030"/><circle cx="894.0" cy="64.5" r="1.500" fill="#f0a030"/><circle cx="900.7" cy="64.8" r="1.500" fill="#f0a030"/><circle cx="907.3" cy="65.2" r="1.500" fill="#f0a030"/><circle cx="914.0" cy="65.5" r="1.500" fill="#f0a030"/><circle cx="920.7" cy="64.5" r="1.500" fill="#f0a030"/><circle cx="927.3" cy="63.5" r="1.500" fill="#f0a030"/><circle cx="934.0" cy="62.5" r="1.500" fill="#f0a030"/><circle cx="940.7" cy="61.2" r="1.500" fill="#f0a030"/><circle cx="947.3" cy="59.8" r="1.500" fill="#f0a030"/><circle cx="954.0" cy="58.5" r="1.500" fill="#f0a030"/><circle cx="960.7" cy="57.7" r="1.500" fill="#f0a030"/><circle cx="967.3" cy="56.8" r="1.500" fill="#f0a030"/><circle cx="974.0" cy="56.0" r="1.500" fill="#f0a030"/><circle cx="980.0" cy="55.5" r="1.500" fill="#f0a030"/><circle cx="986.0" cy="55.0" r="1.500" fill="#f0a030"/><circle cx="992.0" cy="54.5" r="1.500" fill="#f0a030"/><path d="M729.0 58.5 L736.0 55.5 L744.0 54.5 L754.0 59.5 L764.0 64.5 L774.0 62.5 L784.0 60.5 L794.0 55.5 L804.0 46.5 L814.0 32.5 L822.0 14.5 L828.0 29.5 L834.0 42.5 L842.0 52.5 L848.0 51.8 L854.0 51.0 L861.5 52.8 L869.0 54.5 L875.2 54.8 L881.5 55.0 L887.8 55.2 L894.0 55.5 L900.2 55.0 L906.5 54.5 L912.8 54.0 L919.0 53.5 L925.2 52.8 L931.5 52.0 L937.8 51.2 L944.0 50.5 L950.2 49.9 L956.5 49.2 L962.8 48.6 L969.0 48.0 L976.7 47.8 L984.3 47.7 L992.0 47.5" fill="none" stroke="#f08898" stroke-width="1.1" stroke-linejoin="round"/><circle cx="729.0" cy="58.5" r="1.500" fill="#f08898"/><circle cx="736.0" cy="55.5" r="1.500" fill="#f08898"/><circle cx="744.0" cy="54.5" r="1.500" fill="#f08898"/><circle cx="754.0" cy="59.5" r="1.500" fill="#f08898"/><circle cx="764.0" cy="64.5" r="1.500" fill="#f08898"/><circle cx="774.0" cy="62.5" r="1.500" fill="#f08898"/><circle cx="784.0" cy="60.5" r="1.500" fill="#f08898"/><circle cx="794.0" cy="55.5" r="1.500" fill="#f08898"/><circle cx="804.0" cy="46.5" r="1.500" fill="#f08898"/><circle cx="814.0" cy="32.5" r="1.500" fill="#f08898"/><circle cx="822.0" cy="14.5" r="1.500" fill="#f08898"/><circle cx="828.0" cy="29.5" r="1.500" fill="#f08898"/><circle cx="834.0" cy="42.5" r="1.500" fill="#f08898"/><circle cx="842.0" cy="52.5" r="1.500" fill="#f08898"/><circle cx="848.0" cy="51.8" r="1.500" fill="#f08898"/><circle cx="854.0" cy="51.0" r="1.500" fill="#f08898"/><circle cx="861.5" cy="52.8" r="1.500" fill="#f08898"/><circle cx="869.0" cy="54.5" r="1.500" fill="#f08898"/><circle cx="875.2" cy="54.8" r="1.500" fill="#f08898"/><circle cx="881.5" cy="55.0" r="1.500" fill="#f08898"/><circle cx="887.8" cy="55.2" r="1.500" fill="#f08898"/><circle cx="894.0" cy="55.5" r="1.500" fill="#f08898"/><circle cx="900.2" cy="55.0" r="1.500" fill="#f08898"/><circle cx="906.5" cy="54.5" r="1.500" fill="#f08898"/><circle cx="912.8" cy="54.0" r="1.500" fill="#f08898"/><circle cx="919.0" cy="53.5" r="1.500" fill="#f08898"/><circle cx="925.2" cy="52.8" r="1.500" fill="#f08898"/><circle cx="931.5" cy="52.0" r="1.500" fill="#f08898"/><circle cx="937.8" cy="51.2" r="1.500" fill="#f08898"/><circle cx="944.0" cy="50.5" r="1.500" fill="#f08898"/><circle cx="950.2" cy="49.9" r="1.500" fill="#f08898"/><circle cx="956.5" cy="49.2" r="1.500" fill="#f08898"/><circle cx="962.8" cy="48.6" r="1.500" fill="#f08898"/><circle cx="969.0" cy="48.0" r="1.500" fill="#f08898"/><circle cx="976.7" cy="47.8" r="1.500" fill="#f08898"/><circle cx="984.3" cy="47.7" r="1.500" fill="#f08898"/><circle cx="992.0" cy="47.5" r="1.500" fill="#f08898"/><path d="M812.0 26.5 L820.0 12.5 L827.0 3.5 L834.0 4.5 L842.0 14.5 L854.0 27.5 L869.0 34.5 L884.0 39.5 L904.0 42.0 L924.0 42.5 L954.0 39.5 L974.0 36.5 L992.0 35.5" fill="none" stroke="#d8b898" stroke-width="1.1" stroke-linejoin="round"/><path d="M804.0 78.5 L816.0 72.5 L829.0 64.5 L842.0 56.5 L854.0 53.5 L866.0 52.5 L876.0 55.5 L886.0 59.5 L914.0 60.5 L992.0 59.5" fill="none" stroke="#7090b0" stroke-width="1.1" stroke-linejoin="round"/></svg>
<div class="r" style="left:204.5px;top:652.5px;width:123.0px;height:15.5px;background:#ffffff;border:1px solid #c4c4c4;border-top:none;border-radius:0 0 3px 3px;"></div>
<div class="r" style="left:211.0px;top:656.0px;width:2.0px;height:9.0px;background:#1a1ad0;"></div>
<div class="r" style="left:215.0px;top:656.0px;width:2.0px;height:9.0px;background:#1a1ad0;"></div>
<div class="t " style="top:653.3px;height:14px;line-height:14px;font-size:9.40px;color:#222;left:221.0px;letter-spacing:-0.22px;">Data Manager - Playback</div>
<div class="t " style="top:654.3px;height:14px;line-height:14px;font-size:9.40px;color:#8a8a8a;left:333.0px;letter-spacing:-0.35px;">Devices</div>
<div class="r" style="left:64.0px;top:688.0px;width:1152.0px;height:32.0px;background:#0b0d12;"></div>
<div class="r" style="left:64.0px;top:688.0px;width:38.0px;height:32.0px;background:#000000;"></div>
<svg class="r" style="left:76.3px;top:697.3px;" width="14" height="14" viewBox="0 0 14 14"><path d="M0 2l5.800-0.800v5.400h-5.800z M6.600 1.100l7.400-1.100v6.600h-7.400z M0 7.400h5.800v5.400l-5.800-0.800z M6.600 7.400h7.400v6.600l-7.400-1.100z" fill="#ffffff"/></svg>
<div class="r" style="left:102.0px;top:688.0px;width:275.5px;height:32.0px;background:#f2f2f2;"></div>
<svg class="r" style="left:110.0px;top:695.5px;" width="17" height="17" viewBox="0 0 17 17"><circle cx="8.500" cy="8.500" r="7" fill="none" stroke="#111" stroke-width="2"/></svg>
<div class="t " style="top:695.3px;height:18px;line-height:18px;font-size:12.00px;color:#3a3a3a;left:134.0px;letter-spacing:-0.37px;">Type here to search</div>
<svg class="r" style="left:355.0px;top:695.0px;" width="12" height="18" viewBox="0 0 12 18"><rect x="3.700" y="1.500" width="4.600" height="9" rx="2.300" fill="none" stroke="#444" stroke-width="1"/><path d="M1.800 8.500c0 5.500 8.400 5.500 8.400 0M6 12.600v3M3.800 15.800h4.400" fill="none" stroke="#444" stroke-width="1"/></svg>
<svg class="r" style="left:389.0px;top:697.0px;" width="15" height="14" viewBox="0 0 15 14"><path d="M1 2.500h9v9h-9z" fill="none" stroke="#fff" stroke-width="1.300"/><path d="M1 5h9M1 9h9" stroke="#fff" stroke-width="1"/><path d="M12.500 2.500v2M12.500 6v2.500M12.500 10v1.500" stroke="#fff" stroke-width="1.500"/></svg>
<svg class="r" style="left:429.0px;top:695.0px;" width="17" height="18" viewBox="0 0 17 18"><path d="M1.200 9.200c0.300-5.200 3.800-8 7.700-8 4.600 0 7.300 3.400 7 8.300h-10.400c0.200 2.500 2.200 4 4.800 4 1.800 0 3.400-0.500 4.800-1.300v3.300c-1.500 0.800-3.400 1.200-5.400 1.200-4.400 0-7.400-2.700-7.400-7 0-2.700 1.300-4.800 3.400-6-1.100 1.100-1.700 2.500-1.800 3.500h6.900c0-2-1-3.400-3-3.400-2.500 0-5.300 1.900-6.600 5.400z" fill="#1e7fd8"/></svg>
<svg class="r" style="left:467.0px;top:696.0px;" width="19" height="16" viewBox="0 0 19 16"><path d="M1 2.500h6l1.500 1.500h9.500v10.500h-17z" fill="#f4c64a"/><path d="M1 6h17v8.500h-17z" fill="#fbe08a"/><path d="M5.500 9h8v5.500h-8z" fill="#3a9ad9"/><path d="M7.500 11.500h4v3h-4z" fill="#fbe08a"/></svg>
<svg class="r" style="left:507.0px;top:695.5px;" width="18" height="17" viewBox="0 0 18 17"><rect x="0.500" y="0.500" width="16" height="16" fill="#f0e060" stroke="#c8c8c8" stroke-width="0.600"/><rect x="6" y="1" width="10" height="6" fill="#ffffff"/><path d="M2 10l3 4 9-11" fill="none" stroke="#e03030" stroke-width="1.600"/><path d="M2 13l4 2.500 9-9" fill="none" stroke="#2060d0" stroke-width="1.400"/><path d="M3 6l4 5 6-4" fill="none" stroke="#30a030" stroke-width="1.200"/></svg>
<div class="r" style="left:536.0px;top:688.0px;width:38.0px;height:32.0px;background:#30343a;"></div>
<svg class="r" style="left:545.0px;top:694.5px;" width="19" height="19" viewBox="0 0 19 19"><rect x="1" y="5" width="14" height="13" rx="2" fill="#1a1a1a" stroke="#555" stroke-width="0.500"/><text x="8" y="16" font-family="Liberation Sans, sans-serif" font-weight="bold" font-style="italic" font-size="11.500" text-anchor="middle" fill="#f5c518">H</text><path d="M13 0.500l-3.500 6h2.800l-1.800 5 5.500-7h-3l2.200-4z" fill="#f5c518"/></svg>
<div class="r" style="left:499.5px;top:717.5px;width:32.5px;height:2.5px;background:#8cc0ec;"></div>
<div class="r" style="left:536.0px;top:717.5px;width:38.5px;height:2.5px;background:#9ccaf0;"></div>
<svg class="r" style="left:1016.0px;top:695.0px;" width="16" height="16" viewBox="0 0 16 16"><circle cx="5" cy="6.500" r="2" fill="none" stroke="#fff" stroke-width="1.100"/><path d="M1.500 13.500c0-4.500 7-4.500 7 0" fill="none" stroke="#fff" stroke-width="1.100"/><circle cx="11" cy="3.800" r="1.800" fill="none" stroke="#fff" stroke-width="1.100"/><path d="M9.500 8.500c1-1.800 5-1.500 5 2" fill="none" stroke="#fff" stroke-width="1.100"/></svg>
<svg class="r" style="left:1046.0px;top:699.0px;" width="12" height="8" viewBox="0 0 12 8"><path d="M1.500 6.500l4.500-4.500 4.500 4.500" fill="none" stroke="#fff" stroke-width="1.200"/></svg>
<svg class="r" style="left:1065.0px;top:698.0px;" width="14" height="11" viewBox="0 0 14 11"><rect x="1" y="2" width="11" height="7.500" fill="none" stroke="#fff" stroke-width="1.100"/><rect x="3.500" y="4" width="5" height="4" fill="#fff"/><path d="M12 4.500h1.500v2.500h-1.500" stroke="#fff" fill="none" stroke-width="0.800"/></svg>
<svg class="r" style="left:1084.0px;top:697.0px;" width="15" height="13" viewBox="0 0 15 13"><rect x="4" y="1" width="10" height="7" fill="none" stroke="#fff" stroke-width="1.100"/><path d="M7 8v2.500M5 11.500h7" stroke="#fff" stroke-width="1.100"/><rect x="0.500" y="4" width="3" height="8" fill="#0b0d12" stroke="#fff" stroke-width="1"/></svg>
<svg class="r" style="left:1103.0px;top:697.0px;" width="15" height="13" viewBox="0 0 15 13"><path d="M1 4.500h2.500l3.500-3v10l-3.500-3h-2.500z" fill="none" stroke="#fff" stroke-width="1"/><path d="M9 4c1.200 1.500 1.200 3.500 0 5M11 2.500c2 2.500 2 5.500 0 8" fill="none" stroke="#fff" stroke-width="0.900"/></svg>
<div class="t " style="top:690.2px;height:14px;line-height:14px;font-size:9.60px;color:#ffffff;left:1046.5px;width:200px;text-align:center;letter-spacing:0.04px;">8:33 AM</div>
<div class="t " style="top:705.0px;height:14px;line-height:14px;font-size:9.60px;color:#ffffff;left:1047.0px;width:200px;text-align:center;letter-spacing:0.03px;">1/22/2019</div>
<svg class="r" style="left:1182.0px;top:696.5px;" width="15" height="14" viewBox="0 0 15 14"><path d="M1 1h12.500v9h-6.500l-3.500 3v-3h-2.500z" fill="none" stroke="#fff" stroke-width="1.100"/></svg>
</div>
</body></html>
